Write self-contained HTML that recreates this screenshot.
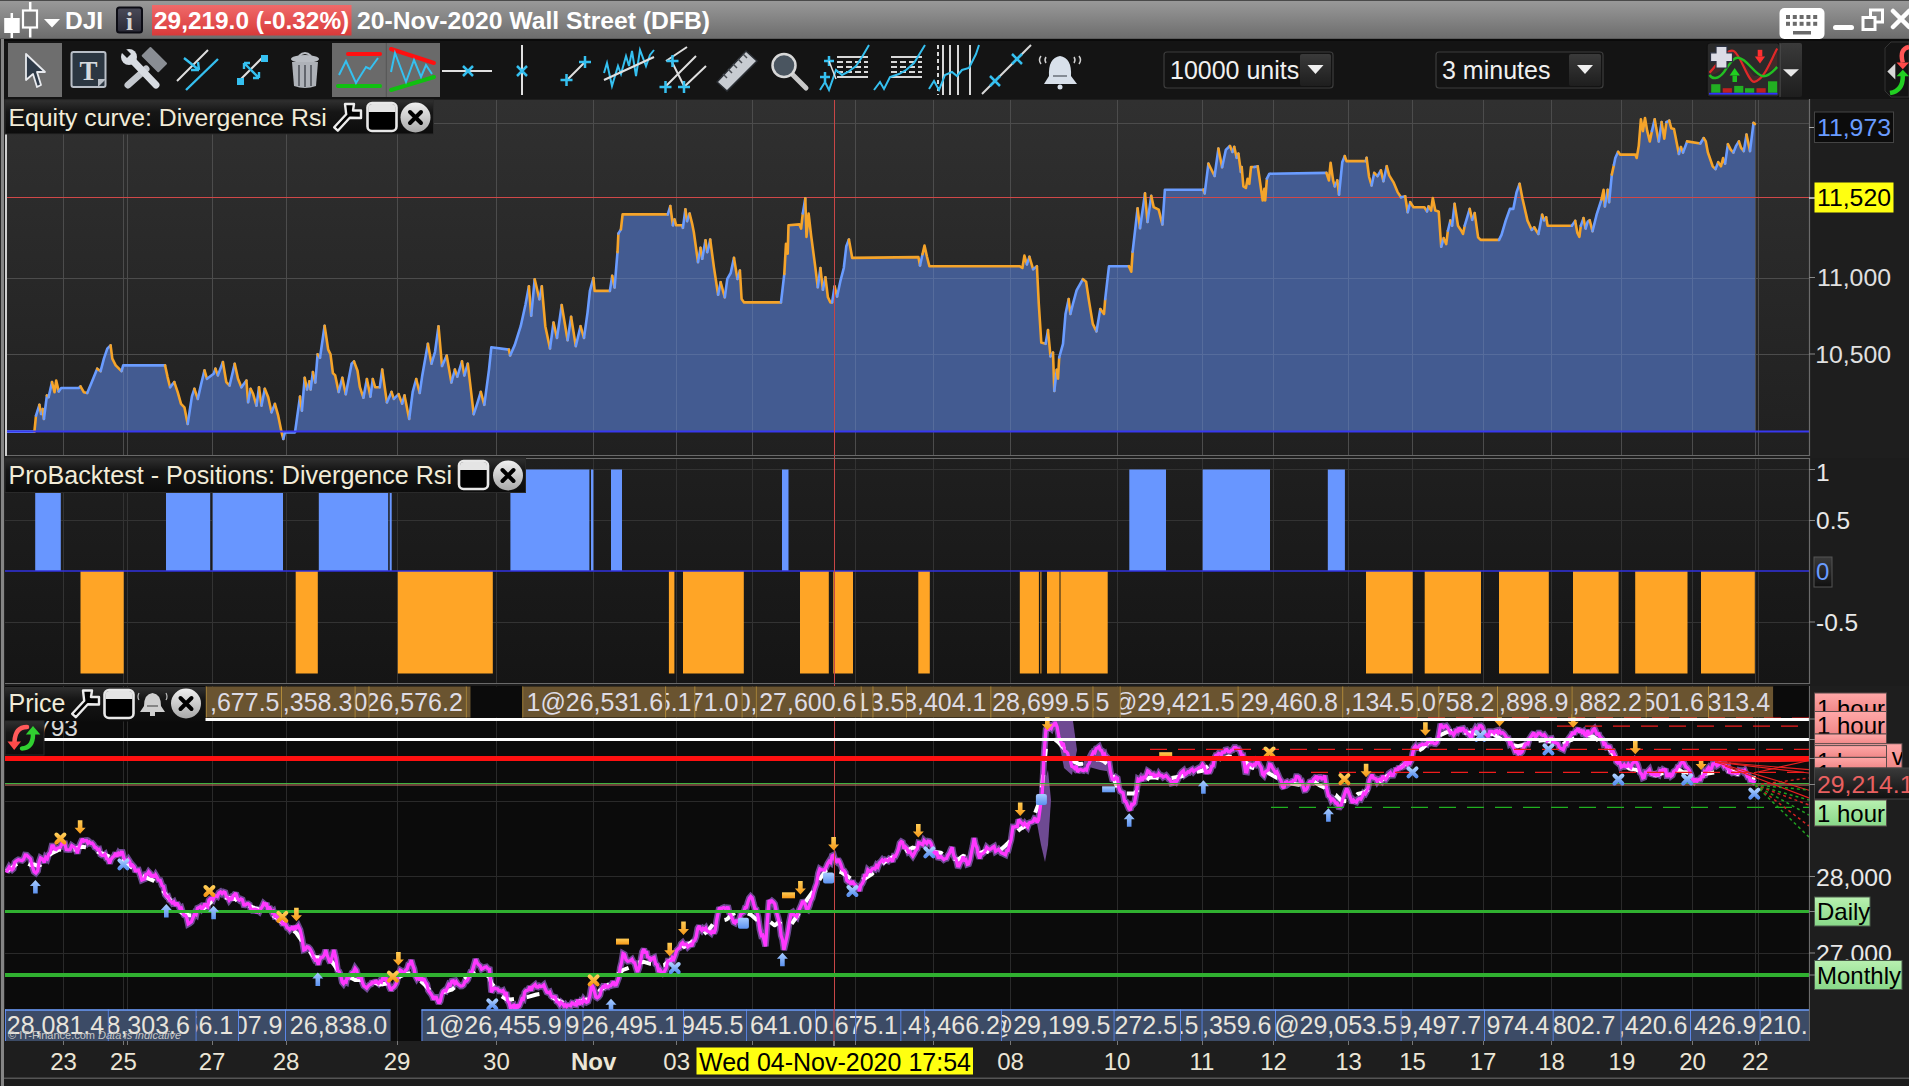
<!DOCTYPE html><html><head><meta charset="utf-8"><style>
html,body{margin:0;padding:0;}
body{width:1909px;height:1086px;overflow:hidden;background:#1c1c1c;font-family:"Liberation Sans", sans-serif;position:relative;}
svg{position:absolute;left:0;top:0;}
svg text{font-family:"Liberation Sans", sans-serif;}
</style></head><body>
<svg width="1909" height="1086" viewBox="0 0 1909 1086">
<defs>
<linearGradient id="gTitle" x1="0" y1="0" x2="0" y2="1"><stop offset="0" stop-color="#9a9a9a"/><stop offset="1" stop-color="#6c6c6c"/></linearGradient>
<linearGradient id="gEq" x1="0" y1="0" x2="0" y2="1"><stop offset="0" stop-color="#303030"/><stop offset="1" stop-color="#202020"/></linearGradient>
<linearGradient id="gRed" x1="0" y1="0" x2="0" y2="1"><stop offset="0" stop-color="#f06a6a"/><stop offset="1" stop-color="#d83a3a"/></linearGradient>
<linearGradient id="gBtn" x1="0" y1="0" x2="0" y2="1"><stop offset="0" stop-color="#3a3a3a"/><stop offset="1" stop-color="#1e1e1e"/></linearGradient>
<linearGradient id="gPink" x1="0" y1="0" x2="0" y2="1"><stop offset="0" stop-color="#ffa8a8"/><stop offset="1" stop-color="#f08888"/></linearGradient>
<linearGradient id="gGreen" x1="0" y1="0" x2="0" y2="1"><stop offset="0" stop-color="#b8f0b0"/><stop offset="1" stop-color="#88d888"/></linearGradient>
<linearGradient id="gDark" x1="0" y1="0" x2="0" y2="1"><stop offset="0" stop-color="#3a3a3a"/><stop offset="1" stop-color="#101010"/></linearGradient>
<linearGradient id="gCircle" x1="0" y1="0" x2="0" y2="1"><stop offset="0" stop-color="#f0f0f0"/><stop offset="1" stop-color="#a8a8a8"/></linearGradient>
<linearGradient id="gLab" x1="0" y1="0" x2="0" y2="1"><stop offset="0" stop-color="#303030"/><stop offset="0.35" stop-color="#161616"/><stop offset="1" stop-color="#0c0c0c"/></linearGradient>
<linearGradient id="gPo" x1="0" y1="0" x2="0" y2="1"><stop offset="0" stop-color="#1f1f1f"/><stop offset="1" stop-color="#151515"/></linearGradient>
<linearGradient id="gMO" x1="0" y1="0" x2="0" y2="1"><stop offset="0" stop-color="#ffcc55"/><stop offset="1" stop-color="#f59818"/></linearGradient><linearGradient id="gMB" x1="0" y1="0" x2="0" y2="1"><stop offset="0" stop-color="#a8ccff"/><stop offset="1" stop-color="#5c92f0"/></linearGradient>
<clipPath id="cEq"><rect x="5" y="100" width="1804" height="356"/></clipPath>
<clipPath id="cPr"><rect x="5" y="687" width="1804" height="353"/></clipPath>
</defs>
<rect x="0" y="0" width="1909" height="1086" fill="#1c1c1c"/><rect x="0" y="39" width="5" height="1047" fill="#262626"/><rect x="1" y="39" width="3" height="1047" fill="#858585"/><rect x="0" y="0" width="1909" height="39" fill="url(#gTitle)"/><rect x="0" y="0" width="1909" height="1" fill="#4a4a4a"/><rect x="0" y="38" width="1909" height="1" fill="#5a5a5a"/><line x1="11.8" y1="13" x2="11.8" y2="38" stroke="#fff" stroke-width="2.5"/><rect x="4.2" y="18" width="15.5" height="15" fill="#fff"/><line x1="30.2" y1="2" x2="30.2" y2="37.5" stroke="#fff" stroke-width="2.5"/><rect x="23" y="10.5" width="14" height="17" fill="#7a7a7a" stroke="#fff" stroke-width="2.2"/><polygon points="44,19 60,19 52,27.5" fill="#fff"/><text x="65" y="29" font-size="24.5" fill="#ffffff" font-weight="bold" text-anchor="start" >DJI</text><linearGradient id="gInfo" x1="0" y1="0" x2="0" y2="1"><stop offset="0" stop-color="#4a4a58"/><stop offset="1" stop-color="#2a2a36"/></linearGradient><rect x="117" y="7.5" width="25" height="25" rx="2.5" fill="url(#gInfo)" stroke="#0c0c14" stroke-width="2"/><text x="129.5" y="29.5" font-size="25" fill="#d4d4d4" font-weight="bold" text-anchor="middle" style="font-family:Liberation Serif">i</text><rect x="152" y="5" width="199.5" height="30.5" fill="url(#gRed)"/><text x="154" y="29" font-size="24.4" fill="#ffffff" font-weight="bold" text-anchor="start" >29,219.0 (-0.32%)</text><text x="357" y="29" font-size="24.7" fill="#ffffff" font-weight="bold" text-anchor="start" >20-Nov-2020 Wall Street (DFB)</text><rect x="1779.5" y="8" width="45" height="31" rx="5" fill="#ffffff"/><rect x="1786.0" y="15.0" width="4" height="4" fill="#6a6a6a"/><rect x="1792.8" y="15.0" width="4" height="4" fill="#6a6a6a"/><rect x="1799.6" y="15.0" width="4" height="4" fill="#6a6a6a"/><rect x="1806.4" y="15.0" width="4" height="4" fill="#6a6a6a"/><rect x="1813.2" y="15.0" width="4" height="4" fill="#6a6a6a"/><rect x="1786.0" y="21.8" width="4" height="4" fill="#6a6a6a"/><rect x="1792.8" y="21.8" width="4" height="4" fill="#6a6a6a"/><rect x="1799.6" y="21.8" width="4" height="4" fill="#6a6a6a"/><rect x="1806.4" y="21.8" width="4" height="4" fill="#6a6a6a"/><rect x="1813.2" y="21.8" width="4" height="4" fill="#6a6a6a"/><rect x="1793" y="31" width="18" height="3.5" fill="#6a6a6a"/><rect x="1833" y="25" width="21" height="5" rx="2.5" fill="#fff"/><rect x="1870.5" y="10" width="12" height="12" fill="none" stroke="#fff" stroke-width="3"/><rect x="1863" y="17.5" width="12" height="12" fill="#777" stroke="#fff" stroke-width="3"/><path d="M1893,11 L1909,27 M1909,11 L1893,27" stroke="#fff" stroke-width="4.5" stroke-linecap="round"/><rect x="4" y="39" width="1905" height="60" fill="#141414"/><rect x="4" y="39" width="1905" height="2" fill="#0a0a0a"/><rect x="8" y="43" width="54" height="54" fill="#6e6e6e"/><path d="M26,54 L45,72 L37,72 L41,85 L37,87 L33,74 L26,80 Z" fill="#2e3a48" stroke="#e8eaee" stroke-width="1.8" stroke-linejoin="round"/><rect x="71.5" y="52" width="34" height="35" rx="2" fill="#2c3742" stroke="#b8bec6" stroke-width="2"/><path d="M98,87 L106,79 L98,79 Z" fill="#b8bec6"/><text x="88.5" y="80" font-size="27" fill="#d6dade" font-weight="bold" text-anchor="middle" style="font-family:Liberation Serif">T</text><line x1="146" y1="69" x2="128" y2="85" stroke="#c4c8ce" stroke-width="7" stroke-linecap="round"/><g transform="rotate(45 154 60)"><rect x="142" y="53" width="24" height="13" rx="1" fill="#8a8e94"/></g><line x1="134" y1="62" x2="156" y2="85" stroke="#d8dce2" stroke-width="7" stroke-linecap="round"/><circle cx="129" cy="57" r="8" fill="#d8dce2"/><path d="M121,52 L127,58 L131,54 L125,48 Z" fill="#141414"/><line x1="177" y1="81" x2="208" y2="50" stroke="#e0e0e0" stroke-width="2"/><line x1="186" y1="90" x2="218" y2="59" stroke="#35c0f0" stroke-width="2.4"/><path d="M184,58 L199,70 M199,70 L198,62 M199,70 L191,70" stroke="#35c0f0" stroke-width="2.4" fill="none"/><line x1="239" y1="81" x2="263" y2="57" stroke="#e0e0e0" stroke-width="2"/><rect x="237" y="78" width="7" height="7" fill="#35c0f0"/><rect x="261" y="55" width="7" height="7" fill="#35c0f0"/><path d="M244,63 L259,78 M244,63 L244,69 M244,63 L250,63 M259,78 L259,72 M259,78 L253,78" stroke="#35c0f0" stroke-width="2.4" fill="none"/><ellipse cx="305" cy="59" rx="14" ry="4" fill="#b8bcc2"/><path d="M299,56 Q305,50 311,56" stroke="#b8bcc2" stroke-width="2" fill="none"/><path d="M292,62 L318,62 L316,86 Q305,90 294,86 Z" fill="#aeb2b8"/><path d="M299,65 L299,86 M305,65 L305,87 M311,65 L311,86" stroke="#4a4e54" stroke-width="1.5"/><rect x="332" y="43" width="108" height="54" fill="#6a6a6a"/><line x1="386.3" y1="43" x2="386.3" y2="97" stroke="#555" stroke-width="1"/><line x1="348" y1="54" x2="380" y2="54" stroke="#ff1010" stroke-width="4" stroke-linecap="round"/><line x1="338" y1="86" x2="380" y2="86" stroke="#10c010" stroke-width="4" stroke-linecap="round"/><polyline points="339,75 346,61 356,83 366,67 370,69 378,58" fill="none" stroke="#35c0f0" stroke-width="2"/><line x1="391" y1="49" x2="434" y2="63" stroke="#ff1010" stroke-width="4" stroke-linecap="round"/><line x1="391" y1="90" x2="434" y2="77" stroke="#10c010" stroke-width="4" stroke-linecap="round"/><polyline points="391,72 395,53 406,82 414,60 421,77 426,65 432,74" fill="none" stroke="#35c0f0" stroke-width="2"/><line x1="442" y1="71" x2="492" y2="71" stroke="#e0e0e0" stroke-width="2"/><path d="M463,66 L473,76 M473,66 L463,76" stroke="#35c0f0" stroke-width="2.5"/><line x1="522" y1="45" x2="522" y2="95" stroke="#e0e0e0" stroke-width="2"/><path d="M517,66 L527,76 M527,66 L517,76" stroke="#35c0f0" stroke-width="2.5"/><line x1="568" y1="79" x2="584" y2="63" stroke="#e0e0e0" stroke-width="2"/><path d="M560.5,80 L572.5,80 M566.5,74 L566.5,86" stroke="#35c0f0" stroke-width="2.5"/><path d="M579,62 L591,62 M585,56 L585,68" stroke="#35c0f0" stroke-width="2.5"/><polyline points="604,73 607,63 612,86 618,66 621,74 626,56 629,66 632,51 636,76 640,50 646,66 650,55 654,50" fill="none" stroke="#35c0f0" stroke-width="2"/><line x1="604" y1="80" x2="654" y2="57" stroke="#e0e0e0" stroke-width="2.2"/><line x1="666" y1="61" x2="687" y2="47" stroke="#e0e0e0" stroke-width="2"/><line x1="666" y1="86" x2="696" y2="56" stroke="#e0e0e0" stroke-width="2"/><line x1="685" y1="86" x2="706" y2="66" stroke="#e0e0e0" stroke-width="2"/><line x1="672" y1="62" x2="684" y2="86" stroke="#e0e0e0" stroke-width="2"/><path d="M666.5,61 L678.5,61 M672.5,55 L672.5,67" stroke="#35c0f0" stroke-width="2.5"/><path d="M659.5,87 L671.5,87 M665.5,81 L665.5,93" stroke="#35c0f0" stroke-width="2.5"/><path d="M678,87 L690,87 M684,81 L684,93" stroke="#35c0f0" stroke-width="2.5"/><path d="M717,82 L746,51 L757,61 L727,91 Z" fill="#c8ccd2" stroke="#2a2e34" stroke-width="1.5"/><path d="M727,78 L723,74 M732,73 L728,69 M737,68 L733,64 M742,63 L738,59 M747,58 L743,54" stroke="#4a4e54" stroke-width="1.5"/><line x1="793" y1="75" x2="806" y2="88" stroke="#c8c8c8" stroke-width="5" stroke-linecap="round"/><circle cx="784" cy="65.5" r="11.5" fill="#4a5560" stroke="#d8d8d8" stroke-width="2.5"/><line x1="837" y1="57" x2="868" y2="57" stroke="#d8d8d8" stroke-width="2" /><line x1="837" y1="62" x2="868" y2="62" stroke="#d8d8d8" stroke-width="2" stroke-dasharray="6,3"/><line x1="837" y1="67" x2="868" y2="67" stroke="#d8d8d8" stroke-width="2" stroke-dasharray="6,3"/><line x1="837" y1="72" x2="868" y2="72" stroke="#d8d8d8" stroke-width="2" stroke-dasharray="6,3"/><line x1="837" y1="77" x2="868" y2="77" stroke="#d8d8d8" stroke-width="2" /><polyline points="820,90 825,82 829,90 836,70 842,75 848,72 856,66 862,57 869,45" fill="none" stroke="#35c0f0" stroke-width="2"/><path d="M824,61 L834,61 M829,56 L829,66" stroke="#35c0f0" stroke-width="2.5"/><path d="M820,77 L830,77 M825,72 L825,82" stroke="#35c0f0" stroke-width="2.5"/><polyline points="829,61 836,79" stroke="#e0e0e0" stroke-width="1.5" fill="none"/><line x1="891" y1="57" x2="922" y2="57" stroke="#d8d8d8" stroke-width="2" /><line x1="891" y1="62" x2="922" y2="62" stroke="#d8d8d8" stroke-width="2" stroke-dasharray="6,3"/><line x1="891" y1="67" x2="922" y2="67" stroke="#d8d8d8" stroke-width="2" stroke-dasharray="6,3"/><line x1="891" y1="72" x2="922" y2="72" stroke="#d8d8d8" stroke-width="2" stroke-dasharray="6,3"/><line x1="891" y1="77" x2="922" y2="77" stroke="#d8d8d8" stroke-width="2" /><polyline points="874,90 880,82 884,89 890,77 899,74 906,70 914,63 925,45" fill="none" stroke="#35c0f0" stroke-width="2"/><line x1="938" y1="45" x2="938" y2="95" stroke="#d8d8d8" stroke-width="2" stroke-dasharray="4,3"/><line x1="943" y1="45" x2="943" y2="95" stroke="#d8d8d8" stroke-width="2"/><line x1="950" y1="45" x2="950" y2="95" stroke="#d8d8d8" stroke-width="2"/><line x1="958" y1="45" x2="958" y2="95" stroke="#d8d8d8" stroke-width="2"/><line x1="970" y1="45" x2="970" y2="95" stroke="#d8d8d8" stroke-width="2"/><polyline points="929,89 934,81 939,90 945,75 952,72 957,76 962,70 969,68 976,54 979,45" fill="none" stroke="#35c0f0" stroke-width="2"/><line x1="982" y1="94" x2="1031" y2="45" stroke="#d8d8d8" stroke-width="2"/><path d="M990,76 L1000,86 M1000,76 L990,86" stroke="#35c0f0" stroke-width="2.5"/><path d="M1012,54 L1022,64 M1022,54 L1012,64" stroke="#35c0f0" stroke-width="2.5"/><path d="M1060,56 Q1072,58 1071,76 L1077,84 L1044,84 L1049,76 Q1048,58 1060,56 Z" fill="#d8e0ea"/><circle cx="1060" cy="87" r="2.5" fill="#d8e0ea"/><line x1="1053" y1="76" x2="1067" y2="76" stroke="#6a7078" stroke-width="1.5"/><path d="M1041,56 Q1038,60 1041,64 M1046,57 Q1044,60 1046,63 M1079,56 Q1082,60 1079,64 M1074,57 Q1076,60 1074,63" stroke="#d0d0d0" stroke-width="1.5" fill="none"/><rect x="1164" y="52" width="169" height="36" rx="3" fill="#131313" stroke="#3c3c3c" stroke-width="1.2"/><rect x="1300" y="54" width="31" height="32" rx="2" fill="url(#gBtn)"/><polygon points="1307.5,65 1323.5,65 1315.5,74" fill="#f0f0f0"/><text x="1170" y="79" font-size="25" fill="#f0f0f0" font-weight="normal" text-anchor="start" >10000 units</text><rect x="1436" y="52" width="167" height="36" rx="3" fill="#131313" stroke="#3c3c3c" stroke-width="1.2"/><rect x="1569" y="54" width="32" height="32" rx="2" fill="url(#gBtn)"/><polygon points="1577.0,65 1593.0,65 1585.0,74" fill="#f0f0f0"/><text x="1442" y="79" font-size="25" fill="#f0f0f0" font-weight="normal" text-anchor="start" >3 minutes</text><rect x="1707.2" y="43" width="72.3" height="54" rx="3" fill="#2a2a2a" stroke="#111" stroke-width="1"/><rect x="1780" y="43" width="22" height="54" rx="2" fill="url(#gBtn)"/><line x1="1780" y1="43" x2="1780" y2="97" stroke="#555" stroke-width="1"/><polygon points="1783,69.3 1799,69.3 1791,76.7" fill="#e8e8e8"/><path d="M1709.5,72.7 C1718,64 1727,48 1733.6,50.9 C1741,55 1748,82 1754.2,81.9 C1764,80 1770,62 1777.2,48.6 L1777.2,66 C1770,70 1764,76 1754.2,76 C1748,70 1742,58 1738.2,57.8 C1728,60 1720,76 1709.5,75 Z" fill="#4a2a2a" opacity="0.8"/><path d="M1709.5,72.7 C1718,64 1727,48 1733.6,50.9 C1741,55 1748,82 1754.2,81.9 C1764,80 1770,62 1777.2,48.6" stroke="#e02828" stroke-width="2.2" fill="none"/><path d="M1709.5,75 C1712,79 1718,80 1724,72 C1730,63 1734,57 1738.2,57.8 C1748,59 1755,76 1763.4,76.2 C1770,76 1774,70 1777.2,67" stroke="#22c022" stroke-width="2.4" fill="none"/><path d="M1716,46.3 L1727,46.3 L1727,52.8 L1732.5,52.8 L1732.5,61.6 L1727,61.6 L1727,68 L1716,68 L1716,61.6 L1710.5,61.6 L1710.5,52.8 L1716,52.8 Z" fill="#dcdce6" stroke="#2a3040" stroke-width="1.2"/><polygon points="1729.6,75.6 1739.9,75.6 1734.7,68.1" fill="#20d020"/><rect x="1732.5" y="75.6" width="4.5" height="6.4" fill="#20c020"/><rect x="1757.7" y="49.8" width="4.6" height="6.8" fill="#ff3030"/><polygon points="1754.8,56.6 1765.1,56.6 1760,63.5" fill="#ff3030"/><rect x="1711.2" y="84.2" width="9.200000000000045" height="8.599999999999994" fill="#22b022"/><rect x="1722.7" y="88.2" width="9.200000000000045" height="4.599999999999994" fill="#c02020"/><rect x="1734.2" y="85.9" width="9.099999999999909" height="6.8999999999999915" fill="#22b022"/><rect x="1745" y="88.2" width="9.200000000000045" height="4.599999999999994" fill="#22b022"/><rect x="1756.5" y="88.2" width="9.200000000000045" height="4.599999999999994" fill="#c02020"/><rect x="1768" y="81.3" width="9.200000000000045" height="11.5" fill="#22b022"/><rect x="1709" y="92.8" width="68.5" height="1.8" fill="#3030ff"/><path d="M1909,42 L1891,42 L1885,48 L1885,91 L1891,97 L1909,97 Z" fill="#141414" stroke="#333" stroke-width="1"/><polygon points="1887.3,71.6 1895.3,63.5 1895.3,79.6" fill="#d8d8d8"/><path d="M1909,47 Q1899,49 1902.8,62.5" stroke="#ff5555" stroke-width="4.5" fill="none"/><polygon points="1896.5,62.4 1909,62.4 1902.8,69.3" fill="#ff4a4a"/><path d="M1902.8,76 Q1903,91 1890,93" stroke="#22d022" stroke-width="4.5" fill="none"/><polygon points="1896.5,76.2 1909,76.2 1902.8,69.8" fill="#22d022"/><rect x="4" y="99" width="1905" height="359" fill="#1e1e1e"/><rect x="5" y="100" width="1804" height="356" fill="url(#gEq)"/><line x1="63.5" y1="100" x2="63.5" y2="456" stroke="#383838" stroke-width="1"/><line x1="123.5" y1="100" x2="123.5" y2="456" stroke="#383838" stroke-width="1"/><line x1="127.5" y1="100" x2="127.5" y2="456" stroke="#383838" stroke-width="1"/><line x1="212.5" y1="100" x2="212.5" y2="456" stroke="#383838" stroke-width="1"/><line x1="286.5" y1="100" x2="286.5" y2="456" stroke="#383838" stroke-width="1"/><line x1="397.5" y1="100" x2="397.5" y2="456" stroke="#383838" stroke-width="1"/><line x1="496.5" y1="100" x2="496.5" y2="456" stroke="#383838" stroke-width="1"/><line x1="593.5" y1="100" x2="593.5" y2="456" stroke="#383838" stroke-width="1"/><line x1="676.5" y1="100" x2="676.5" y2="456" stroke="#383838" stroke-width="1"/><line x1="752.5" y1="100" x2="752.5" y2="456" stroke="#383838" stroke-width="1"/><line x1="855.5" y1="100" x2="855.5" y2="456" stroke="#383838" stroke-width="1"/><line x1="933.5" y1="100" x2="933.5" y2="456" stroke="#383838" stroke-width="1"/><line x1="1010.5" y1="100" x2="1010.5" y2="456" stroke="#383838" stroke-width="1"/><line x1="1117.5" y1="100" x2="1117.5" y2="456" stroke="#383838" stroke-width="1"/><line x1="1202.5" y1="100" x2="1202.5" y2="456" stroke="#383838" stroke-width="1"/><line x1="1273.5" y1="100" x2="1273.5" y2="456" stroke="#383838" stroke-width="1"/><line x1="1348.5" y1="100" x2="1348.5" y2="456" stroke="#383838" stroke-width="1"/><line x1="1412.5" y1="100" x2="1412.5" y2="456" stroke="#383838" stroke-width="1"/><line x1="1483.5" y1="100" x2="1483.5" y2="456" stroke="#383838" stroke-width="1"/><line x1="1551.5" y1="100" x2="1551.5" y2="456" stroke="#383838" stroke-width="1"/><line x1="1621.5" y1="100" x2="1621.5" y2="456" stroke="#383838" stroke-width="1"/><line x1="1692.5" y1="100" x2="1692.5" y2="456" stroke="#383838" stroke-width="1"/><line x1="1755.5" y1="100" x2="1755.5" y2="456" stroke="#383838" stroke-width="1"/><line x1="1758.5" y1="100" x2="1758.5" y2="456" stroke="#383838" stroke-width="1"/><line x1="5" y1="123.5" x2="1809" y2="123.5" stroke="#383838" stroke-width="1"/><line x1="5" y1="278.5" x2="1809" y2="278.5" stroke="#383838" stroke-width="1"/><line x1="5" y1="354.5" x2="1809" y2="354.5" stroke="#383838" stroke-width="1"/><g clip-path="url(#cEq)"><polygon points="5.0,431.6 34.4,431.6 36.0,415.7 39.4,404.8 41.1,414.0 42.7,409.0 43.9,419.0 46.9,395.5 48.6,397.2 52.0,382.1 54.5,392.2 56.2,380.5 58.7,391.4 61.2,388.0 78.8,388.0 80.5,386.3 83.8,392.2 87.2,393.0 91.4,383.0 97.2,368.7 100.6,371.2 103.9,358.7 107.3,348.6 110.6,345.3 112.3,358.7 115.7,365.4 121.5,371.2 123.2,365.4 165.1,365.4 167.6,377.1 170.1,387.2 174.3,382.1 177.7,392.2 181.0,403.9 184.4,407.3 187.7,424.0 191.9,396.4 194.4,388.8 197.8,398.9 201.2,383.8 204.5,370.4 207.0,378.8 213.7,373.8 215.4,368.7 217.9,375.4 222.9,362.0 226.3,382.1 229.6,385.5 234.7,363.7 238.0,378.8 241.4,387.2 246.4,380.5 248.1,402.2 250.6,388.8 253.1,393.9 256.5,405.6 259.0,387.2 261.5,405.6 264.8,388.8 268.2,397.2 271.5,412.3 274.9,403.9 278.2,415.7 281.6,432.4 283.3,439.0 284.9,432.4 295.0,432.4 300.0,396.6 301.9,410.7 304.7,377.8 307.0,389.5 309.4,381.3 310.6,389.5 312.9,372.0 315.3,382.5 317.6,354.3 320.0,357.8 324.6,325.7 328.2,349.6 330.5,354.3 332.9,373.1 335.2,375.4 338.7,391.9 342.3,377.8 345.8,394.2 351.6,363.7 354.0,361.4 357.5,370.8 359.9,387.2 363.4,397.7 366.9,379.0 370.4,396.6 372.8,379.0 375.1,387.2 379.8,387.2 382.2,369.6 386.9,402.4 391.5,391.9 393.9,398.9 398.6,394.2 402.1,403.6 404.5,395.4 409.2,418.9 412.7,391.9 416.2,379.0 419.7,393.0 422.1,376.6 427.9,343.8 431.5,363.7 435.0,352.0 438.5,326.2 442.0,366.0 446.7,355.5 451.4,382.5 454.9,369.6 457.3,376.6 462.0,361.4 464.3,375.4 467.8,363.7 473.7,414.2 477.2,403.6 480.8,391.9 484.3,404.8 489.0,369.6 491.3,347.3 508.9,349.6 510.1,355.5 514.8,344.9 520.7,326.2 525.4,305.0 528.9,286.2 531.2,315.6 534.7,279.2 539.4,299.2 541.8,286.2 545.3,326.2 550.0,348.5 553.5,322.6 557.0,337.9 561.7,305.0 567.6,340.2 571.1,316.8 575.8,346.1 580.5,326.2 584.0,337.9 587.6,312.1 589.9,290.9 593.4,278.0 594.6,290.9 609.9,290.9 612.2,275.7 614.6,287.4 617.5,252.1 618.4,233.6 620.9,229.4 622.6,214.4 667.8,214.4 670.3,206.0 672.9,225.3 674.5,219.4 676.2,225.3 682.1,225.3 682.9,227.8 685.4,209.3 687.1,221.1 689.6,213.5 692.1,223.6 693.8,232.0 698.0,262.1 700.5,247.9 702.2,258.8 705.5,240.3 707.2,252.1 708.9,246.2 710.2,239.5 713.9,267.2 718.1,294.8 720.6,282.2 724.8,297.3 727.3,278.9 730.7,273.0 734.0,257.9 737.4,278.9 739.9,270.5 741.6,299.0 744.1,302.4 781.0,302.4 784.3,273.9 786.0,243.7 787.7,253.8 788.5,225.3 799.4,224.4 801.1,228.6 802.8,213.5 805.3,198.4 806.5,237.0 808.6,213.5 811.1,235.3 815.3,267.2 817.8,287.3 820.4,268.0 822.9,289.8 825.4,277.2 827.9,297.3 830.4,302.4 832.1,302.4 834.6,286.4 837.1,296.5 840.5,280.6 843.8,268.0 846.3,246.2 848.9,239.5 852.2,257.9 918.4,257.1 920.0,265.5 922.5,254.3 924.5,245.6 927.0,256.8 929.4,266.2 1019.5,266.2 1022.4,268.0 1024.4,255.6 1026.9,264.3 1029.4,256.8 1033.1,269.2 1036.9,266.2 1038.8,304.0 1041.3,342.6 1045.6,343.8 1048.0,330.1 1050.5,356.3 1053.0,352.5 1054.3,391.0 1056.7,369.9 1058.0,378.6 1059.2,357.5 1063.0,343.8 1065.5,314.0 1068.7,299.1 1070.4,314.0 1072.9,304.0 1076.6,290.4 1082.9,279.2 1086.1,281.7 1089.1,301.6 1092.8,323.9 1096.5,331.4 1100.3,309.0 1104.0,314.0 1105.2,299.1 1109.0,266.2 1128.9,266.2 1131.3,271.7 1132.6,251.8 1137.6,208.3 1140.0,228.2 1145.0,193.4 1147.5,222.0 1151.2,195.9 1153.7,207.1 1158.7,209.6 1162.4,224.5 1164.9,189.7 1203.4,189.7 1204.7,193.4 1208.4,163.6 1212.1,171.0 1214.6,176.0 1218.4,148.6 1222.1,167.3 1225.8,149.9 1229.6,146.2 1230.0,146.0 1232.5,151.9 1234.2,146.9 1236.7,157.8 1238.4,153.6 1240.9,172.0 1241.7,167.0 1243.4,186.3 1245.9,188.0 1247.6,178.7 1249.3,183.8 1251.0,167.0 1254.3,167.0 1257.7,166.2 1259.3,177.0 1262.7,200.5 1264.4,188.8 1265.2,200.5 1266.9,178.7 1269.4,173.7 1326.4,172.9 1328.9,180.4 1330.6,162.8 1333.1,180.4 1334.8,186.3 1337.3,180.4 1339.0,194.6 1342.3,162.0 1344.8,156.1 1346.5,161.1 1365.8,161.1 1366.6,157.8 1369.1,177.0 1371.6,185.4 1374.2,172.9 1377.5,176.2 1380.9,170.3 1383.4,181.2 1386.7,166.2 1389.2,175.4 1393.4,182.1 1397.6,192.1 1401.0,197.2 1405.2,196.3 1407.7,212.2 1410.2,202.2 1413.5,207.2 1424.4,207.2 1427.0,211.4 1428.6,206.4 1431.1,210.6 1432.8,198.0 1435.3,210.6 1438.7,211.4 1441.2,246.6 1443.7,238.2 1446.2,244.1 1447.9,230.7 1450.4,220.6 1452.1,225.7 1454.6,203.9 1458.0,225.7 1461.3,230.7 1463.0,234.0 1464.7,225.7 1469.7,208.9 1472.2,219.8 1474.7,213.1 1478.1,237.4 1480.6,239.9 1499.0,239.9 1501.5,234.9 1505.7,220.6 1509.9,208.9 1513.3,208.9 1516.6,192.1 1519.6,183.8 1522.5,198.8 1527.5,220.6 1531.7,229.8 1534.2,227.3 1538.4,234.0 1542.1,214.7 1544.1,220.2 1546.2,217.4 1547.6,225.7 1571.8,225.7 1575.2,220.9 1577.3,232.6 1579.4,236.8 1580.8,225.7 1583.5,218.1 1585.6,228.5 1587.7,221.6 1589.7,220.2 1592.5,231.3 1596.6,214.7 1601.5,199.5 1603.6,189.8 1604.9,206.4 1607.7,189.8 1609.1,202.2 1611.8,174.6 1613.9,164.9 1615.3,158.0 1618.1,151.8 1620.1,154.6 1635.3,154.6 1636.7,158.0 1638.8,145.6 1640.9,119.3 1642.9,131.1 1645.0,118.0 1647.1,130.4 1649.8,141.4 1651.9,131.1 1654.7,119.3 1656.1,127.6 1658.8,141.4 1661.6,122.1 1664.3,138.7 1666.4,122.1 1669.2,120.7 1671.3,128.3 1674.0,129.0 1678.9,153.9 1680.9,147.0 1683.0,152.5 1685.1,147.0 1687.1,141.4 1700.3,143.5 1703.7,138.0 1705.8,141.4 1707.9,152.5 1712.7,166.3 1715.5,169.1 1718.2,162.2 1721.0,166.3 1723.1,158.0 1725.1,163.6 1727.9,144.2 1730.7,149.7 1733.4,152.5 1736.2,145.6 1738.9,141.4 1741.0,147.7 1743.8,151.1 1746.5,134.5 1750.0,151.1 1753.5,122.8 1755.0,124.0 1755,431.5 5,431.5" fill="#435b91"/><g opacity="0.10"><line x1="63.5" y1="100" x2="63.5" y2="456" stroke="#ffffff" stroke-width="1"/><line x1="123.5" y1="100" x2="123.5" y2="456" stroke="#ffffff" stroke-width="1"/><line x1="127.5" y1="100" x2="127.5" y2="456" stroke="#ffffff" stroke-width="1"/><line x1="212.5" y1="100" x2="212.5" y2="456" stroke="#ffffff" stroke-width="1"/><line x1="286.5" y1="100" x2="286.5" y2="456" stroke="#ffffff" stroke-width="1"/><line x1="397.5" y1="100" x2="397.5" y2="456" stroke="#ffffff" stroke-width="1"/><line x1="496.5" y1="100" x2="496.5" y2="456" stroke="#ffffff" stroke-width="1"/><line x1="593.5" y1="100" x2="593.5" y2="456" stroke="#ffffff" stroke-width="1"/><line x1="676.5" y1="100" x2="676.5" y2="456" stroke="#ffffff" stroke-width="1"/><line x1="752.5" y1="100" x2="752.5" y2="456" stroke="#ffffff" stroke-width="1"/><line x1="855.5" y1="100" x2="855.5" y2="456" stroke="#ffffff" stroke-width="1"/><line x1="933.5" y1="100" x2="933.5" y2="456" stroke="#ffffff" stroke-width="1"/><line x1="1010.5" y1="100" x2="1010.5" y2="456" stroke="#ffffff" stroke-width="1"/><line x1="1117.5" y1="100" x2="1117.5" y2="456" stroke="#ffffff" stroke-width="1"/><line x1="1202.5" y1="100" x2="1202.5" y2="456" stroke="#ffffff" stroke-width="1"/><line x1="1273.5" y1="100" x2="1273.5" y2="456" stroke="#ffffff" stroke-width="1"/><line x1="1348.5" y1="100" x2="1348.5" y2="456" stroke="#ffffff" stroke-width="1"/><line x1="1412.5" y1="100" x2="1412.5" y2="456" stroke="#ffffff" stroke-width="1"/><line x1="1483.5" y1="100" x2="1483.5" y2="456" stroke="#ffffff" stroke-width="1"/><line x1="1551.5" y1="100" x2="1551.5" y2="456" stroke="#ffffff" stroke-width="1"/><line x1="1621.5" y1="100" x2="1621.5" y2="456" stroke="#ffffff" stroke-width="1"/><line x1="1692.5" y1="100" x2="1692.5" y2="456" stroke="#ffffff" stroke-width="1"/><line x1="1755.5" y1="100" x2="1755.5" y2="456" stroke="#ffffff" stroke-width="1"/><line x1="1758.5" y1="100" x2="1758.5" y2="456" stroke="#ffffff" stroke-width="1"/><line x1="5" y1="123.5" x2="1809" y2="123.5" stroke="#ffffff" stroke-width="1"/><line x1="5" y1="278.5" x2="1809" y2="278.5" stroke="#ffffff" stroke-width="1"/><line x1="5" y1="354.5" x2="1809" y2="354.5" stroke="#ffffff" stroke-width="1"/></g><line x1="5" y1="197.5" x2="1809" y2="197.5" stroke="#d04848" stroke-width="1"/><polyline points="5.0,431.6 34.4,431.6" fill="none" stroke="#6a9cff" stroke-width="2.6" stroke-linejoin="round" stroke-linecap="round"/><polyline points="34.4,431.6 36.0,415.7" fill="none" stroke="#f5a42a" stroke-width="2.6" stroke-linejoin="round" stroke-linecap="round"/><polyline points="36.0,415.7 39.4,404.8" fill="none" stroke="#6a9cff" stroke-width="2.6" stroke-linejoin="round" stroke-linecap="round"/><polyline points="39.4,404.8 41.1,414.0" fill="none" stroke="#f5a42a" stroke-width="2.6" stroke-linejoin="round" stroke-linecap="round"/><polyline points="41.1,414.0 42.7,409.0" fill="none" stroke="#6a9cff" stroke-width="2.6" stroke-linejoin="round" stroke-linecap="round"/><polyline points="42.7,409.0 43.9,419.0" fill="none" stroke="#f5a42a" stroke-width="2.6" stroke-linejoin="round" stroke-linecap="round"/><polyline points="43.9,419.0 46.9,395.5" fill="none" stroke="#6a9cff" stroke-width="2.6" stroke-linejoin="round" stroke-linecap="round"/><polyline points="46.9,395.5 48.6,397.2" fill="none" stroke="#f5a42a" stroke-width="2.6" stroke-linejoin="round" stroke-linecap="round"/><polyline points="48.6,397.2 52.0,382.1" fill="none" stroke="#6a9cff" stroke-width="2.6" stroke-linejoin="round" stroke-linecap="round"/><polyline points="52.0,382.1 54.5,392.2 56.2,380.5 58.7,391.4" fill="none" stroke="#f5a42a" stroke-width="2.6" stroke-linejoin="round" stroke-linecap="round"/><polyline points="58.7,391.4 61.2,388.0 78.8,388.0 80.5,386.3" fill="none" stroke="#6a9cff" stroke-width="2.6" stroke-linejoin="round" stroke-linecap="round"/><polyline points="80.5,386.3 83.8,392.2 87.2,393.0" fill="none" stroke="#f5a42a" stroke-width="2.6" stroke-linejoin="round" stroke-linecap="round"/><polyline points="87.2,393.0 91.4,383.0 97.2,368.7" fill="none" stroke="#6a9cff" stroke-width="2.6" stroke-linejoin="round" stroke-linecap="round"/><polyline points="97.2,368.7 100.6,371.2" fill="none" stroke="#f5a42a" stroke-width="2.6" stroke-linejoin="round" stroke-linecap="round"/><polyline points="100.6,371.2 103.9,358.7 107.3,348.6 110.6,345.3" fill="none" stroke="#6a9cff" stroke-width="2.6" stroke-linejoin="round" stroke-linecap="round"/><polyline points="110.6,345.3 112.3,358.7 115.7,365.4 121.5,371.2" fill="none" stroke="#f5a42a" stroke-width="2.6" stroke-linejoin="round" stroke-linecap="round"/><polyline points="121.5,371.2 123.2,365.4 165.1,365.4" fill="none" stroke="#6a9cff" stroke-width="2.6" stroke-linejoin="round" stroke-linecap="round"/><polyline points="165.1,365.4 167.6,377.1 170.1,387.2" fill="none" stroke="#f5a42a" stroke-width="2.6" stroke-linejoin="round" stroke-linecap="round"/><polyline points="170.1,387.2 174.3,382.1" fill="none" stroke="#6a9cff" stroke-width="2.6" stroke-linejoin="round" stroke-linecap="round"/><polyline points="174.3,382.1 177.7,392.2 181.0,403.9 184.4,407.3 187.7,424.0" fill="none" stroke="#f5a42a" stroke-width="2.6" stroke-linejoin="round" stroke-linecap="round"/><polyline points="187.7,424.0 191.9,396.4 194.4,388.8" fill="none" stroke="#6a9cff" stroke-width="2.6" stroke-linejoin="round" stroke-linecap="round"/><polyline points="194.4,388.8 197.8,398.9" fill="none" stroke="#f5a42a" stroke-width="2.6" stroke-linejoin="round" stroke-linecap="round"/><polyline points="197.8,398.9 201.2,383.8 204.5,370.4" fill="none" stroke="#6a9cff" stroke-width="2.6" stroke-linejoin="round" stroke-linecap="round"/><polyline points="204.5,370.4 207.0,378.8" fill="none" stroke="#f5a42a" stroke-width="2.6" stroke-linejoin="round" stroke-linecap="round"/><polyline points="207.0,378.8 213.7,373.8 215.4,368.7" fill="none" stroke="#6a9cff" stroke-width="2.6" stroke-linejoin="round" stroke-linecap="round"/><polyline points="215.4,368.7 217.9,375.4" fill="none" stroke="#f5a42a" stroke-width="2.6" stroke-linejoin="round" stroke-linecap="round"/><polyline points="217.9,375.4 222.9,362.0" fill="none" stroke="#6a9cff" stroke-width="2.6" stroke-linejoin="round" stroke-linecap="round"/><polyline points="222.9,362.0 226.3,382.1 229.6,385.5" fill="none" stroke="#f5a42a" stroke-width="2.6" stroke-linejoin="round" stroke-linecap="round"/><polyline points="229.6,385.5 234.7,363.7" fill="none" stroke="#6a9cff" stroke-width="2.6" stroke-linejoin="round" stroke-linecap="round"/><polyline points="234.7,363.7 238.0,378.8 241.4,387.2" fill="none" stroke="#f5a42a" stroke-width="2.6" stroke-linejoin="round" stroke-linecap="round"/><polyline points="241.4,387.2 246.4,380.5" fill="none" stroke="#6a9cff" stroke-width="2.6" stroke-linejoin="round" stroke-linecap="round"/><polyline points="246.4,380.5 248.1,402.2" fill="none" stroke="#f5a42a" stroke-width="2.6" stroke-linejoin="round" stroke-linecap="round"/><polyline points="248.1,402.2 250.6,388.8" fill="none" stroke="#6a9cff" stroke-width="2.6" stroke-linejoin="round" stroke-linecap="round"/><polyline points="250.6,388.8 253.1,393.9 256.5,405.6" fill="none" stroke="#f5a42a" stroke-width="2.6" stroke-linejoin="round" stroke-linecap="round"/><polyline points="256.5,405.6 259.0,387.2" fill="none" stroke="#6a9cff" stroke-width="2.6" stroke-linejoin="round" stroke-linecap="round"/><polyline points="259.0,387.2 261.5,405.6" fill="none" stroke="#f5a42a" stroke-width="2.6" stroke-linejoin="round" stroke-linecap="round"/><polyline points="261.5,405.6 264.8,388.8" fill="none" stroke="#6a9cff" stroke-width="2.6" stroke-linejoin="round" stroke-linecap="round"/><polyline points="264.8,388.8 268.2,397.2 271.5,412.3" fill="none" stroke="#f5a42a" stroke-width="2.6" stroke-linejoin="round" stroke-linecap="round"/><polyline points="271.5,412.3 274.9,403.9" fill="none" stroke="#6a9cff" stroke-width="2.6" stroke-linejoin="round" stroke-linecap="round"/><polyline points="274.9,403.9 278.2,415.7 281.6,432.4 283.3,439.0" fill="none" stroke="#f5a42a" stroke-width="2.6" stroke-linejoin="round" stroke-linecap="round"/><polyline points="283.3,439.0 284.9,432.4 295.0,432.4 300.0,396.6" fill="none" stroke="#6a9cff" stroke-width="2.6" stroke-linejoin="round" stroke-linecap="round"/><polyline points="300.0,396.6 301.9,410.7" fill="none" stroke="#f5a42a" stroke-width="2.6" stroke-linejoin="round" stroke-linecap="round"/><polyline points="301.9,410.7 304.7,377.8" fill="none" stroke="#6a9cff" stroke-width="2.6" stroke-linejoin="round" stroke-linecap="round"/><polyline points="304.7,377.8 307.0,389.5" fill="none" stroke="#f5a42a" stroke-width="2.6" stroke-linejoin="round" stroke-linecap="round"/><polyline points="307.0,389.5 309.4,381.3" fill="none" stroke="#6a9cff" stroke-width="2.6" stroke-linejoin="round" stroke-linecap="round"/><polyline points="309.4,381.3 310.6,389.5" fill="none" stroke="#f5a42a" stroke-width="2.6" stroke-linejoin="round" stroke-linecap="round"/><polyline points="310.6,389.5 312.9,372.0" fill="none" stroke="#6a9cff" stroke-width="2.6" stroke-linejoin="round" stroke-linecap="round"/><polyline points="312.9,372.0 315.3,382.5" fill="none" stroke="#f5a42a" stroke-width="2.6" stroke-linejoin="round" stroke-linecap="round"/><polyline points="315.3,382.5 317.6,354.3" fill="none" stroke="#6a9cff" stroke-width="2.6" stroke-linejoin="round" stroke-linecap="round"/><polyline points="317.6,354.3 320.0,357.8" fill="none" stroke="#f5a42a" stroke-width="2.6" stroke-linejoin="round" stroke-linecap="round"/><polyline points="320.0,357.8 324.6,325.7" fill="none" stroke="#6a9cff" stroke-width="2.6" stroke-linejoin="round" stroke-linecap="round"/><polyline points="324.6,325.7 328.2,349.6 330.5,354.3 332.9,373.1 335.2,375.4 338.7,391.9" fill="none" stroke="#f5a42a" stroke-width="2.6" stroke-linejoin="round" stroke-linecap="round"/><polyline points="338.7,391.9 342.3,377.8" fill="none" stroke="#6a9cff" stroke-width="2.6" stroke-linejoin="round" stroke-linecap="round"/><polyline points="342.3,377.8 345.8,394.2" fill="none" stroke="#f5a42a" stroke-width="2.6" stroke-linejoin="round" stroke-linecap="round"/><polyline points="345.8,394.2 351.6,363.7 354.0,361.4" fill="none" stroke="#6a9cff" stroke-width="2.6" stroke-linejoin="round" stroke-linecap="round"/><polyline points="354.0,361.4 357.5,370.8 359.9,387.2 363.4,397.7" fill="none" stroke="#f5a42a" stroke-width="2.6" stroke-linejoin="round" stroke-linecap="round"/><polyline points="363.4,397.7 366.9,379.0" fill="none" stroke="#6a9cff" stroke-width="2.6" stroke-linejoin="round" stroke-linecap="round"/><polyline points="366.9,379.0 370.4,396.6" fill="none" stroke="#f5a42a" stroke-width="2.6" stroke-linejoin="round" stroke-linecap="round"/><polyline points="370.4,396.6 372.8,379.0" fill="none" stroke="#6a9cff" stroke-width="2.6" stroke-linejoin="round" stroke-linecap="round"/><polyline points="372.8,379.0 375.1,387.2 379.8,387.2" fill="none" stroke="#f5a42a" stroke-width="2.6" stroke-linejoin="round" stroke-linecap="round"/><polyline points="379.8,387.2 382.2,369.6" fill="none" stroke="#6a9cff" stroke-width="2.6" stroke-linejoin="round" stroke-linecap="round"/><polyline points="382.2,369.6 386.9,402.4" fill="none" stroke="#f5a42a" stroke-width="2.6" stroke-linejoin="round" stroke-linecap="round"/><polyline points="386.9,402.4 391.5,391.9" fill="none" stroke="#6a9cff" stroke-width="2.6" stroke-linejoin="round" stroke-linecap="round"/><polyline points="391.5,391.9 393.9,398.9" fill="none" stroke="#f5a42a" stroke-width="2.6" stroke-linejoin="round" stroke-linecap="round"/><polyline points="393.9,398.9 398.6,394.2" fill="none" stroke="#6a9cff" stroke-width="2.6" stroke-linejoin="round" stroke-linecap="round"/><polyline points="398.6,394.2 402.1,403.6" fill="none" stroke="#f5a42a" stroke-width="2.6" stroke-linejoin="round" stroke-linecap="round"/><polyline points="402.1,403.6 404.5,395.4" fill="none" stroke="#6a9cff" stroke-width="2.6" stroke-linejoin="round" stroke-linecap="round"/><polyline points="404.5,395.4 409.2,418.9" fill="none" stroke="#f5a42a" stroke-width="2.6" stroke-linejoin="round" stroke-linecap="round"/><polyline points="409.2,418.9 412.7,391.9 416.2,379.0" fill="none" stroke="#6a9cff" stroke-width="2.6" stroke-linejoin="round" stroke-linecap="round"/><polyline points="416.2,379.0 419.7,393.0" fill="none" stroke="#f5a42a" stroke-width="2.6" stroke-linejoin="round" stroke-linecap="round"/><polyline points="419.7,393.0 422.1,376.6 427.9,343.8" fill="none" stroke="#6a9cff" stroke-width="2.6" stroke-linejoin="round" stroke-linecap="round"/><polyline points="427.9,343.8 431.5,363.7" fill="none" stroke="#f5a42a" stroke-width="2.6" stroke-linejoin="round" stroke-linecap="round"/><polyline points="431.5,363.7 435.0,352.0 438.5,326.2" fill="none" stroke="#6a9cff" stroke-width="2.6" stroke-linejoin="round" stroke-linecap="round"/><polyline points="438.5,326.2 442.0,366.0" fill="none" stroke="#f5a42a" stroke-width="2.6" stroke-linejoin="round" stroke-linecap="round"/><polyline points="442.0,366.0 446.7,355.5" fill="none" stroke="#6a9cff" stroke-width="2.6" stroke-linejoin="round" stroke-linecap="round"/><polyline points="446.7,355.5 451.4,382.5" fill="none" stroke="#f5a42a" stroke-width="2.6" stroke-linejoin="round" stroke-linecap="round"/><polyline points="451.4,382.5 454.9,369.6" fill="none" stroke="#6a9cff" stroke-width="2.6" stroke-linejoin="round" stroke-linecap="round"/><polyline points="454.9,369.6 457.3,376.6" fill="none" stroke="#f5a42a" stroke-width="2.6" stroke-linejoin="round" stroke-linecap="round"/><polyline points="457.3,376.6 462.0,361.4" fill="none" stroke="#6a9cff" stroke-width="2.6" stroke-linejoin="round" stroke-linecap="round"/><polyline points="462.0,361.4 464.3,375.4" fill="none" stroke="#f5a42a" stroke-width="2.6" stroke-linejoin="round" stroke-linecap="round"/><polyline points="464.3,375.4 467.8,363.7" fill="none" stroke="#6a9cff" stroke-width="2.6" stroke-linejoin="round" stroke-linecap="round"/><polyline points="467.8,363.7 473.7,414.2" fill="none" stroke="#f5a42a" stroke-width="2.6" stroke-linejoin="round" stroke-linecap="round"/><polyline points="473.7,414.2 477.2,403.6 480.8,391.9" fill="none" stroke="#6a9cff" stroke-width="2.6" stroke-linejoin="round" stroke-linecap="round"/><polyline points="480.8,391.9 484.3,404.8" fill="none" stroke="#f5a42a" stroke-width="2.6" stroke-linejoin="round" stroke-linecap="round"/><polyline points="484.3,404.8 489.0,369.6 491.3,347.3 508.9,349.6" fill="none" stroke="#6a9cff" stroke-width="2.6" stroke-linejoin="round" stroke-linecap="round"/><polyline points="508.9,349.6 510.1,355.5" fill="none" stroke="#f5a42a" stroke-width="2.6" stroke-linejoin="round" stroke-linecap="round"/><polyline points="510.1,355.5 514.8,344.9 520.7,326.2 525.4,305.0 528.9,286.2" fill="none" stroke="#6a9cff" stroke-width="2.6" stroke-linejoin="round" stroke-linecap="round"/><polyline points="528.9,286.2 531.2,315.6" fill="none" stroke="#f5a42a" stroke-width="2.6" stroke-linejoin="round" stroke-linecap="round"/><polyline points="531.2,315.6 534.7,279.2" fill="none" stroke="#6a9cff" stroke-width="2.6" stroke-linejoin="round" stroke-linecap="round"/><polyline points="534.7,279.2 539.4,299.2" fill="none" stroke="#f5a42a" stroke-width="2.6" stroke-linejoin="round" stroke-linecap="round"/><polyline points="539.4,299.2 541.8,286.2" fill="none" stroke="#6a9cff" stroke-width="2.6" stroke-linejoin="round" stroke-linecap="round"/><polyline points="541.8,286.2 545.3,326.2 550.0,348.5" fill="none" stroke="#f5a42a" stroke-width="2.6" stroke-linejoin="round" stroke-linecap="round"/><polyline points="550.0,348.5 553.5,322.6" fill="none" stroke="#6a9cff" stroke-width="2.6" stroke-linejoin="round" stroke-linecap="round"/><polyline points="553.5,322.6 557.0,337.9" fill="none" stroke="#f5a42a" stroke-width="2.6" stroke-linejoin="round" stroke-linecap="round"/><polyline points="557.0,337.9 561.7,305.0" fill="none" stroke="#6a9cff" stroke-width="2.6" stroke-linejoin="round" stroke-linecap="round"/><polyline points="561.7,305.0 567.6,340.2" fill="none" stroke="#f5a42a" stroke-width="2.6" stroke-linejoin="round" stroke-linecap="round"/><polyline points="567.6,340.2 571.1,316.8" fill="none" stroke="#6a9cff" stroke-width="2.6" stroke-linejoin="round" stroke-linecap="round"/><polyline points="571.1,316.8 575.8,346.1" fill="none" stroke="#f5a42a" stroke-width="2.6" stroke-linejoin="round" stroke-linecap="round"/><polyline points="575.8,346.1 580.5,326.2" fill="none" stroke="#6a9cff" stroke-width="2.6" stroke-linejoin="round" stroke-linecap="round"/><polyline points="580.5,326.2 584.0,337.9" fill="none" stroke="#f5a42a" stroke-width="2.6" stroke-linejoin="round" stroke-linecap="round"/><polyline points="584.0,337.9 587.6,312.1 589.9,290.9 593.4,278.0" fill="none" stroke="#6a9cff" stroke-width="2.6" stroke-linejoin="round" stroke-linecap="round"/><polyline points="593.4,278.0 594.6,290.9 609.9,290.9" fill="none" stroke="#f5a42a" stroke-width="2.6" stroke-linejoin="round" stroke-linecap="round"/><polyline points="609.9,290.9 612.2,275.7" fill="none" stroke="#6a9cff" stroke-width="2.6" stroke-linejoin="round" stroke-linecap="round"/><polyline points="612.2,275.7 614.6,287.4" fill="none" stroke="#f5a42a" stroke-width="2.6" stroke-linejoin="round" stroke-linecap="round"/><polyline points="614.6,287.4 617.5,252.1" fill="none" stroke="#6a9cff" stroke-width="2.6" stroke-linejoin="round" stroke-linecap="round"/><polyline points="617.5,252.1 618.4,233.6" fill="none" stroke="#f5a42a" stroke-width="2.6" stroke-linejoin="round" stroke-linecap="round"/><polyline points="618.4,233.6 620.9,229.4" fill="none" stroke="#6a9cff" stroke-width="2.6" stroke-linejoin="round" stroke-linecap="round"/><polyline points="620.9,229.4 622.6,214.4 667.8,214.4" fill="none" stroke="#f5a42a" stroke-width="2.6" stroke-linejoin="round" stroke-linecap="round"/><polyline points="667.8,214.4 670.3,206.0" fill="none" stroke="#6a9cff" stroke-width="2.6" stroke-linejoin="round" stroke-linecap="round"/><polyline points="670.3,206.0 672.9,225.3" fill="none" stroke="#f5a42a" stroke-width="2.6" stroke-linejoin="round" stroke-linecap="round"/><polyline points="672.9,225.3 674.5,219.4" fill="none" stroke="#6a9cff" stroke-width="2.6" stroke-linejoin="round" stroke-linecap="round"/><polyline points="674.5,219.4 676.2,225.3 682.1,225.3 682.9,227.8" fill="none" stroke="#f5a42a" stroke-width="2.6" stroke-linejoin="round" stroke-linecap="round"/><polyline points="682.9,227.8 685.4,209.3" fill="none" stroke="#6a9cff" stroke-width="2.6" stroke-linejoin="round" stroke-linecap="round"/><polyline points="685.4,209.3 687.1,221.1" fill="none" stroke="#f5a42a" stroke-width="2.6" stroke-linejoin="round" stroke-linecap="round"/><polyline points="687.1,221.1 689.6,213.5" fill="none" stroke="#6a9cff" stroke-width="2.6" stroke-linejoin="round" stroke-linecap="round"/><polyline points="689.6,213.5 692.1,223.6 693.8,232.0 698.0,262.1" fill="none" stroke="#f5a42a" stroke-width="2.6" stroke-linejoin="round" stroke-linecap="round"/><polyline points="698.0,262.1 700.5,247.9" fill="none" stroke="#6a9cff" stroke-width="2.6" stroke-linejoin="round" stroke-linecap="round"/><polyline points="700.5,247.9 702.2,258.8" fill="none" stroke="#f5a42a" stroke-width="2.6" stroke-linejoin="round" stroke-linecap="round"/><polyline points="702.2,258.8 705.5,240.3" fill="none" stroke="#6a9cff" stroke-width="2.6" stroke-linejoin="round" stroke-linecap="round"/><polyline points="705.5,240.3 707.2,252.1" fill="none" stroke="#f5a42a" stroke-width="2.6" stroke-linejoin="round" stroke-linecap="round"/><polyline points="707.2,252.1 708.9,246.2 710.2,239.5" fill="none" stroke="#6a9cff" stroke-width="2.6" stroke-linejoin="round" stroke-linecap="round"/><polyline points="710.2,239.5 713.9,267.2 718.1,294.8" fill="none" stroke="#f5a42a" stroke-width="2.6" stroke-linejoin="round" stroke-linecap="round"/><polyline points="718.1,294.8 720.6,282.2" fill="none" stroke="#6a9cff" stroke-width="2.6" stroke-linejoin="round" stroke-linecap="round"/><polyline points="720.6,282.2 724.8,297.3" fill="none" stroke="#f5a42a" stroke-width="2.6" stroke-linejoin="round" stroke-linecap="round"/><polyline points="724.8,297.3 727.3,278.9 730.7,273.0 734.0,257.9" fill="none" stroke="#6a9cff" stroke-width="2.6" stroke-linejoin="round" stroke-linecap="round"/><polyline points="734.0,257.9 737.4,278.9" fill="none" stroke="#f5a42a" stroke-width="2.6" stroke-linejoin="round" stroke-linecap="round"/><polyline points="737.4,278.9 739.9,270.5" fill="none" stroke="#6a9cff" stroke-width="2.6" stroke-linejoin="round" stroke-linecap="round"/><polyline points="739.9,270.5 741.6,299.0 744.1,302.4 781.0,302.4" fill="none" stroke="#f5a42a" stroke-width="2.6" stroke-linejoin="round" stroke-linecap="round"/><polyline points="781.0,302.4 784.3,273.9" fill="none" stroke="#6a9cff" stroke-width="2.6" stroke-linejoin="round" stroke-linecap="round"/><polyline points="784.3,273.9 786.0,243.7 787.7,253.8 788.5,225.3 799.4,224.4 801.1,228.6 802.8,213.5" fill="none" stroke="#f5a42a" stroke-width="2.6" stroke-linejoin="round" stroke-linecap="round"/><polyline points="802.8,213.5 805.3,198.4" fill="none" stroke="#6a9cff" stroke-width="2.6" stroke-linejoin="round" stroke-linecap="round"/><polyline points="805.3,198.4 806.5,237.0 808.6,213.5 811.1,235.3 815.3,267.2 817.8,287.3" fill="none" stroke="#f5a42a" stroke-width="2.6" stroke-linejoin="round" stroke-linecap="round"/><polyline points="817.8,287.3 820.4,268.0" fill="none" stroke="#6a9cff" stroke-width="2.6" stroke-linejoin="round" stroke-linecap="round"/><polyline points="820.4,268.0 822.9,289.8" fill="none" stroke="#f5a42a" stroke-width="2.6" stroke-linejoin="round" stroke-linecap="round"/><polyline points="822.9,289.8 825.4,277.2" fill="none" stroke="#6a9cff" stroke-width="2.6" stroke-linejoin="round" stroke-linecap="round"/><polyline points="825.4,277.2 827.9,297.3 830.4,302.4 832.1,302.4" fill="none" stroke="#f5a42a" stroke-width="2.6" stroke-linejoin="round" stroke-linecap="round"/><polyline points="832.1,302.4 834.6,286.4" fill="none" stroke="#6a9cff" stroke-width="2.6" stroke-linejoin="round" stroke-linecap="round"/><polyline points="834.6,286.4 837.1,296.5" fill="none" stroke="#f5a42a" stroke-width="2.6" stroke-linejoin="round" stroke-linecap="round"/><polyline points="837.1,296.5 840.5,280.6 843.8,268.0 846.3,246.2 848.9,239.5" fill="none" stroke="#6a9cff" stroke-width="2.6" stroke-linejoin="round" stroke-linecap="round"/><polyline points="848.9,239.5 852.2,257.9 918.4,257.1 920.0,265.5" fill="none" stroke="#f5a42a" stroke-width="2.6" stroke-linejoin="round" stroke-linecap="round"/><polyline points="920.0,265.5 922.5,254.3" fill="none" stroke="#6a9cff" stroke-width="2.6" stroke-linejoin="round" stroke-linecap="round"/><polyline points="922.5,254.3 924.5,245.6 927.0,256.8 929.4,266.2 1019.5,266.2 1022.4,268.0 1024.4,255.6 1026.9,264.3" fill="none" stroke="#f5a42a" stroke-width="2.6" stroke-linejoin="round" stroke-linecap="round"/><polyline points="1026.9,264.3 1029.4,256.8" fill="none" stroke="#6a9cff" stroke-width="2.6" stroke-linejoin="round" stroke-linecap="round"/><polyline points="1029.4,256.8 1033.1,269.2" fill="none" stroke="#f5a42a" stroke-width="2.6" stroke-linejoin="round" stroke-linecap="round"/><polyline points="1033.1,269.2 1036.9,266.2" fill="none" stroke="#6a9cff" stroke-width="2.6" stroke-linejoin="round" stroke-linecap="round"/><polyline points="1036.9,266.2 1038.8,304.0 1041.3,342.6 1045.6,343.8" fill="none" stroke="#f5a42a" stroke-width="2.6" stroke-linejoin="round" stroke-linecap="round"/><polyline points="1045.6,343.8 1048.0,330.1" fill="none" stroke="#6a9cff" stroke-width="2.6" stroke-linejoin="round" stroke-linecap="round"/><polyline points="1048.0,330.1 1050.5,356.3" fill="none" stroke="#f5a42a" stroke-width="2.6" stroke-linejoin="round" stroke-linecap="round"/><polyline points="1050.5,356.3 1053.0,352.5" fill="none" stroke="#6a9cff" stroke-width="2.6" stroke-linejoin="round" stroke-linecap="round"/><polyline points="1053.0,352.5 1054.3,391.0" fill="none" stroke="#f5a42a" stroke-width="2.6" stroke-linejoin="round" stroke-linecap="round"/><polyline points="1054.3,391.0 1056.7,369.9" fill="none" stroke="#6a9cff" stroke-width="2.6" stroke-linejoin="round" stroke-linecap="round"/><polyline points="1056.7,369.9 1058.0,378.6 1059.2,357.5" fill="none" stroke="#f5a42a" stroke-width="2.6" stroke-linejoin="round" stroke-linecap="round"/><polyline points="1059.2,357.5 1063.0,343.8 1065.5,314.0 1068.7,299.1" fill="none" stroke="#6a9cff" stroke-width="2.6" stroke-linejoin="round" stroke-linecap="round"/><polyline points="1068.7,299.1 1070.4,314.0" fill="none" stroke="#f5a42a" stroke-width="2.6" stroke-linejoin="round" stroke-linecap="round"/><polyline points="1070.4,314.0 1072.9,304.0 1076.6,290.4 1082.9,279.2" fill="none" stroke="#6a9cff" stroke-width="2.6" stroke-linejoin="round" stroke-linecap="round"/><polyline points="1082.9,279.2 1086.1,281.7 1089.1,301.6 1092.8,323.9 1096.5,331.4" fill="none" stroke="#f5a42a" stroke-width="2.6" stroke-linejoin="round" stroke-linecap="round"/><polyline points="1096.5,331.4 1100.3,309.0" fill="none" stroke="#6a9cff" stroke-width="2.6" stroke-linejoin="round" stroke-linecap="round"/><polyline points="1100.3,309.0 1104.0,314.0 1105.2,299.1" fill="none" stroke="#f5a42a" stroke-width="2.6" stroke-linejoin="round" stroke-linecap="round"/><polyline points="1105.2,299.1 1109.0,266.2 1128.9,266.2" fill="none" stroke="#6a9cff" stroke-width="2.6" stroke-linejoin="round" stroke-linecap="round"/><polyline points="1128.9,266.2 1131.3,271.7 1132.6,251.8" fill="none" stroke="#f5a42a" stroke-width="2.6" stroke-linejoin="round" stroke-linecap="round"/><polyline points="1132.6,251.8 1137.6,208.3" fill="none" stroke="#6a9cff" stroke-width="2.6" stroke-linejoin="round" stroke-linecap="round"/><polyline points="1137.6,208.3 1140.0,228.2" fill="none" stroke="#f5a42a" stroke-width="2.6" stroke-linejoin="round" stroke-linecap="round"/><polyline points="1140.0,228.2 1145.0,193.4" fill="none" stroke="#6a9cff" stroke-width="2.6" stroke-linejoin="round" stroke-linecap="round"/><polyline points="1145.0,193.4 1147.5,222.0" fill="none" stroke="#f5a42a" stroke-width="2.6" stroke-linejoin="round" stroke-linecap="round"/><polyline points="1147.5,222.0 1151.2,195.9" fill="none" stroke="#6a9cff" stroke-width="2.6" stroke-linejoin="round" stroke-linecap="round"/><polyline points="1151.2,195.9 1153.7,207.1 1158.7,209.6 1162.4,224.5" fill="none" stroke="#f5a42a" stroke-width="2.6" stroke-linejoin="round" stroke-linecap="round"/><polyline points="1162.4,224.5 1164.9,189.7 1203.4,189.7" fill="none" stroke="#6a9cff" stroke-width="2.6" stroke-linejoin="round" stroke-linecap="round"/><polyline points="1203.4,189.7 1204.7,193.4" fill="none" stroke="#f5a42a" stroke-width="2.6" stroke-linejoin="round" stroke-linecap="round"/><polyline points="1204.7,193.4 1208.4,163.6" fill="none" stroke="#6a9cff" stroke-width="2.6" stroke-linejoin="round" stroke-linecap="round"/><polyline points="1208.4,163.6 1212.1,171.0 1214.6,176.0" fill="none" stroke="#f5a42a" stroke-width="2.6" stroke-linejoin="round" stroke-linecap="round"/><polyline points="1214.6,176.0 1218.4,148.6" fill="none" stroke="#6a9cff" stroke-width="2.6" stroke-linejoin="round" stroke-linecap="round"/><polyline points="1218.4,148.6 1222.1,167.3" fill="none" stroke="#f5a42a" stroke-width="2.6" stroke-linejoin="round" stroke-linecap="round"/><polyline points="1222.1,167.3 1225.8,149.9 1229.6,146.2 1230.0,146.0" fill="none" stroke="#6a9cff" stroke-width="2.6" stroke-linejoin="round" stroke-linecap="round"/><polyline points="1230.0,146.0 1232.5,151.9" fill="none" stroke="#f5a42a" stroke-width="2.6" stroke-linejoin="round" stroke-linecap="round"/><polyline points="1232.5,151.9 1234.2,146.9" fill="none" stroke="#6a9cff" stroke-width="2.6" stroke-linejoin="round" stroke-linecap="round"/><polyline points="1234.2,146.9 1236.7,157.8" fill="none" stroke="#f5a42a" stroke-width="2.6" stroke-linejoin="round" stroke-linecap="round"/><polyline points="1236.7,157.8 1238.4,153.6" fill="none" stroke="#6a9cff" stroke-width="2.6" stroke-linejoin="round" stroke-linecap="round"/><polyline points="1238.4,153.6 1240.9,172.0" fill="none" stroke="#f5a42a" stroke-width="2.6" stroke-linejoin="round" stroke-linecap="round"/><polyline points="1240.9,172.0 1241.7,167.0" fill="none" stroke="#6a9cff" stroke-width="2.6" stroke-linejoin="round" stroke-linecap="round"/><polyline points="1241.7,167.0 1243.4,186.3 1245.9,188.0 1247.6,178.7 1249.3,183.8 1251.0,167.0 1254.3,167.0" fill="none" stroke="#f5a42a" stroke-width="2.6" stroke-linejoin="round" stroke-linecap="round"/><polyline points="1254.3,167.0 1257.7,166.2" fill="none" stroke="#6a9cff" stroke-width="2.6" stroke-linejoin="round" stroke-linecap="round"/><polyline points="1257.7,166.2 1259.3,177.0 1262.7,200.5 1264.4,188.8 1265.2,200.5 1266.9,178.7" fill="none" stroke="#f5a42a" stroke-width="2.6" stroke-linejoin="round" stroke-linecap="round"/><polyline points="1266.9,178.7 1269.4,173.7 1326.4,172.9" fill="none" stroke="#6a9cff" stroke-width="2.6" stroke-linejoin="round" stroke-linecap="round"/><polyline points="1326.4,172.9 1328.9,180.4 1330.6,162.8 1333.1,180.4 1334.8,186.3" fill="none" stroke="#f5a42a" stroke-width="2.6" stroke-linejoin="round" stroke-linecap="round"/><polyline points="1334.8,186.3 1337.3,180.4" fill="none" stroke="#6a9cff" stroke-width="2.6" stroke-linejoin="round" stroke-linecap="round"/><polyline points="1337.3,180.4 1339.0,194.6" fill="none" stroke="#f5a42a" stroke-width="2.6" stroke-linejoin="round" stroke-linecap="round"/><polyline points="1339.0,194.6 1342.3,162.0 1344.8,156.1" fill="none" stroke="#6a9cff" stroke-width="2.6" stroke-linejoin="round" stroke-linecap="round"/><polyline points="1344.8,156.1 1346.5,161.1 1365.8,161.1" fill="none" stroke="#f5a42a" stroke-width="2.6" stroke-linejoin="round" stroke-linecap="round"/><polyline points="1365.8,161.1 1366.6,157.8" fill="none" stroke="#6a9cff" stroke-width="2.6" stroke-linejoin="round" stroke-linecap="round"/><polyline points="1366.6,157.8 1369.1,177.0 1371.6,185.4" fill="none" stroke="#f5a42a" stroke-width="2.6" stroke-linejoin="round" stroke-linecap="round"/><polyline points="1371.6,185.4 1374.2,172.9" fill="none" stroke="#6a9cff" stroke-width="2.6" stroke-linejoin="round" stroke-linecap="round"/><polyline points="1374.2,172.9 1377.5,176.2" fill="none" stroke="#f5a42a" stroke-width="2.6" stroke-linejoin="round" stroke-linecap="round"/><polyline points="1377.5,176.2 1380.9,170.3" fill="none" stroke="#6a9cff" stroke-width="2.6" stroke-linejoin="round" stroke-linecap="round"/><polyline points="1380.9,170.3 1383.4,181.2" fill="none" stroke="#f5a42a" stroke-width="2.6" stroke-linejoin="round" stroke-linecap="round"/><polyline points="1383.4,181.2 1386.7,166.2" fill="none" stroke="#6a9cff" stroke-width="2.6" stroke-linejoin="round" stroke-linecap="round"/><polyline points="1386.7,166.2 1389.2,175.4 1393.4,182.1 1397.6,192.1 1401.0,197.2" fill="none" stroke="#f5a42a" stroke-width="2.6" stroke-linejoin="round" stroke-linecap="round"/><polyline points="1401.0,197.2 1405.2,196.3" fill="none" stroke="#6a9cff" stroke-width="2.6" stroke-linejoin="round" stroke-linecap="round"/><polyline points="1405.2,196.3 1407.7,212.2" fill="none" stroke="#f5a42a" stroke-width="2.6" stroke-linejoin="round" stroke-linecap="round"/><polyline points="1407.7,212.2 1410.2,202.2" fill="none" stroke="#6a9cff" stroke-width="2.6" stroke-linejoin="round" stroke-linecap="round"/><polyline points="1410.2,202.2 1413.5,207.2 1424.4,207.2 1427.0,211.4" fill="none" stroke="#f5a42a" stroke-width="2.6" stroke-linejoin="round" stroke-linecap="round"/><polyline points="1427.0,211.4 1428.6,206.4" fill="none" stroke="#6a9cff" stroke-width="2.6" stroke-linejoin="round" stroke-linecap="round"/><polyline points="1428.6,206.4 1431.1,210.6 1432.8,198.0 1435.3,210.6 1438.7,211.4 1441.2,246.6" fill="none" stroke="#f5a42a" stroke-width="2.6" stroke-linejoin="round" stroke-linecap="round"/><polyline points="1441.2,246.6 1443.7,238.2" fill="none" stroke="#6a9cff" stroke-width="2.6" stroke-linejoin="round" stroke-linecap="round"/><polyline points="1443.7,238.2 1446.2,244.1 1447.9,230.7" fill="none" stroke="#f5a42a" stroke-width="2.6" stroke-linejoin="round" stroke-linecap="round"/><polyline points="1447.9,230.7 1450.4,220.6" fill="none" stroke="#6a9cff" stroke-width="2.6" stroke-linejoin="round" stroke-linecap="round"/><polyline points="1450.4,220.6 1452.1,225.7" fill="none" stroke="#f5a42a" stroke-width="2.6" stroke-linejoin="round" stroke-linecap="round"/><polyline points="1452.1,225.7 1454.6,203.9" fill="none" stroke="#6a9cff" stroke-width="2.6" stroke-linejoin="round" stroke-linecap="round"/><polyline points="1454.6,203.9 1458.0,225.7 1461.3,230.7 1463.0,234.0 1464.7,225.7" fill="none" stroke="#f5a42a" stroke-width="2.6" stroke-linejoin="round" stroke-linecap="round"/><polyline points="1464.7,225.7 1469.7,208.9" fill="none" stroke="#6a9cff" stroke-width="2.6" stroke-linejoin="round" stroke-linecap="round"/><polyline points="1469.7,208.9 1472.2,219.8" fill="none" stroke="#f5a42a" stroke-width="2.6" stroke-linejoin="round" stroke-linecap="round"/><polyline points="1472.2,219.8 1474.7,213.1" fill="none" stroke="#6a9cff" stroke-width="2.6" stroke-linejoin="round" stroke-linecap="round"/><polyline points="1474.7,213.1 1478.1,237.4 1480.6,239.9 1499.0,239.9" fill="none" stroke="#f5a42a" stroke-width="2.6" stroke-linejoin="round" stroke-linecap="round"/><polyline points="1499.0,239.9 1501.5,234.9 1505.7,220.6 1509.9,208.9 1513.3,208.9 1516.6,192.1 1519.6,183.8" fill="none" stroke="#6a9cff" stroke-width="2.6" stroke-linejoin="round" stroke-linecap="round"/><polyline points="1519.6,183.8 1522.5,198.8 1527.5,220.6 1531.7,229.8" fill="none" stroke="#f5a42a" stroke-width="2.6" stroke-linejoin="round" stroke-linecap="round"/><polyline points="1531.7,229.8 1534.2,227.3" fill="none" stroke="#6a9cff" stroke-width="2.6" stroke-linejoin="round" stroke-linecap="round"/><polyline points="1534.2,227.3 1538.4,234.0" fill="none" stroke="#f5a42a" stroke-width="2.6" stroke-linejoin="round" stroke-linecap="round"/><polyline points="1538.4,234.0 1542.1,214.7" fill="none" stroke="#6a9cff" stroke-width="2.6" stroke-linejoin="round" stroke-linecap="round"/><polyline points="1542.1,214.7 1544.1,220.2" fill="none" stroke="#f5a42a" stroke-width="2.6" stroke-linejoin="round" stroke-linecap="round"/><polyline points="1544.1,220.2 1546.2,217.4" fill="none" stroke="#6a9cff" stroke-width="2.6" stroke-linejoin="round" stroke-linecap="round"/><polyline points="1546.2,217.4 1547.6,225.7 1571.8,225.7" fill="none" stroke="#f5a42a" stroke-width="2.6" stroke-linejoin="round" stroke-linecap="round"/><polyline points="1571.8,225.7 1575.2,220.9" fill="none" stroke="#6a9cff" stroke-width="2.6" stroke-linejoin="round" stroke-linecap="round"/><polyline points="1575.2,220.9 1577.3,232.6 1579.4,236.8 1580.8,225.7" fill="none" stroke="#f5a42a" stroke-width="2.6" stroke-linejoin="round" stroke-linecap="round"/><polyline points="1580.8,225.7 1583.5,218.1" fill="none" stroke="#6a9cff" stroke-width="2.6" stroke-linejoin="round" stroke-linecap="round"/><polyline points="1583.5,218.1 1585.6,228.5" fill="none" stroke="#f5a42a" stroke-width="2.6" stroke-linejoin="round" stroke-linecap="round"/><polyline points="1585.6,228.5 1587.7,221.6 1589.7,220.2" fill="none" stroke="#6a9cff" stroke-width="2.6" stroke-linejoin="round" stroke-linecap="round"/><polyline points="1589.7,220.2 1592.5,231.3" fill="none" stroke="#f5a42a" stroke-width="2.6" stroke-linejoin="round" stroke-linecap="round"/><polyline points="1592.5,231.3 1596.6,214.7 1601.5,199.5" fill="none" stroke="#6a9cff" stroke-width="2.6" stroke-linejoin="round" stroke-linecap="round"/><polyline points="1601.5,199.5 1603.6,189.8 1604.9,206.4" fill="none" stroke="#f5a42a" stroke-width="2.6" stroke-linejoin="round" stroke-linecap="round"/><polyline points="1604.9,206.4 1607.7,189.8" fill="none" stroke="#6a9cff" stroke-width="2.6" stroke-linejoin="round" stroke-linecap="round"/><polyline points="1607.7,189.8 1609.1,202.2" fill="none" stroke="#f5a42a" stroke-width="2.6" stroke-linejoin="round" stroke-linecap="round"/><polyline points="1609.1,202.2 1611.8,174.6" fill="none" stroke="#6a9cff" stroke-width="2.6" stroke-linejoin="round" stroke-linecap="round"/><polyline points="1611.8,174.6 1613.9,164.9" fill="none" stroke="#f5a42a" stroke-width="2.6" stroke-linejoin="round" stroke-linecap="round"/><polyline points="1613.9,164.9 1615.3,158.0 1618.1,151.8" fill="none" stroke="#6a9cff" stroke-width="2.6" stroke-linejoin="round" stroke-linecap="round"/><polyline points="1618.1,151.8 1620.1,154.6 1635.3,154.6 1636.7,158.0 1638.8,145.6 1640.9,119.3 1642.9,131.1 1645.0,118.0 1647.1,130.4 1649.8,141.4 1651.9,131.1" fill="none" stroke="#f5a42a" stroke-width="2.6" stroke-linejoin="round" stroke-linecap="round"/><polyline points="1651.9,131.1 1654.7,119.3" fill="none" stroke="#6a9cff" stroke-width="2.6" stroke-linejoin="round" stroke-linecap="round"/><polyline points="1654.7,119.3 1656.1,127.6 1658.8,141.4" fill="none" stroke="#f5a42a" stroke-width="2.6" stroke-linejoin="round" stroke-linecap="round"/><polyline points="1658.8,141.4 1661.6,122.1" fill="none" stroke="#6a9cff" stroke-width="2.6" stroke-linejoin="round" stroke-linecap="round"/><polyline points="1661.6,122.1 1664.3,138.7 1666.4,122.1" fill="none" stroke="#f5a42a" stroke-width="2.6" stroke-linejoin="round" stroke-linecap="round"/><polyline points="1666.4,122.1 1669.2,120.7" fill="none" stroke="#6a9cff" stroke-width="2.6" stroke-linejoin="round" stroke-linecap="round"/><polyline points="1669.2,120.7 1671.3,128.3 1674.0,129.0 1678.9,153.9" fill="none" stroke="#f5a42a" stroke-width="2.6" stroke-linejoin="round" stroke-linecap="round"/><polyline points="1678.9,153.9 1680.9,147.0" fill="none" stroke="#6a9cff" stroke-width="2.6" stroke-linejoin="round" stroke-linecap="round"/><polyline points="1680.9,147.0 1683.0,152.5" fill="none" stroke="#f5a42a" stroke-width="2.6" stroke-linejoin="round" stroke-linecap="round"/><polyline points="1683.0,152.5 1685.1,147.0 1687.1,141.4" fill="none" stroke="#6a9cff" stroke-width="2.6" stroke-linejoin="round" stroke-linecap="round"/><polyline points="1687.1,141.4 1700.3,143.5" fill="none" stroke="#f5a42a" stroke-width="2.6" stroke-linejoin="round" stroke-linecap="round"/><polyline points="1700.3,143.5 1703.7,138.0" fill="none" stroke="#6a9cff" stroke-width="2.6" stroke-linejoin="round" stroke-linecap="round"/><polyline points="1703.7,138.0 1705.8,141.4 1707.9,152.5 1712.7,166.3 1715.5,169.1" fill="none" stroke="#f5a42a" stroke-width="2.6" stroke-linejoin="round" stroke-linecap="round"/><polyline points="1715.5,169.1 1718.2,162.2" fill="none" stroke="#6a9cff" stroke-width="2.6" stroke-linejoin="round" stroke-linecap="round"/><polyline points="1718.2,162.2 1721.0,166.3 1723.1,158.0 1725.1,163.6" fill="none" stroke="#f5a42a" stroke-width="2.6" stroke-linejoin="round" stroke-linecap="round"/><polyline points="1725.1,163.6 1727.9,144.2" fill="none" stroke="#6a9cff" stroke-width="2.6" stroke-linejoin="round" stroke-linecap="round"/><polyline points="1727.9,144.2 1730.7,149.7 1733.4,152.5" fill="none" stroke="#f5a42a" stroke-width="2.6" stroke-linejoin="round" stroke-linecap="round"/><polyline points="1733.4,152.5 1736.2,145.6 1738.9,141.4" fill="none" stroke="#6a9cff" stroke-width="2.6" stroke-linejoin="round" stroke-linecap="round"/><polyline points="1738.9,141.4 1741.0,147.7 1743.8,151.1" fill="none" stroke="#f5a42a" stroke-width="2.6" stroke-linejoin="round" stroke-linecap="round"/><polyline points="1743.8,151.1 1746.5,134.5" fill="none" stroke="#6a9cff" stroke-width="2.6" stroke-linejoin="round" stroke-linecap="round"/><polyline points="1746.5,134.5 1750.0,151.1" fill="none" stroke="#f5a42a" stroke-width="2.6" stroke-linejoin="round" stroke-linecap="round"/><polyline points="1750.0,151.1 1753.5,122.8" fill="none" stroke="#6a9cff" stroke-width="2.6" stroke-linejoin="round" stroke-linecap="round"/><polyline points="1753.5,122.8 1755.0,124.0" fill="none" stroke="#f5a42a" stroke-width="2.6" stroke-linejoin="round" stroke-linecap="round"/><line x1="5" y1="431.5" x2="1809" y2="431.5" stroke="#3838f0" stroke-width="2"/></g><line x1="834.5" y1="100" x2="834.5" y2="1041" stroke="#c84646" stroke-width="1"/><line x1="1809.5" y1="99" x2="1809.5" y2="456" stroke="#6a6a6a" stroke-width="1.2"/><line x1="5" y1="455.5" x2="1809" y2="455.5" stroke="#6a6a6a" stroke-width="1.2"/><rect x="5" y="100" width="2" height="356" fill="#cfcfcf"/><rect x="5" y="100" width="428.5" height="34" fill="url(#gLab)" stroke="#2a2a2a" stroke-width="1"/><text x="8.5" y="126" font-size="24.8" fill="#f2ecd8" font-weight="normal" text-anchor="start" >Equity curve: Divergence Rsi</text><path d="M346.2,114.3 L345.0,104.0 L354.0,104.0 L353.0,110.5 L361.0,110.5 L361.0,118.0 L349.8,117.7 L337.8,130.7 L334.2,127.3 Z" fill="#000" stroke="#ececec" stroke-width="2.4" stroke-linejoin="round"/><rect x="367.5" y="103" width="29" height="28" rx="4.5" fill="#000" stroke="#e8e8e8" stroke-width="2.6"/><path d="M368.5,107.5 Q368.5,104 372.0,104 L392.0,104 Q395.5,104 395.5,107.5 L395.5,112 L368.5,112 Z" fill="#e4e4e4"/><circle cx="415.5" cy="117.5" r="15" fill="url(#gCircle)"/><path d="M410.0,112.0 L421.0,123.0 M421.0,112.0 L410.0,123.0" stroke="#000" stroke-width="4" stroke-linecap="round"/><line x1="1809" y1="127.5" x2="1815" y2="127.5" stroke="#aaa" stroke-width="1"/><rect x="1814.5" y="112" width="79" height="30.5" fill="#0c0c0c" stroke="#444" stroke-width="1"/><text x="1891" y="136" font-size="24.8" fill="#6a9cff" font-weight="normal" text-anchor="end" >11,973</text><line x1="1809" y1="198" x2="1815" y2="198" stroke="#ddd" stroke-width="1.5"/><rect x="1814.5" y="182.5" width="79" height="30" fill="#ffff10"/><text x="1891" y="206" font-size="24.8" fill="#000" font-weight="normal" text-anchor="end" >11,520</text><line x1="1809" y1="277.5" x2="1815" y2="277.5" stroke="#888" stroke-width="1"/><line x1="1809" y1="354" x2="1815" y2="354" stroke="#888" stroke-width="1"/><text x="1891" y="286" font-size="24.8" fill="#e0e0e0" font-weight="normal" text-anchor="end" >11,000</text><text x="1891" y="363" font-size="24.8" fill="#e0e0e0" font-weight="normal" text-anchor="end" >10,500</text><rect x="5" y="458" width="1804" height="226" fill="url(#gPo)"/><line x1="63.5" y1="458" x2="63.5" y2="684" stroke="#333333" stroke-width="1"/><line x1="123.5" y1="458" x2="123.5" y2="684" stroke="#333333" stroke-width="1"/><line x1="127.5" y1="458" x2="127.5" y2="684" stroke="#333333" stroke-width="1"/><line x1="212.5" y1="458" x2="212.5" y2="684" stroke="#333333" stroke-width="1"/><line x1="286.5" y1="458" x2="286.5" y2="684" stroke="#333333" stroke-width="1"/><line x1="397.5" y1="458" x2="397.5" y2="684" stroke="#333333" stroke-width="1"/><line x1="496.5" y1="458" x2="496.5" y2="684" stroke="#333333" stroke-width="1"/><line x1="593.5" y1="458" x2="593.5" y2="684" stroke="#333333" stroke-width="1"/><line x1="676.5" y1="458" x2="676.5" y2="684" stroke="#333333" stroke-width="1"/><line x1="752.5" y1="458" x2="752.5" y2="684" stroke="#333333" stroke-width="1"/><line x1="855.5" y1="458" x2="855.5" y2="684" stroke="#333333" stroke-width="1"/><line x1="933.5" y1="458" x2="933.5" y2="684" stroke="#333333" stroke-width="1"/><line x1="1010.5" y1="458" x2="1010.5" y2="684" stroke="#333333" stroke-width="1"/><line x1="1117.5" y1="458" x2="1117.5" y2="684" stroke="#333333" stroke-width="1"/><line x1="1202.5" y1="458" x2="1202.5" y2="684" stroke="#333333" stroke-width="1"/><line x1="1273.5" y1="458" x2="1273.5" y2="684" stroke="#333333" stroke-width="1"/><line x1="1348.5" y1="458" x2="1348.5" y2="684" stroke="#333333" stroke-width="1"/><line x1="1412.5" y1="458" x2="1412.5" y2="684" stroke="#333333" stroke-width="1"/><line x1="1483.5" y1="458" x2="1483.5" y2="684" stroke="#333333" stroke-width="1"/><line x1="1551.5" y1="458" x2="1551.5" y2="684" stroke="#333333" stroke-width="1"/><line x1="1621.5" y1="458" x2="1621.5" y2="684" stroke="#333333" stroke-width="1"/><line x1="1692.5" y1="458" x2="1692.5" y2="684" stroke="#333333" stroke-width="1"/><line x1="1755.5" y1="458" x2="1755.5" y2="684" stroke="#333333" stroke-width="1"/><line x1="1758.5" y1="458" x2="1758.5" y2="684" stroke="#333333" stroke-width="1"/><line x1="5" y1="469.5" x2="1809" y2="469.5" stroke="#333333" stroke-width="1"/><line x1="5" y1="520.5" x2="1809" y2="520.5" stroke="#333333" stroke-width="1"/><line x1="5" y1="622.5" x2="1809" y2="622.5" stroke="#333333" stroke-width="1"/><rect x="35.2" y="469.5" width="25.599999999999994" height="101.5" fill="#6896ff"/><rect x="166" y="469.5" width="44.19999999999999" height="101.5" fill="#6896ff"/><rect x="212.7" y="469.5" width="70.30000000000001" height="101.5" fill="#6896ff"/><rect x="318.8" y="469.5" width="69.39999999999998" height="101.5" fill="#6896ff"/><rect x="389.7" y="469.5" width="2.0" height="101.5" fill="#6896ff"/><rect x="510.4" y="469.5" width="79.0" height="101.5" fill="#6896ff"/><rect x="591" y="469.5" width="2.3999999999999773" height="101.5" fill="#6896ff"/><rect x="611" y="469.5" width="11" height="101.5" fill="#6896ff"/><rect x="782" y="469.5" width="6.5" height="101.5" fill="#6896ff"/><rect x="1129.3" y="469.5" width="36.700000000000045" height="101.5" fill="#6896ff"/><rect x="1202.7" y="469.5" width="67.29999999999995" height="101.5" fill="#6896ff"/><rect x="1327.8" y="469.5" width="17.100000000000136" height="101.5" fill="#6896ff"/><rect x="80.5" y="571" width="43.2" height="102.5" fill="#ffa526"/><rect x="295.7" y="571" width="22.100000000000023" height="102.5" fill="#ffa526"/><rect x="397.8" y="571" width="95.0" height="102.5" fill="#ffa526"/><rect x="668.9" y="571" width="5.5" height="102.5" fill="#ffa526"/><rect x="683" y="571" width="60.799999999999955" height="102.5" fill="#ffa526"/><rect x="800" y="571" width="28.799999999999955" height="102.5" fill="#ffa526"/><rect x="833.3" y="571" width="19.700000000000045" height="102.5" fill="#ffa526"/><rect x="918.3" y="571" width="11.5" height="102.5" fill="#ffa526"/><rect x="1019.8" y="571" width="19.100000000000136" height="102.5" fill="#ffa526"/><rect x="1040.4" y="571" width="1.0" height="102.5" fill="#ffa526"/><rect x="1047" y="571" width="12.5" height="102.5" fill="#ffa526"/><rect x="1060.5" y="571" width="47.200000000000045" height="102.5" fill="#ffa526"/><rect x="1366" y="571" width="46.700000000000045" height="102.5" fill="#ffa526"/><rect x="1424.7" y="571" width="56.299999999999955" height="102.5" fill="#ffa526"/><rect x="1499" y="571" width="49.799999999999955" height="102.5" fill="#ffa526"/><rect x="1573" y="571" width="45.59999999999991" height="102.5" fill="#ffa526"/><rect x="1635.2" y="571" width="52.299999999999955" height="102.5" fill="#ffa526"/><rect x="1701" y="571" width="53.799999999999955" height="102.5" fill="#ffa526"/><line x1="5" y1="571" x2="1809" y2="571" stroke="#3232e0" stroke-width="1.5"/><line x1="834.5" y1="458" x2="834.5" y2="684" stroke="#c84646" stroke-width="1"/><line x1="1809.5" y1="458" x2="1809.5" y2="684" stroke="#6a6a6a" stroke-width="1.2"/><line x1="5" y1="458.5" x2="1809" y2="458.5" stroke="#6a6a6a" stroke-width="1.2"/><line x1="5" y1="683.5" x2="1809" y2="683.5" stroke="#6a6a6a" stroke-width="1.2"/><rect x="5" y="458" width="520.5" height="34.5" fill="url(#gLab)" stroke="#2a2a2a" stroke-width="1"/><text x="8.5" y="484" font-size="25.1" fill="#f2ecd8" font-weight="normal" text-anchor="start" >ProBacktest - Positions: Divergence Rsi</text><rect x="459" y="461" width="29" height="28" rx="4.5" fill="#000" stroke="#e8e8e8" stroke-width="2.6"/><path d="M460,465.5 Q460,462 463.5,462 L483.5,462 Q487,462 487,465.5 L487,470 L460,470 Z" fill="#e4e4e4"/><circle cx="508" cy="475.5" r="15" fill="url(#gCircle)"/><path d="M502.5,470.0 L513.5,481.0 M513.5,470.0 L502.5,481.0" stroke="#000" stroke-width="4" stroke-linecap="round"/><line x1="1809" y1="469.5" x2="1815" y2="469.5" stroke="#888" stroke-width="1"/><text x="1816" y="480.5" font-size="24.5" fill="#e8e8e8" font-weight="normal" text-anchor="start" >1</text><line x1="1809" y1="520.5" x2="1815" y2="520.5" stroke="#888" stroke-width="1"/><text x="1816" y="529.0" font-size="24.5" fill="#e8e8e8" font-weight="normal" text-anchor="start" >0.5</text><line x1="1809" y1="622" x2="1815" y2="622" stroke="#888" stroke-width="1"/><text x="1816" y="630.5" font-size="24.5" fill="#e8e8e8" font-weight="normal" text-anchor="start" >-0.5</text><rect x="1814" y="557" width="18" height="30" fill="url(#gDark)" stroke="#555" stroke-width="1"/><text x="1816" y="580" font-size="24" fill="#6a9cff" font-weight="normal" text-anchor="start" >0</text><rect x="5" y="686" width="1804" height="355" fill="#0b0b0b"/><line x1="63.5" y1="686" x2="63.5" y2="1041" stroke="#2a2a2a" stroke-width="1"/><line x1="123.5" y1="686" x2="123.5" y2="1041" stroke="#2a2a2a" stroke-width="1"/><line x1="127.5" y1="686" x2="127.5" y2="1041" stroke="#2a2a2a" stroke-width="1"/><line x1="212.5" y1="686" x2="212.5" y2="1041" stroke="#2a2a2a" stroke-width="1"/><line x1="286.5" y1="686" x2="286.5" y2="1041" stroke="#2a2a2a" stroke-width="1"/><line x1="397.5" y1="686" x2="397.5" y2="1041" stroke="#2a2a2a" stroke-width="1"/><line x1="496.5" y1="686" x2="496.5" y2="1041" stroke="#2a2a2a" stroke-width="1"/><line x1="593.5" y1="686" x2="593.5" y2="1041" stroke="#2a2a2a" stroke-width="1"/><line x1="676.5" y1="686" x2="676.5" y2="1041" stroke="#2a2a2a" stroke-width="1"/><line x1="752.5" y1="686" x2="752.5" y2="1041" stroke="#2a2a2a" stroke-width="1"/><line x1="855.5" y1="686" x2="855.5" y2="1041" stroke="#2a2a2a" stroke-width="1"/><line x1="933.5" y1="686" x2="933.5" y2="1041" stroke="#2a2a2a" stroke-width="1"/><line x1="1010.5" y1="686" x2="1010.5" y2="1041" stroke="#2a2a2a" stroke-width="1"/><line x1="1117.5" y1="686" x2="1117.5" y2="1041" stroke="#2a2a2a" stroke-width="1"/><line x1="1202.5" y1="686" x2="1202.5" y2="1041" stroke="#2a2a2a" stroke-width="1"/><line x1="1273.5" y1="686" x2="1273.5" y2="1041" stroke="#2a2a2a" stroke-width="1"/><line x1="1348.5" y1="686" x2="1348.5" y2="1041" stroke="#2a2a2a" stroke-width="1"/><line x1="1412.5" y1="686" x2="1412.5" y2="1041" stroke="#2a2a2a" stroke-width="1"/><line x1="1483.5" y1="686" x2="1483.5" y2="1041" stroke="#2a2a2a" stroke-width="1"/><line x1="1551.5" y1="686" x2="1551.5" y2="1041" stroke="#2a2a2a" stroke-width="1"/><line x1="1621.5" y1="686" x2="1621.5" y2="1041" stroke="#2a2a2a" stroke-width="1"/><line x1="1692.5" y1="686" x2="1692.5" y2="1041" stroke="#2a2a2a" stroke-width="1"/><line x1="1755.5" y1="686" x2="1755.5" y2="1041" stroke="#2a2a2a" stroke-width="1"/><line x1="1758.5" y1="686" x2="1758.5" y2="1041" stroke="#2a2a2a" stroke-width="1"/><line x1="5" y1="801.5" x2="1809" y2="801.5" stroke="#2a2a2a" stroke-width="1"/><line x1="5" y1="876.5" x2="1809" y2="876.5" stroke="#2a2a2a" stroke-width="1"/><line x1="5" y1="953.5" x2="1809" y2="953.5" stroke="#2a2a2a" stroke-width="1"/><clipPath id="cSer"><rect x="5" y="720" width="1804" height="321"/></clipPath><g clip-path="url(#cPr)"><g clip-path="url(#cSer)"><polyline points="6.4,872.6 7.8,869.6 9.2,867.1 10.6,868.8 12.0,869.8 13.3,868.7 14.7,862.5 16.5,860.9 18.4,859.7 20.2,860.2 22.1,860.6 23.6,859.3 25.2,855.0 26.7,855.1 28.5,857.0 30.4,858.8 32.2,866.0 34.1,871.7 35.9,873.0 37.7,870.8 39.1,861.9 40.5,857.9 42.4,859.0 44.2,862.5 45.7,857.3 47.3,858.8 48.8,854.2 50.3,852.6 51.9,845.9 53.4,845.9 54.8,849.2 56.1,849.6 57.5,848.2 58.9,847.7 60.4,847.2 62.0,843.2 63.5,844.1 64.9,843.9 66.3,849.6 68.2,849.8 70.0,849.6 71.8,845.6 73.7,846.8 75.5,848.2 77.3,853.3 79.2,846.2 81.0,842.2 82.4,838.9 83.8,841.1 85.1,840.5 86.5,840.4 87.9,843.1 89.3,841.9 90.7,843.3 92.1,843.1 93.5,844.7 94.8,847.3 96.2,847.7 97.6,849.6 99.1,849.2 100.6,854.4 102.0,855.3 103.5,855.3 105.0,854.2 106.5,858.5 108.1,859.2 109.6,863.4 111.1,859.3 112.7,857.2 114.2,856.0 115.6,852.8 116.9,856.4 118.3,853.6 119.7,855.6 121.0,852.2 122.4,852.3 123.9,858.1 125.5,860.6 127.0,861.6 128.4,859.5 129.8,861.7 131.2,866.8 132.6,865.2 134.1,866.9 135.6,871.8 137.0,870.1 138.5,870.0 140.0,874.4 141.8,880.0 143.2,879.4 144.6,878.9 145.9,874.4 147.3,874.4 148.7,871.9 150.1,873.4 151.4,877.2 152.8,874.4 154.2,877.3 155.6,874.9 156.9,877.1 158.3,880.0 160.2,880.4 162.0,885.5 163.5,886.5 165.1,894.6 166.6,896.5 168.0,896.2 169.4,900.1 170.8,901.1 172.2,903.0 173.8,901.8 175.4,905.7 177.0,902.8 178.6,905.7 180.0,908.9 181.3,908.0 182.7,912.2 184.1,915.0 185.5,915.3 186.8,917.7 188.2,924.0 189.6,923.2 191.4,921.8 193.3,916.8 194.7,913.3 196.1,914.5 197.5,908.2 198.9,907.6 200.4,906.6 201.8,909.0 203.3,907.3 204.7,903.7 206.2,905.7 207.6,906.8 208.9,900.3 210.3,898.8 211.7,898.4 213.1,899.6 214.5,896.4 215.9,895.8 217.3,896.5 218.9,892.8 220.5,891.8 222.1,893.6 223.7,892.0 225.1,892.5 226.4,896.7 227.8,897.4 229.2,900.2 230.5,898.5 231.8,900.0 233.1,895.7 234.4,894.8 235.7,892.9 237.6,898.7 239.4,900.2 240.9,899.0 242.3,899.6 243.8,904.9 245.2,905.1 246.7,903.9 248.1,903.8 249.5,904.8 250.9,909.5 252.3,909.4 253.7,912.3 255.1,908.1 256.4,912.9 257.8,910.4 259.3,911.6 260.7,908.8 262.2,906.6 263.6,903.5 265.1,904.8 266.5,903.2 267.9,909.9 269.3,906.7 270.7,909.4 272.1,912.3 273.4,911.2 274.8,916.2 276.2,915.9 277.6,918.1 278.9,917.9 280.3,918.8 281.7,922.3 283.1,925.0 284.4,922.5 285.8,924.8 287.2,927.8 288.5,928.2 289.8,929.9 291.1,928.5 292.5,926.5 293.8,930.3 295.1,926.0 296.4,927.8 298.2,925.8 300.1,929.7 302.0,938.4 303.8,949.9 305.4,949.3 306.9,946.8 308.4,947.3 310.0,949.0 311.9,952.4 313.7,957.3 315.2,960.2 316.8,960.0 318.3,964.7 319.6,960.2 321.0,957.3 322.6,957.2 324.1,955.3 325.7,950.0 327.2,955.2 328.8,959.7 330.3,962.8 332.1,956.9 333.9,950.0 335.8,957.9 337.6,970.2 339.1,971.4 340.7,975.3 342.2,982.2 343.5,983.7 344.8,981.6 346.1,982.2 347.4,975.6 348.7,977.6 350.3,976.1 351.9,972.8 353.5,972.0 355.1,968.3 356.6,970.3 358.2,977.5 359.7,977.6 361.1,977.4 362.4,982.5 363.8,985.9 365.2,986.8 366.7,988.1 368.2,986.0 369.6,984.7 371.1,984.1 372.6,981.2 374.1,983.7 375.6,980.3 377.0,982.3 378.5,983.6 380.0,981.2 381.4,982.1 382.8,978.0 384.1,978.8 385.5,975.7 386.9,981.6 388.2,983.5 389.6,987.5 391.0,990.4 392.4,987.9 393.8,987.2 395.1,985.6 396.5,983.1 398.4,974.1 400.2,970.2 401.6,971.0 402.9,973.2 404.3,972.5 405.7,970.2 407.1,969.0 408.5,964.5 409.9,964.0 411.3,960.1 412.7,965.2 414.1,968.9 415.4,975.9 416.8,978.5 418.3,976.2 419.8,980.4 421.2,976.2 422.7,979.8 424.2,979.4 425.6,982.5 426.9,984.2 428.3,990.3 429.7,992.3 431.0,993.9 432.3,996.1 433.6,999.5 435.0,997.1 436.3,997.2 437.6,1000.5 438.9,1003.3 440.3,1001.1 441.6,995.1 443.0,991.6 444.4,990.4 445.9,991.0 447.4,987.7 448.8,984.5 450.3,985.4 451.8,981.2 453.3,980.9 454.7,983.7 456.2,981.7 457.6,983.8 459.1,985.0 460.6,986.1 462.1,986.0 463.5,985.0 465.0,981.3 466.5,981.2 467.9,979.4 469.2,975.5 470.6,972.1 472.0,972.0 473.9,965.5 475.7,959.1 477.2,963.0 478.7,964.9 480.1,965.9 481.6,969.2 483.1,968.3 484.7,967.2 486.3,966.8 487.9,968.8 489.5,969.3 491.4,992.3 492.9,989.7 494.5,988.1 496.0,988.6 497.4,988.8 498.8,990.8 500.1,990.7 501.5,991.4 503.0,990.6 504.6,994.0 506.1,992.3 507.6,1000.7 509.2,1003.1 510.7,1008.9 512.2,1006.0 513.7,1005.3 515.1,1010.0 516.6,1004.6 518.1,1007.0 519.4,1005.9 520.7,1002.7 522.0,998.7 523.4,999.3 524.7,992.3 526.0,990.6 527.3,990.4 528.6,989.6 529.9,986.5 531.2,990.8 532.6,986.8 533.9,985.7 535.2,984.6 536.5,986.8 538.0,987.2 539.4,985.8 540.9,986.5 542.3,986.3 543.8,985.0 545.3,989.0 546.8,992.2 548.2,992.7 549.7,992.0 551.2,996.0 552.6,997.2 554.0,996.8 555.3,997.2 556.7,1001.5 558.2,1002.2 559.7,1004.6 561.1,1002.3 562.6,1003.7 564.1,1006.0 565.4,1004.7 566.7,1006.4 568.0,1005.0 569.4,1005.1 570.7,1005.6 572.0,1003.0 573.3,1003.3 574.8,1004.7 576.3,1005.0 577.7,999.7 579.2,1004.5 580.7,1001.5 582.2,1002.8 583.6,999.3 585.1,1001.2 586.5,1002.3 588.0,1001.5 589.9,995.7 591.7,984.9 593.1,987.4 594.5,991.8 595.8,996.9 597.2,997.8 598.6,996.8 600.0,995.0 601.4,989.3 602.8,986.8 604.1,987.3 605.4,984.2 606.7,986.9 608.1,987.1 609.4,985.6 610.7,985.7 612.0,984.0 613.4,981.6 614.8,985.0 616.1,984.8 617.5,981.2 618.9,977.2 620.2,967.6 621.6,962.2 623.0,953.6 624.5,954.4 626.1,959.8 627.7,961.3 629.2,961.0 630.6,960.5 632.0,959.4 633.3,962.0 634.7,962.8 636.1,967.7 637.5,972.0 639.1,967.9 640.7,960.4 642.3,951.9 643.9,949.0 645.2,953.3 646.5,951.2 647.8,958.0 649.1,956.6 650.4,961.0 652.2,958.2 654.1,957.3 655.6,963.9 657.2,964.9 658.7,972.0 660.1,969.9 661.5,972.1 662.8,973.3 664.2,972.0 666.0,968.5 667.9,961.0 669.4,961.0 670.8,961.5 672.3,957.7 673.7,959.3 675.2,955.5 676.7,950.4 678.2,948.7 679.6,947.9 681.1,943.9 682.6,942.6 683.9,944.5 685.2,944.5 686.5,944.3 687.9,946.8 689.2,945.6 690.5,944.6 691.8,946.3 693.3,941.5 694.8,940.3 696.2,936.5 697.7,928.3 699.2,926.0 700.5,928.9 701.8,930.4 703.1,928.5 704.5,929.6 705.8,928.1 707.1,930.9 708.4,931.5 709.8,932.0 711.1,933.1 712.5,930.1 713.9,933.4 715.3,929.8 716.6,920.6 718.0,913.5 719.4,907.6 720.9,909.4 722.4,908.0 723.8,907.5 725.3,908.7 726.8,907.6 728.2,907.7 729.5,913.3 730.9,915.3 732.3,918.6 733.7,922.3 735.0,923.0 736.4,920.0 737.8,922.3 739.3,919.2 740.8,914.2 742.2,913.1 743.7,912.4 745.2,907.6 746.6,907.2 748.0,901.9 749.3,898.2 750.7,896.5 752.1,897.9 753.5,903.7 754.9,908.7 756.3,909.4 758.1,917.3 759.9,929.7 761.3,935.5 762.7,935.1 764.1,940.3 765.5,946.3 767.3,921.6 769.1,900.2 770.5,902.2 771.9,901.0 773.3,902.1 774.7,903.9 776.5,912.0 778.3,918.6 779.7,924.1 781.1,935.6 782.5,939.8 783.9,949.9 785.8,941.7 787.6,933.4 789.4,921.8 791.2,913.1 792.6,912.2 794.0,915.1 795.4,915.5 796.8,916.8 798.2,912.4 799.5,908.9 800.9,906.0 802.3,902.1 803.7,901.9 805.0,904.0 806.4,908.4 807.8,909.4 809.3,905.8 810.8,900.7 812.2,898.2 813.7,892.4 815.2,887.3 816.7,883.3 818.3,873.4 819.8,868.9 821.4,869.9 823.0,869.9 824.6,870.0 826.2,867.1 827.7,863.6 829.2,861.2 830.6,862.4 832.1,855.8 833.6,855.1 835.1,860.1 836.6,861.5 838.0,859.0 839.5,861.6 841.0,865.2 842.5,869.9 843.9,870.4 845.4,872.7 846.8,880.5 848.3,881.8 849.7,881.8 851.0,884.5 852.4,881.0 853.8,883.7 855.2,884.9 856.6,888.5 858.0,886.3 859.4,891.0 860.8,885.1 862.1,883.8 863.5,881.0 864.9,874.4 866.4,876.1 867.9,869.9 869.3,871.1 870.8,871.5 872.3,868.9 873.7,868.5 875.0,869.1 876.4,865.7 877.8,867.1 879.3,863.0 880.7,861.8 882.2,859.9 883.6,861.5 885.1,859.7 886.6,860.2 888.1,860.9 889.5,858.7 891.0,859.3 892.5,861.6 894.0,856.1 895.5,856.2 896.9,853.4 898.4,849.4 899.9,843.1 901.3,841.6 902.6,842.3 904.0,848.6 905.4,846.8 906.9,848.4 908.4,852.1 909.8,851.3 911.3,854.0 912.8,856.0 914.3,853.5 915.7,850.4 917.2,848.9 918.6,842.8 920.1,843.1 921.4,844.1 922.8,844.7 924.1,840.5 925.5,841.9 926.8,843.4 928.2,841.2 929.5,841.5 930.9,843.4 932.3,847.0 933.7,852.8 935.2,853.6 936.6,851.4 938.1,857.4 939.5,857.6 941.0,856.5 942.4,858.2 943.8,859.6 945.2,858.7 946.6,858.4 948.0,855.1 949.4,853.4 950.7,850.1 952.1,847.3 953.5,854.8 954.9,858.3 956.2,859.6 957.6,865.7 959.0,865.9 960.4,862.6 961.7,860.5 963.1,856.5 964.5,860.2 965.9,859.6 967.3,864.4 968.7,863.9 970.1,859.7 971.5,852.2 972.8,846.2 974.2,838.1 975.6,844.8 977.0,847.7 978.3,854.7 979.7,858.4 981.1,854.0 982.5,853.8 983.8,852.7 985.2,851.0 986.7,847.3 988.2,848.7 989.6,849.6 991.1,848.8 992.6,847.3 994.1,846.4 995.6,851.4 997.0,850.5 998.5,849.3 1000.0,851.0 1001.4,852.9 1002.8,853.3 1004.1,854.0 1005.5,854.7 1006.9,850.3 1008.2,850.3 1009.6,844.5 1011.0,839.9 1012.9,827.0 1014.4,827.1 1015.8,826.4 1017.3,826.6 1018.7,819.7 1020.2,821.5 1021.7,823.3 1023.2,825.1 1024.6,823.3 1026.1,825.3 1027.6,827.0 1029.0,822.9 1030.3,822.4 1031.7,822.1 1033.1,821.5 1034.5,818.6 1035.8,819.1 1037.2,822.6 1038.6,819.7 1040.4,806.2 1042.3,792.1 1044.2,751.6 1046.0,729.5 1047.3,728.5 1048.6,730.2 1049.9,726.7 1051.3,728.2 1052.6,725.0 1053.9,725.0 1055.2,722.1 1057.1,726.9 1058.9,736.8 1060.4,740.3 1061.9,744.3 1063.3,743.0 1064.8,751.2 1066.3,751.6 1067.7,753.2 1069.0,758.8 1070.4,760.6 1071.8,766.3 1073.3,767.0 1074.7,768.4 1076.2,765.9 1077.6,771.9 1079.1,770.0 1080.6,769.5 1082.1,770.2 1083.5,770.6 1085.0,769.2 1086.5,770.0 1087.9,765.0 1089.2,763.5 1090.6,759.3 1092.0,755.2 1093.4,752.1 1094.8,752.8 1096.2,748.5 1097.6,747.9 1099.0,746.8 1100.3,750.0 1101.7,750.6 1103.1,755.2 1104.5,754.1 1105.8,758.6 1107.2,757.3 1108.6,758.9 1110.4,771.4 1112.3,779.2 1114.2,779.7 1116.0,777.3 1117.4,778.3 1118.8,787.6 1120.1,791.1 1121.5,792.1 1123.0,792.8 1124.5,801.1 1125.9,801.6 1127.4,805.2 1128.9,808.6 1130.3,810.1 1131.7,804.3 1133.0,804.6 1134.4,803.1 1136.2,793.8 1138.1,779.2 1139.5,780.1 1140.8,778.1 1142.2,780.6 1143.6,777.3 1145.0,777.8 1146.3,775.2 1147.7,770.9 1149.1,771.8 1150.5,773.9 1151.8,774.3 1153.2,774.1 1154.6,777.3 1156.0,774.2 1157.4,776.6 1158.8,773.7 1160.2,775.5 1161.7,775.5 1163.1,777.2 1164.6,776.3 1166.0,775.5 1167.5,777.3 1168.9,779.2 1170.2,779.6 1171.6,783.2 1173.0,782.9 1174.5,781.2 1176.0,782.2 1177.4,780.1 1178.9,776.9 1180.4,773.7 1181.9,771.8 1183.4,770.6 1184.8,774.9 1186.3,773.9 1187.8,771.8 1189.3,772.2 1190.7,770.2 1192.2,769.3 1193.6,771.5 1195.1,770.0 1196.6,769.3 1198.1,768.3 1199.5,767.4 1201.0,767.0 1202.5,764.4 1204.3,767.2 1206.2,773.7 1207.6,770.3 1209.0,772.9 1210.3,770.6 1211.7,766.3 1213.1,765.8 1214.5,758.0 1215.8,755.3 1217.2,755.2 1218.6,753.4 1220.0,753.9 1221.4,754.6 1222.8,751.0 1224.1,753.2 1225.5,749.9 1226.9,749.6 1228.3,751.6 1229.8,751.8 1231.3,750.2 1232.7,749.9 1234.2,747.5 1235.7,747.4 1237.2,748.8 1238.6,748.8 1240.1,751.1 1241.5,755.1 1243.0,755.2 1245.5,771.8 1246.9,772.0 1248.2,765.5 1249.6,764.0 1251.0,764.4 1252.5,765.9 1254.0,764.4 1255.4,764.9 1256.9,761.2 1258.4,762.6 1259.8,765.4 1261.2,767.6 1262.5,774.1 1263.9,775.5 1265.3,771.9 1266.7,770.9 1268.1,770.1 1269.5,764.4 1271.0,764.8 1272.4,767.7 1273.9,770.3 1275.3,772.8 1276.8,771.8 1278.2,775.0 1279.6,778.4 1281.0,780.4 1282.4,786.5 1283.9,788.0 1285.3,782.5 1286.8,781.8 1288.2,784.0 1289.7,782.9 1291.0,782.0 1292.3,782.4 1293.6,779.3 1295.0,781.4 1296.3,776.4 1297.6,776.4 1298.9,777.3 1300.3,781.5 1301.7,781.2 1303.0,785.8 1304.4,790.2 1305.7,790.0 1307.1,788.2 1308.4,784.2 1309.7,781.8 1311.0,781.5 1312.4,782.1 1313.7,779.2 1315.1,777.9 1316.5,776.0 1317.8,779.0 1319.2,777.3 1320.6,777.3 1322.0,778.9 1323.3,778.6 1324.7,775.5 1326.6,788.1 1328.4,795.7 1329.9,796.8 1331.3,800.5 1332.8,799.0 1334.2,800.5 1335.7,803.1 1337.1,803.0 1338.5,806.7 1339.9,806.9 1341.3,805.0 1342.7,799.3 1344.0,795.9 1345.4,791.7 1346.8,788.4 1348.2,791.3 1349.5,795.1 1350.9,798.8 1352.3,803.1 1353.7,800.3 1355.0,801.6 1356.4,802.1 1357.8,799.4 1359.3,798.5 1360.8,799.2 1362.2,796.5 1363.7,793.1 1365.2,793.9 1366.6,791.3 1368.0,787.9 1369.3,780.1 1370.7,777.3 1372.0,774.7 1373.3,777.9 1374.6,778.4 1376.0,778.8 1377.3,781.5 1378.6,779.8 1379.9,779.2 1381.4,780.6 1382.9,775.8 1384.3,778.3 1385.8,779.4 1387.3,777.3 1388.8,773.7 1390.3,772.6 1391.7,775.4 1393.2,775.3 1394.7,771.8 1396.2,768.2 1397.6,770.4 1399.1,766.4 1400.5,768.9 1402.0,766.3 1403.3,766.4 1404.6,763.2 1405.9,762.3 1407.3,764.7 1408.6,762.5 1409.9,763.2 1411.2,760.8 1412.6,753.7 1414.0,747.9 1415.4,746.3 1416.8,749.5 1418.2,747.1 1419.5,745.4 1420.9,745.0 1422.3,744.2 1423.8,744.8 1425.3,744.0 1426.7,744.5 1428.2,740.7 1429.7,740.5 1431.2,742.8 1432.6,742.2 1434.1,743.7 1435.5,743.8 1437.0,742.3 1438.8,735.1 1440.7,723.9 1442.1,726.7 1443.5,727.6 1444.8,726.2 1446.2,725.8 1447.7,727.8 1449.2,730.7 1450.6,733.1 1452.1,732.7 1453.6,735.0 1455.0,732.7 1456.3,729.2 1457.7,730.9 1459.1,727.6 1460.5,731.5 1461.8,728.7 1463.2,728.4 1464.6,731.3 1466.0,730.9 1467.4,733.6 1468.8,734.2 1470.2,736.8 1471.5,738.0 1472.8,731.0 1474.1,730.9 1475.5,728.2 1476.8,729.8 1478.1,729.0 1479.4,725.8 1480.9,725.7 1482.3,726.9 1483.8,731.1 1485.2,733.7 1486.7,735.0 1488.2,737.1 1489.7,731.5 1491.1,731.5 1492.6,731.6 1494.1,733.1 1495.5,731.0 1496.8,730.6 1498.2,733.1 1499.6,731.3 1501.1,733.3 1502.6,732.6 1504.0,733.8 1505.5,735.9 1507.0,738.7 1508.4,738.6 1509.8,743.9 1511.1,743.0 1512.5,746.0 1513.9,748.1 1515.2,751.6 1516.6,751.4 1518.0,753.4 1519.4,750.6 1520.8,753.0 1522.1,751.8 1523.5,747.9 1525.0,744.7 1526.5,743.7 1527.9,744.0 1529.4,738.9 1530.9,736.8 1532.4,734.4 1533.9,732.6 1535.3,737.3 1536.8,735.6 1538.3,733.1 1539.8,733.1 1541.3,734.7 1542.7,735.4 1544.2,734.7 1545.7,736.8 1547.2,740.8 1548.6,739.9 1550.1,738.5 1551.5,738.3 1553.0,742.3 1554.8,742.5 1556.6,743.1 1557.9,743.6 1559.3,747.5 1560.6,748.3 1562.0,749.0 1563.3,749.7 1564.9,745.1 1566.6,744.7 1568.2,739.3 1569.9,737.0 1571.5,734.8 1572.8,732.0 1574.2,734.4 1575.5,730.9 1576.9,730.3 1578.2,728.2 1579.5,732.5 1580.8,729.4 1582.2,732.4 1583.5,731.4 1584.8,734.8 1586.2,735.6 1587.6,730.1 1588.9,734.2 1590.3,733.5 1591.7,732.6 1593.1,729.8 1594.4,728.6 1595.7,731.1 1597.1,735.1 1598.4,732.7 1599.7,736.5 1601.1,738.0 1602.5,739.6 1603.8,744.2 1605.2,743.6 1606.6,746.9 1608.0,746.4 1609.7,746.9 1611.3,751.5 1613.0,751.4 1614.6,754.8 1616.3,761.6 1617.9,763.0 1619.6,761.6 1621.2,767.2 1622.9,766.3 1624.2,764.6 1625.5,766.6 1626.9,766.5 1628.2,764.2 1629.5,766.3 1630.8,767.5 1632.2,763.5 1633.5,762.6 1634.9,760.4 1636.2,762.1 1637.5,764.1 1638.8,768.2 1640.2,772.9 1641.5,773.9 1642.8,777.9 1644.1,777.4 1645.4,772.2 1646.8,772.3 1648.1,771.0 1649.4,769.6 1650.7,773.7 1652.0,774.2 1653.4,774.5 1654.7,772.0 1656.0,776.2 1657.3,774.1 1658.7,774.8 1660.0,770.7 1661.4,771.3 1662.7,769.6 1664.1,770.4 1665.5,768.9 1666.8,775.8 1668.2,775.8 1669.6,773.3 1671.0,776.2 1672.4,775.2 1673.7,771.6 1675.1,770.5 1676.5,769.8 1677.8,766.7 1679.2,766.3 1680.9,763.2 1682.6,762.1 1684.2,763.4 1685.9,767.0 1687.5,767.9 1689.2,770.3 1690.8,773.8 1692.5,779.5 1693.8,780.9 1695.1,778.5 1696.5,782.2 1697.8,779.9 1699.1,779.5 1700.4,779.5 1701.8,775.8 1703.1,777.5 1704.5,771.8 1705.8,772.9 1707.2,769.3 1708.6,767.6 1710.0,769.7 1711.5,768.5 1712.9,763.9 1714.3,763.8 1715.7,763.0 1717.1,765.6 1718.5,764.7 1719.8,762.2 1721.2,763.6 1722.6,763.7 1724.0,766.3 1725.4,765.1 1726.8,767.9 1728.2,767.0 1729.5,773.2 1730.9,771.4 1732.3,772.9 1733.7,772.6 1735.1,773.0 1736.4,773.4 1737.8,773.3 1739.2,770.3 1740.6,770.6 1742.0,770.5 1743.3,771.9 1744.7,770.5 1746.1,773.7 1747.4,776.5 1748.8,776.2 1750.1,780.4 1751.5,780.6 1752.8,781.1 1754.2,782.1 1755.5,782.8" fill="none" stroke="#6e4a92" stroke-width="6.5" stroke-linejoin="miter" stroke-miterlimit="2"/><polygon points="1036,818 1042,790 1048,770 1051,800 1048,845 1045,862 1041,845" fill="#6e4a92"/><polygon points="1055,721 1073,721 1077,750 1072,775 1064,768" fill="#6e4a92"/><polygon points="1082,765 1090,750 1104,748 1112,772 1100,770" fill="#6e4a92"/><polyline points="6.4,871.3 9.2,869.5 12.0,867.8 14.7,865.4 18.4,863.0 22.1,860.8 26.7,862.7 30.4,864.9 34.1,864.4 37.7,865.8 40.5,864.9 44.2,859.8 48.8,855.1 53.4,852.4 58.9,849.8 63.5,848.9 66.3,849.1 70.0,850.2 73.7,849.8 77.3,848.0 81.0,846.7 86.5,847.2 92.1,847.4 97.6,851.6 105.0,854.8 109.6,856.6 114.2,859.0 122.4,861.2 127.0,863.4 132.6,868.2 140.0,872.6 141.8,875.2 147.3,878.1 152.8,880.4 158.3,883.7 162.0,889.4 166.6,895.6 172.2,902.6 178.6,910.2 184.1,914.2 189.6,915.2 193.3,915.2 198.9,911.8 206.2,906.5 211.7,901.5 217.3,900.1 223.7,897.5 229.2,897.9 235.7,899.3 239.4,902.8 246.7,904.9 252.3,907.2 257.8,909.1 265.1,911.5 270.7,914.1 276.2,917.5 281.7,922.1 287.2,926.2 296.4,933.0 300.1,938.3 303.8,944.2 310.0,951.6 313.7,957.1 318.3,957.2 321.0,959.9 325.7,958.5 330.3,959.6 333.9,964.5 337.6,970.1 342.2,971.2 348.7,976.7 355.1,980.0 359.7,979.8 365.2,980.5 372.6,982.0 380.0,984.6 385.5,983.8 391.0,981.6 396.5,979.4 400.2,976.3 405.7,973.9 411.3,973.2 416.8,977.6 424.2,984.2 429.7,990.3 438.9,990.8 444.4,991.9 451.8,989.7 459.1,983.5 466.5,977.2 472.0,974.6 475.7,971.5 483.1,973.7 489.5,977.0 491.4,983.5 496.0,988.3 501.5,996.2 506.1,999.1 510.7,999.5 518.1,998.6 527.3,997.1 536.5,994.5 543.8,993.4 551.2,996.6 556.7,999.9 564.1,1003.2 573.3,1004.3 580.7,1000.9 588.0,999.3 591.7,996.0 597.2,992.5 602.8,988.4 612.0,982.2 617.5,974.8 623.0,970.0 629.2,967.6 634.7,961.2 637.5,962.7 643.9,961.9 650.4,963.8 654.1,963.8 658.7,966.2 664.2,965.1 667.9,962.1 675.2,957.0 682.6,947.8 691.8,941.9 699.2,937.5 708.4,930.5 713.9,922.7 719.4,921.2 726.8,919.4 732.3,914.2 737.8,912.0 745.2,912.4 750.7,914.6 756.3,919.4 759.9,917.9 765.5,919.4 769.1,921.2 774.7,925.3 778.3,922.7 783.9,925.3 787.6,927.9 791.2,924.6 796.8,916.5 802.3,907.2 807.8,898.4 815.2,888.5 819.8,879.1 826.2,870.2 833.6,869.1 841.0,872.1 848.3,876.9 853.8,880.7 859.4,881.5 864.9,878.5 872.3,873.7 877.8,867.8 885.1,861.6 892.5,857.2 899.9,854.9 905.4,851.6 912.8,847.6 920.1,849.5 929.5,851.5 933.7,852.0 941.0,852.8 946.6,857.6 952.1,858.4 957.6,859.9 963.1,855.8 968.7,858.0 974.2,855.1 979.7,853.2 985.2,850.7 992.6,854.0 1000.0,850.3 1005.5,845.5 1011.0,840.3 1012.9,835.5 1020.2,828.9 1027.6,824.8 1033.1,817.9 1038.6,803.9 1042.3,784.4 1044.2,764.5 1046.0,747.9 1055.2,739.8 1058.9,742.8 1066.3,750.9 1071.8,760.4 1079.1,764.1 1086.5,763.4 1092.0,761.2 1097.6,758.9 1103.1,760.8 1108.6,765.2 1112.3,774.0 1116.0,784.7 1121.5,793.6 1128.9,793.6 1134.4,793.6 1138.1,789.5 1143.6,783.2 1149.1,777.7 1154.6,777.3 1160.2,778.5 1167.5,778.8 1173.0,777.7 1180.4,776.6 1187.8,774.1 1195.1,772.2 1202.5,770.7 1206.2,767.4 1211.7,763.7 1217.2,760.3 1228.3,756.6 1235.7,757.7 1243.0,759.6 1245.5,761.8 1251.0,767.4 1258.4,769.2 1263.9,769.2 1269.5,773.7 1276.8,777.7 1282.4,778.1 1289.7,783.2 1298.9,784.7 1304.4,782.9 1313.7,781.4 1319.2,785.1 1324.7,787.7 1328.4,792.8 1335.7,795.0 1341.3,800.6 1346.8,801.3 1352.3,799.5 1357.8,793.9 1365.2,792.1 1370.7,786.9 1379.9,781.4 1387.3,775.9 1394.7,772.6 1402.0,766.3 1411.2,759.7 1414.0,753.4 1422.3,748.6 1429.7,741.3 1437.0,736.8 1440.7,735.0 1446.2,732.4 1453.6,730.2 1459.1,732.8 1464.6,732.8 1470.2,732.8 1479.4,733.9 1486.7,733.9 1494.1,734.3 1499.6,738.3 1507.0,742.0 1512.5,745.0 1518.0,746.1 1523.5,744.9 1530.9,743.1 1538.3,740.9 1545.7,739.9 1553.0,742.5 1556.6,744.8 1563.3,744.4 1566.6,741.6 1571.5,739.9 1578.2,736.0 1584.8,734.3 1593.1,736.6 1599.7,741.3 1608.0,746.9 1613.0,754.2 1617.9,760.2 1622.9,763.3 1629.5,768.6 1636.2,769.9 1642.8,771.9 1649.4,772.6 1656.0,775.4 1662.7,773.1 1671.0,771.6 1679.2,769.9 1682.6,771.9 1687.5,772.6 1692.5,773.9 1699.1,774.1 1705.8,773.7 1715.7,772.4 1724.0,770.6 1732.3,771.3 1740.6,775.3 1748.8,777.1 1755.5,778.0" fill="none" stroke="#ffffff" stroke-width="4" stroke-dasharray="13,13" stroke-linejoin="round"/><polyline points="6.4,872.6 7.8,869.6 9.2,867.1 10.6,868.8 12.0,869.8 13.3,868.7 14.7,862.5 16.5,860.9 18.4,859.7 20.2,860.2 22.1,860.6 23.6,859.3 25.2,855.0 26.7,855.1 28.5,857.0 30.4,858.8 32.2,866.0 34.1,871.7 35.9,873.0 37.7,870.8 39.1,861.9 40.5,857.9 42.4,859.0 44.2,862.5 45.7,857.3 47.3,858.8 48.8,854.2 50.3,852.6 51.9,845.9 53.4,845.9 54.8,849.2 56.1,849.6 57.5,848.2 58.9,847.7 60.4,847.2 62.0,843.2 63.5,844.1 64.9,843.9 66.3,849.6 68.2,849.8 70.0,849.6 71.8,845.6 73.7,846.8 75.5,848.2 77.3,853.3 79.2,846.2 81.0,842.2 82.4,838.9 83.8,841.1 85.1,840.5 86.5,840.4 87.9,843.1 89.3,841.9 90.7,843.3 92.1,843.1 93.5,844.7 94.8,847.3 96.2,847.7 97.6,849.6 99.1,849.2 100.6,854.4 102.0,855.3 103.5,855.3 105.0,854.2 106.5,858.5 108.1,859.2 109.6,863.4 111.1,859.3 112.7,857.2 114.2,856.0 115.6,852.8 116.9,856.4 118.3,853.6 119.7,855.6 121.0,852.2 122.4,852.3 123.9,858.1 125.5,860.6 127.0,861.6 128.4,859.5 129.8,861.7 131.2,866.8 132.6,865.2 134.1,866.9 135.6,871.8 137.0,870.1 138.5,870.0 140.0,874.4 141.8,880.0 143.2,879.4 144.6,878.9 145.9,874.4 147.3,874.4 148.7,871.9 150.1,873.4 151.4,877.2 152.8,874.4 154.2,877.3 155.6,874.9 156.9,877.1 158.3,880.0 160.2,880.4 162.0,885.5 163.5,886.5 165.1,894.6 166.6,896.5 168.0,896.2 169.4,900.1 170.8,901.1 172.2,903.0 173.8,901.8 175.4,905.7 177.0,902.8 178.6,905.7 180.0,908.9 181.3,908.0 182.7,912.2 184.1,915.0 185.5,915.3 186.8,917.7 188.2,924.0 189.6,923.2 191.4,921.8 193.3,916.8 194.7,913.3 196.1,914.5 197.5,908.2 198.9,907.6 200.4,906.6 201.8,909.0 203.3,907.3 204.7,903.7 206.2,905.7 207.6,906.8 208.9,900.3 210.3,898.8 211.7,898.4 213.1,899.6 214.5,896.4 215.9,895.8 217.3,896.5 218.9,892.8 220.5,891.8 222.1,893.6 223.7,892.0 225.1,892.5 226.4,896.7 227.8,897.4 229.2,900.2 230.5,898.5 231.8,900.0 233.1,895.7 234.4,894.8 235.7,892.9 237.6,898.7 239.4,900.2 240.9,899.0 242.3,899.6 243.8,904.9 245.2,905.1 246.7,903.9 248.1,903.8 249.5,904.8 250.9,909.5 252.3,909.4 253.7,912.3 255.1,908.1 256.4,912.9 257.8,910.4 259.3,911.6 260.7,908.8 262.2,906.6 263.6,903.5 265.1,904.8 266.5,903.2 267.9,909.9 269.3,906.7 270.7,909.4 272.1,912.3 273.4,911.2 274.8,916.2 276.2,915.9 277.6,918.1 278.9,917.9 280.3,918.8 281.7,922.3 283.1,925.0 284.4,922.5 285.8,924.8 287.2,927.8 288.5,928.2 289.8,929.9 291.1,928.5 292.5,926.5 293.8,930.3 295.1,926.0 296.4,927.8 298.2,925.8 300.1,929.7 302.0,938.4 303.8,949.9 305.4,949.3 306.9,946.8 308.4,947.3 310.0,949.0 311.9,952.4 313.7,957.3 315.2,960.2 316.8,960.0 318.3,964.7 319.6,960.2 321.0,957.3 322.6,957.2 324.1,955.3 325.7,950.0 327.2,955.2 328.8,959.7 330.3,962.8 332.1,956.9 333.9,950.0 335.8,957.9 337.6,970.2 339.1,971.4 340.7,975.3 342.2,982.2 343.5,983.7 344.8,981.6 346.1,982.2 347.4,975.6 348.7,977.6 350.3,976.1 351.9,972.8 353.5,972.0 355.1,968.3 356.6,970.3 358.2,977.5 359.7,977.6 361.1,977.4 362.4,982.5 363.8,985.9 365.2,986.8 366.7,988.1 368.2,986.0 369.6,984.7 371.1,984.1 372.6,981.2 374.1,983.7 375.6,980.3 377.0,982.3 378.5,983.6 380.0,981.2 381.4,982.1 382.8,978.0 384.1,978.8 385.5,975.7 386.9,981.6 388.2,983.5 389.6,987.5 391.0,990.4 392.4,987.9 393.8,987.2 395.1,985.6 396.5,983.1 398.4,974.1 400.2,970.2 401.6,971.0 402.9,973.2 404.3,972.5 405.7,970.2 407.1,969.0 408.5,964.5 409.9,964.0 411.3,960.1 412.7,965.2 414.1,968.9 415.4,975.9 416.8,978.5 418.3,976.2 419.8,980.4 421.2,976.2 422.7,979.8 424.2,979.4 425.6,982.5 426.9,984.2 428.3,990.3 429.7,992.3 431.0,993.9 432.3,996.1 433.6,999.5 435.0,997.1 436.3,997.2 437.6,1000.5 438.9,1003.3 440.3,1001.1 441.6,995.1 443.0,991.6 444.4,990.4 445.9,991.0 447.4,987.7 448.8,984.5 450.3,985.4 451.8,981.2 453.3,980.9 454.7,983.7 456.2,981.7 457.6,983.8 459.1,985.0 460.6,986.1 462.1,986.0 463.5,985.0 465.0,981.3 466.5,981.2 467.9,979.4 469.2,975.5 470.6,972.1 472.0,972.0 473.9,965.5 475.7,959.1 477.2,963.0 478.7,964.9 480.1,965.9 481.6,969.2 483.1,968.3 484.7,967.2 486.3,966.8 487.9,968.8 489.5,969.3 491.4,992.3 492.9,989.7 494.5,988.1 496.0,988.6 497.4,988.8 498.8,990.8 500.1,990.7 501.5,991.4 503.0,990.6 504.6,994.0 506.1,992.3 507.6,1000.7 509.2,1003.1 510.7,1008.9 512.2,1006.0 513.7,1005.3 515.1,1010.0 516.6,1004.6 518.1,1007.0 519.4,1005.9 520.7,1002.7 522.0,998.7 523.4,999.3 524.7,992.3 526.0,990.6 527.3,990.4 528.6,989.6 529.9,986.5 531.2,990.8 532.6,986.8 533.9,985.7 535.2,984.6 536.5,986.8 538.0,987.2 539.4,985.8 540.9,986.5 542.3,986.3 543.8,985.0 545.3,989.0 546.8,992.2 548.2,992.7 549.7,992.0 551.2,996.0 552.6,997.2 554.0,996.8 555.3,997.2 556.7,1001.5 558.2,1002.2 559.7,1004.6 561.1,1002.3 562.6,1003.7 564.1,1006.0 565.4,1004.7 566.7,1006.4 568.0,1005.0 569.4,1005.1 570.7,1005.6 572.0,1003.0 573.3,1003.3 574.8,1004.7 576.3,1005.0 577.7,999.7 579.2,1004.5 580.7,1001.5 582.2,1002.8 583.6,999.3 585.1,1001.2 586.5,1002.3 588.0,1001.5 589.9,995.7 591.7,984.9 593.1,987.4 594.5,991.8 595.8,996.9 597.2,997.8 598.6,996.8 600.0,995.0 601.4,989.3 602.8,986.8 604.1,987.3 605.4,984.2 606.7,986.9 608.1,987.1 609.4,985.6 610.7,985.7 612.0,984.0 613.4,981.6 614.8,985.0 616.1,984.8 617.5,981.2 618.9,977.2 620.2,967.6 621.6,962.2 623.0,953.6 624.5,954.4 626.1,959.8 627.7,961.3 629.2,961.0 630.6,960.5 632.0,959.4 633.3,962.0 634.7,962.8 636.1,967.7 637.5,972.0 639.1,967.9 640.7,960.4 642.3,951.9 643.9,949.0 645.2,953.3 646.5,951.2 647.8,958.0 649.1,956.6 650.4,961.0 652.2,958.2 654.1,957.3 655.6,963.9 657.2,964.9 658.7,972.0 660.1,969.9 661.5,972.1 662.8,973.3 664.2,972.0 666.0,968.5 667.9,961.0 669.4,961.0 670.8,961.5 672.3,957.7 673.7,959.3 675.2,955.5 676.7,950.4 678.2,948.7 679.6,947.9 681.1,943.9 682.6,942.6 683.9,944.5 685.2,944.5 686.5,944.3 687.9,946.8 689.2,945.6 690.5,944.6 691.8,946.3 693.3,941.5 694.8,940.3 696.2,936.5 697.7,928.3 699.2,926.0 700.5,928.9 701.8,930.4 703.1,928.5 704.5,929.6 705.8,928.1 707.1,930.9 708.4,931.5 709.8,932.0 711.1,933.1 712.5,930.1 713.9,933.4 715.3,929.8 716.6,920.6 718.0,913.5 719.4,907.6 720.9,909.4 722.4,908.0 723.8,907.5 725.3,908.7 726.8,907.6 728.2,907.7 729.5,913.3 730.9,915.3 732.3,918.6 733.7,922.3 735.0,923.0 736.4,920.0 737.8,922.3 739.3,919.2 740.8,914.2 742.2,913.1 743.7,912.4 745.2,907.6 746.6,907.2 748.0,901.9 749.3,898.2 750.7,896.5 752.1,897.9 753.5,903.7 754.9,908.7 756.3,909.4 758.1,917.3 759.9,929.7 761.3,935.5 762.7,935.1 764.1,940.3 765.5,946.3 767.3,921.6 769.1,900.2 770.5,902.2 771.9,901.0 773.3,902.1 774.7,903.9 776.5,912.0 778.3,918.6 779.7,924.1 781.1,935.6 782.5,939.8 783.9,949.9 785.8,941.7 787.6,933.4 789.4,921.8 791.2,913.1 792.6,912.2 794.0,915.1 795.4,915.5 796.8,916.8 798.2,912.4 799.5,908.9 800.9,906.0 802.3,902.1 803.7,901.9 805.0,904.0 806.4,908.4 807.8,909.4 809.3,905.8 810.8,900.7 812.2,898.2 813.7,892.4 815.2,887.3 816.7,883.3 818.3,873.4 819.8,868.9 821.4,869.9 823.0,869.9 824.6,870.0 826.2,867.1 827.7,863.6 829.2,861.2 830.6,862.4 832.1,855.8 833.6,855.1 835.1,860.1 836.6,861.5 838.0,859.0 839.5,861.6 841.0,865.2 842.5,869.9 843.9,870.4 845.4,872.7 846.8,880.5 848.3,881.8 849.7,881.8 851.0,884.5 852.4,881.0 853.8,883.7 855.2,884.9 856.6,888.5 858.0,886.3 859.4,891.0 860.8,885.1 862.1,883.8 863.5,881.0 864.9,874.4 866.4,876.1 867.9,869.9 869.3,871.1 870.8,871.5 872.3,868.9 873.7,868.5 875.0,869.1 876.4,865.7 877.8,867.1 879.3,863.0 880.7,861.8 882.2,859.9 883.6,861.5 885.1,859.7 886.6,860.2 888.1,860.9 889.5,858.7 891.0,859.3 892.5,861.6 894.0,856.1 895.5,856.2 896.9,853.4 898.4,849.4 899.9,843.1 901.3,841.6 902.6,842.3 904.0,848.6 905.4,846.8 906.9,848.4 908.4,852.1 909.8,851.3 911.3,854.0 912.8,856.0 914.3,853.5 915.7,850.4 917.2,848.9 918.6,842.8 920.1,843.1 921.4,844.1 922.8,844.7 924.1,840.5 925.5,841.9 926.8,843.4 928.2,841.2 929.5,841.5 930.9,843.4 932.3,847.0 933.7,852.8 935.2,853.6 936.6,851.4 938.1,857.4 939.5,857.6 941.0,856.5 942.4,858.2 943.8,859.6 945.2,858.7 946.6,858.4 948.0,855.1 949.4,853.4 950.7,850.1 952.1,847.3 953.5,854.8 954.9,858.3 956.2,859.6 957.6,865.7 959.0,865.9 960.4,862.6 961.7,860.5 963.1,856.5 964.5,860.2 965.9,859.6 967.3,864.4 968.7,863.9 970.1,859.7 971.5,852.2 972.8,846.2 974.2,838.1 975.6,844.8 977.0,847.7 978.3,854.7 979.7,858.4 981.1,854.0 982.5,853.8 983.8,852.7 985.2,851.0 986.7,847.3 988.2,848.7 989.6,849.6 991.1,848.8 992.6,847.3 994.1,846.4 995.6,851.4 997.0,850.5 998.5,849.3 1000.0,851.0 1001.4,852.9 1002.8,853.3 1004.1,854.0 1005.5,854.7 1006.9,850.3 1008.2,850.3 1009.6,844.5 1011.0,839.9 1012.9,827.0 1014.4,827.1 1015.8,826.4 1017.3,826.6 1018.7,819.7 1020.2,821.5 1021.7,823.3 1023.2,825.1 1024.6,823.3 1026.1,825.3 1027.6,827.0 1029.0,822.9 1030.3,822.4 1031.7,822.1 1033.1,821.5 1034.5,818.6 1035.8,819.1 1037.2,822.6 1038.6,819.7 1040.4,806.2 1042.3,792.1 1044.2,751.6 1046.0,729.5 1047.3,728.5 1048.6,730.2 1049.9,726.7 1051.3,728.2 1052.6,725.0 1053.9,725.0 1055.2,722.1 1057.1,726.9 1058.9,736.8 1060.4,740.3 1061.9,744.3 1063.3,743.0 1064.8,751.2 1066.3,751.6 1067.7,753.2 1069.0,758.8 1070.4,760.6 1071.8,766.3 1073.3,767.0 1074.7,768.4 1076.2,765.9 1077.6,771.9 1079.1,770.0 1080.6,769.5 1082.1,770.2 1083.5,770.6 1085.0,769.2 1086.5,770.0 1087.9,765.0 1089.2,763.5 1090.6,759.3 1092.0,755.2 1093.4,752.1 1094.8,752.8 1096.2,748.5 1097.6,747.9 1099.0,746.8 1100.3,750.0 1101.7,750.6 1103.1,755.2 1104.5,754.1 1105.8,758.6 1107.2,757.3 1108.6,758.9 1110.4,771.4 1112.3,779.2 1114.2,779.7 1116.0,777.3 1117.4,778.3 1118.8,787.6 1120.1,791.1 1121.5,792.1 1123.0,792.8 1124.5,801.1 1125.9,801.6 1127.4,805.2 1128.9,808.6 1130.3,810.1 1131.7,804.3 1133.0,804.6 1134.4,803.1 1136.2,793.8 1138.1,779.2 1139.5,780.1 1140.8,778.1 1142.2,780.6 1143.6,777.3 1145.0,777.8 1146.3,775.2 1147.7,770.9 1149.1,771.8 1150.5,773.9 1151.8,774.3 1153.2,774.1 1154.6,777.3 1156.0,774.2 1157.4,776.6 1158.8,773.7 1160.2,775.5 1161.7,775.5 1163.1,777.2 1164.6,776.3 1166.0,775.5 1167.5,777.3 1168.9,779.2 1170.2,779.6 1171.6,783.2 1173.0,782.9 1174.5,781.2 1176.0,782.2 1177.4,780.1 1178.9,776.9 1180.4,773.7 1181.9,771.8 1183.4,770.6 1184.8,774.9 1186.3,773.9 1187.8,771.8 1189.3,772.2 1190.7,770.2 1192.2,769.3 1193.6,771.5 1195.1,770.0 1196.6,769.3 1198.1,768.3 1199.5,767.4 1201.0,767.0 1202.5,764.4 1204.3,767.2 1206.2,773.7 1207.6,770.3 1209.0,772.9 1210.3,770.6 1211.7,766.3 1213.1,765.8 1214.5,758.0 1215.8,755.3 1217.2,755.2 1218.6,753.4 1220.0,753.9 1221.4,754.6 1222.8,751.0 1224.1,753.2 1225.5,749.9 1226.9,749.6 1228.3,751.6 1229.8,751.8 1231.3,750.2 1232.7,749.9 1234.2,747.5 1235.7,747.4 1237.2,748.8 1238.6,748.8 1240.1,751.1 1241.5,755.1 1243.0,755.2 1245.5,771.8 1246.9,772.0 1248.2,765.5 1249.6,764.0 1251.0,764.4 1252.5,765.9 1254.0,764.4 1255.4,764.9 1256.9,761.2 1258.4,762.6 1259.8,765.4 1261.2,767.6 1262.5,774.1 1263.9,775.5 1265.3,771.9 1266.7,770.9 1268.1,770.1 1269.5,764.4 1271.0,764.8 1272.4,767.7 1273.9,770.3 1275.3,772.8 1276.8,771.8 1278.2,775.0 1279.6,778.4 1281.0,780.4 1282.4,786.5 1283.9,788.0 1285.3,782.5 1286.8,781.8 1288.2,784.0 1289.7,782.9 1291.0,782.0 1292.3,782.4 1293.6,779.3 1295.0,781.4 1296.3,776.4 1297.6,776.4 1298.9,777.3 1300.3,781.5 1301.7,781.2 1303.0,785.8 1304.4,790.2 1305.7,790.0 1307.1,788.2 1308.4,784.2 1309.7,781.8 1311.0,781.5 1312.4,782.1 1313.7,779.2 1315.1,777.9 1316.5,776.0 1317.8,779.0 1319.2,777.3 1320.6,777.3 1322.0,778.9 1323.3,778.6 1324.7,775.5 1326.6,788.1 1328.4,795.7 1329.9,796.8 1331.3,800.5 1332.8,799.0 1334.2,800.5 1335.7,803.1 1337.1,803.0 1338.5,806.7 1339.9,806.9 1341.3,805.0 1342.7,799.3 1344.0,795.9 1345.4,791.7 1346.8,788.4 1348.2,791.3 1349.5,795.1 1350.9,798.8 1352.3,803.1 1353.7,800.3 1355.0,801.6 1356.4,802.1 1357.8,799.4 1359.3,798.5 1360.8,799.2 1362.2,796.5 1363.7,793.1 1365.2,793.9 1366.6,791.3 1368.0,787.9 1369.3,780.1 1370.7,777.3 1372.0,774.7 1373.3,777.9 1374.6,778.4 1376.0,778.8 1377.3,781.5 1378.6,779.8 1379.9,779.2 1381.4,780.6 1382.9,775.8 1384.3,778.3 1385.8,779.4 1387.3,777.3 1388.8,773.7 1390.3,772.6 1391.7,775.4 1393.2,775.3 1394.7,771.8 1396.2,768.2 1397.6,770.4 1399.1,766.4 1400.5,768.9 1402.0,766.3 1403.3,766.4 1404.6,763.2 1405.9,762.3 1407.3,764.7 1408.6,762.5 1409.9,763.2 1411.2,760.8 1412.6,753.7 1414.0,747.9 1415.4,746.3 1416.8,749.5 1418.2,747.1 1419.5,745.4 1420.9,745.0 1422.3,744.2 1423.8,744.8 1425.3,744.0 1426.7,744.5 1428.2,740.7 1429.7,740.5 1431.2,742.8 1432.6,742.2 1434.1,743.7 1435.5,743.8 1437.0,742.3 1438.8,735.1 1440.7,723.9 1442.1,726.7 1443.5,727.6 1444.8,726.2 1446.2,725.8 1447.7,727.8 1449.2,730.7 1450.6,733.1 1452.1,732.7 1453.6,735.0 1455.0,732.7 1456.3,729.2 1457.7,730.9 1459.1,727.6 1460.5,731.5 1461.8,728.7 1463.2,728.4 1464.6,731.3 1466.0,730.9 1467.4,733.6 1468.8,734.2 1470.2,736.8 1471.5,738.0 1472.8,731.0 1474.1,730.9 1475.5,728.2 1476.8,729.8 1478.1,729.0 1479.4,725.8 1480.9,725.7 1482.3,726.9 1483.8,731.1 1485.2,733.7 1486.7,735.0 1488.2,737.1 1489.7,731.5 1491.1,731.5 1492.6,731.6 1494.1,733.1 1495.5,731.0 1496.8,730.6 1498.2,733.1 1499.6,731.3 1501.1,733.3 1502.6,732.6 1504.0,733.8 1505.5,735.9 1507.0,738.7 1508.4,738.6 1509.8,743.9 1511.1,743.0 1512.5,746.0 1513.9,748.1 1515.2,751.6 1516.6,751.4 1518.0,753.4 1519.4,750.6 1520.8,753.0 1522.1,751.8 1523.5,747.9 1525.0,744.7 1526.5,743.7 1527.9,744.0 1529.4,738.9 1530.9,736.8 1532.4,734.4 1533.9,732.6 1535.3,737.3 1536.8,735.6 1538.3,733.1 1539.8,733.1 1541.3,734.7 1542.7,735.4 1544.2,734.7 1545.7,736.8 1547.2,740.8 1548.6,739.9 1550.1,738.5 1551.5,738.3 1553.0,742.3 1554.8,742.5 1556.6,743.1 1557.9,743.6 1559.3,747.5 1560.6,748.3 1562.0,749.0 1563.3,749.7 1564.9,745.1 1566.6,744.7 1568.2,739.3 1569.9,737.0 1571.5,734.8 1572.8,732.0 1574.2,734.4 1575.5,730.9 1576.9,730.3 1578.2,728.2 1579.5,732.5 1580.8,729.4 1582.2,732.4 1583.5,731.4 1584.8,734.8 1586.2,735.6 1587.6,730.1 1588.9,734.2 1590.3,733.5 1591.7,732.6 1593.1,729.8 1594.4,728.6 1595.7,731.1 1597.1,735.1 1598.4,732.7 1599.7,736.5 1601.1,738.0 1602.5,739.6 1603.8,744.2 1605.2,743.6 1606.6,746.9 1608.0,746.4 1609.7,746.9 1611.3,751.5 1613.0,751.4 1614.6,754.8 1616.3,761.6 1617.9,763.0 1619.6,761.6 1621.2,767.2 1622.9,766.3 1624.2,764.6 1625.5,766.6 1626.9,766.5 1628.2,764.2 1629.5,766.3 1630.8,767.5 1632.2,763.5 1633.5,762.6 1634.9,760.4 1636.2,762.1 1637.5,764.1 1638.8,768.2 1640.2,772.9 1641.5,773.9 1642.8,777.9 1644.1,777.4 1645.4,772.2 1646.8,772.3 1648.1,771.0 1649.4,769.6 1650.7,773.7 1652.0,774.2 1653.4,774.5 1654.7,772.0 1656.0,776.2 1657.3,774.1 1658.7,774.8 1660.0,770.7 1661.4,771.3 1662.7,769.6 1664.1,770.4 1665.5,768.9 1666.8,775.8 1668.2,775.8 1669.6,773.3 1671.0,776.2 1672.4,775.2 1673.7,771.6 1675.1,770.5 1676.5,769.8 1677.8,766.7 1679.2,766.3 1680.9,763.2 1682.6,762.1 1684.2,763.4 1685.9,767.0 1687.5,767.9 1689.2,770.3 1690.8,773.8 1692.5,779.5 1693.8,780.9 1695.1,778.5 1696.5,782.2 1697.8,779.9 1699.1,779.5 1700.4,779.5 1701.8,775.8 1703.1,777.5 1704.5,771.8 1705.8,772.9 1707.2,769.3 1708.6,767.6 1710.0,769.7 1711.5,768.5 1712.9,763.9 1714.3,763.8 1715.7,763.0 1717.1,765.6 1718.5,764.7 1719.8,762.2 1721.2,763.6 1722.6,763.7 1724.0,766.3 1725.4,765.1 1726.8,767.9 1728.2,767.0 1729.5,773.2 1730.9,771.4 1732.3,772.9 1733.7,772.6 1735.1,773.0 1736.4,773.4 1737.8,773.3 1739.2,770.3 1740.6,770.6 1742.0,770.5 1743.3,771.9 1744.7,770.5 1746.1,773.7 1747.4,776.5 1748.8,776.2 1750.1,780.4 1751.5,780.6 1752.8,781.1 1754.2,782.1 1755.5,782.8" fill="none" stroke="#ff38ff" stroke-width="3.3" stroke-linejoin="miter" stroke-miterlimit="2"/></g><line x1="1400" y1="717.5" x2="1809" y2="717.5" stroke="#f01c1c" stroke-width="1.3" stroke-dasharray="17,11"/><line x1="1557" y1="726.2" x2="1809" y2="726.2" stroke="#f01c1c" stroke-width="1.3" stroke-dasharray="17,11"/><line x1="1150" y1="749.4" x2="1809" y2="749.4" stroke="#f01c1c" stroke-width="1.3" stroke-dasharray="17,11"/><line x1="1311" y1="772.4" x2="1809" y2="772.4" stroke="#f01c1c" stroke-width="1.3" stroke-dasharray="17,11"/><line x1="1271" y1="807.4" x2="1809" y2="807.4" stroke="#20b020" stroke-width="1.3" stroke-dasharray="17,11"/><line x1="5" y1="783.5" x2="1809" y2="783.5" stroke="#40b040" stroke-width="1.2"/><line x1="5" y1="785" x2="1809" y2="785" stroke="#d07a6a" stroke-width="1.2"/><line x1="1715" y1="762" x2="1809" y2="761" stroke="#e82020" stroke-width="1.2"/><line x1="1715" y1="762" x2="1809" y2="769.6" stroke="#e82020" stroke-width="1.2"/><line x1="1715" y1="762" x2="1809" y2="773" stroke="#e82020" stroke-width="1.2"/><line x1="1715" y1="762" x2="1809" y2="790.3" stroke="#e82020" stroke-width="1.2"/><line x1="1753.8" y1="772.9" x2="1809" y2="760.5" stroke="#e82020" stroke-width="1.2"/><line x1="1725" y1="766" x2="1809" y2="798" stroke="#e82020" stroke-width="1.2"/><line x1="1755" y1="785" x2="1809" y2="778" stroke="#d02020" stroke-width="1.5" stroke-dasharray="3,3"/><line x1="1755" y1="785" x2="1809" y2="790" stroke="#20a020" stroke-width="1.5" stroke-dasharray="3,3"/><line x1="1755" y1="785" x2="1809" y2="800" stroke="#20a020" stroke-width="1.5" stroke-dasharray="3,3"/><line x1="1755" y1="785" x2="1809" y2="805" stroke="#d02020" stroke-width="1.5" stroke-dasharray="3,3"/><line x1="1755" y1="785" x2="1809" y2="826" stroke="#d02020" stroke-width="1.5" stroke-dasharray="3,3"/><line x1="1755" y1="785" x2="1809" y2="837" stroke="#20a020" stroke-width="1.5" stroke-dasharray="3,3"/><line x1="1755" y1="785" x2="1809" y2="815" stroke="#20a020" stroke-width="1.5" stroke-dasharray="3,3"/><line x1="834.5" y1="686" x2="834.5" y2="1041" stroke="#c84646" stroke-width="1"/><line x1="5" y1="911.5" x2="1809" y2="911.5" stroke="#30b030" stroke-width="3"/><line x1="5" y1="975" x2="1809" y2="975" stroke="#30b030" stroke-width="4"/><path d="M56.4,834.5 L64.4,842.5 M64.4,834.5 L56.4,842.5" stroke="url(#gMO)" stroke-width="4" stroke-linecap="round"/><path d="M77.8,820.3 L82.39999999999999,820.3 L82.39999999999999,827.8 L85.6,827.8 L80.1,833.8 L74.6,827.8 L77.8,827.8 Z" fill="url(#gMO)"/><path d="M33.1,893.6 L37.699999999999996,893.6 L37.699999999999996,886.1 L40.9,886.1 L35.4,880.1 L29.9,886.1 L33.1,886.1 Z" fill="url(#gMB)"/><path d="M119.4,860.3 L127.4,868.3 M127.4,860.3 L119.4,868.3" stroke="url(#gMB)" stroke-width="4" stroke-linecap="round"/><path d="M164.0,917.5 L168.60000000000002,917.5 L168.60000000000002,910.0 L171.8,910.0 L166.3,904.0 L160.8,910.0 L164.0,910.0 Z" fill="url(#gMB)"/><path d="M205.4,887 L213.4,895 M213.4,887 L205.4,895" stroke="url(#gMO)" stroke-width="4" stroke-linecap="round"/><path d="M211.29999999999998,919.3 L215.9,919.3 L215.9,911.8 L219.1,911.8 L213.6,905.8 L208.1,911.8 L211.29999999999998,911.8 Z" fill="url(#gMB)"/><path d="M278.3,912.8 L286.3,920.8 M286.3,912.8 L278.3,920.8" stroke="url(#gMO)" stroke-width="4" stroke-linecap="round"/><path d="M294.09999999999997,907.8 L298.7,907.8 L298.7,915.3 L301.9,915.3 L296.4,921.3 L290.9,915.3 L294.09999999999997,915.3 Z" fill="url(#gMO)"/><path d="M315.5,986 L320.1,986 L320.1,978.5 L323.3,978.5 L317.8,972.5 L312.3,978.5 L315.5,978.5 Z" fill="url(#gMB)"/><path d="M396.09999999999997,952 L400.7,952 L400.7,959.5 L403.9,959.5 L398.4,965.5 L392.9,959.5 L396.09999999999997,959.5 Z" fill="url(#gMO)"/><path d="M388.9,972.6 L396.9,980.6 M396.9,972.6 L388.9,980.6" stroke="url(#gMO)" stroke-width="4" stroke-linecap="round"/><path d="M488.3,1000.3 L496.3,1008.3 M496.3,1000.3 L488.3,1008.3" stroke="url(#gMB)" stroke-width="4" stroke-linecap="round"/><path d="M589.6,976.3 L597.6,984.3 M597.6,976.3 L589.6,984.3" stroke="url(#gMO)" stroke-width="4" stroke-linecap="round"/><path d="M608.7,1012.3 L613.3,1012.3 L613.3,1004.8 L616.5,1004.8 L611,998.8 L605.5,1004.8 L608.7,1004.8 Z" fill="url(#gMB)"/><rect x="616.0" y="938.6" width="13" height="6" fill="url(#gMO)"/><path d="M667.4000000000001,942.8 L672.0,942.8 L672.0,950.3 L675.2,950.3 L669.7,956.3 L664.2,950.3 L667.4000000000001,950.3 Z" fill="url(#gMO)"/><path d="M670.7,964 L678.7,972 M678.7,964 L670.7,972" stroke="url(#gMB)" stroke-width="4" stroke-linecap="round"/><path d="M681.2,921.6 L685.8,921.6 L685.8,929.1 L689.0,929.1 L683.5,935.1 L678.0,929.1 L681.2,929.1 Z" fill="url(#gMO)"/><rect x="737.9" y="917.7" width="11" height="11" rx="2" fill="url(#gMB)"/><path d="M780.1,966.3 L784.6999999999999,966.3 L784.6999999999999,958.8 L787.9,958.8 L782.4,952.8 L776.9,958.8 L780.1,958.8 Z" fill="url(#gMB)"/><rect x="782.0" y="892.3" width="13" height="6" fill="url(#gMO)"/><path d="M798.1,881.1 L802.6999999999999,881.1 L802.6999999999999,888.6 L805.9,888.6 L800.4,894.6 L794.9,888.6 L798.1,888.6 Z" fill="url(#gMO)"/><rect x="823.1" y="872.6" width="11" height="11" rx="2" fill="url(#gMB)"/><path d="M831.3000000000001,836.9 L835.9,836.9 L835.9,844.4 L839.1,844.4 L833.6,850.4 L828.1,844.4 L831.3000000000001,844.4 Z" fill="url(#gMO)"/><path d="M848.4,887 L856.4,895 M856.4,887 L848.4,895" stroke="url(#gMB)" stroke-width="4" stroke-linecap="round"/><path d="M916.0,824 L920.5999999999999,824 L920.5999999999999,831.5 L923.8,831.5 L918.3,837.5 L912.8,831.5 L916.0,831.5 Z" fill="url(#gMO)"/><path d="M925.3,848.3 L933.3,856.3 M933.3,848.3 L925.3,856.3" stroke="url(#gMB)" stroke-width="4" stroke-linecap="round"/><path d="M1017.9000000000001,802.4 L1022.5,802.4 L1022.5,809.9 L1025.7,809.9 L1020.2,815.9 L1014.7,809.9 L1017.9000000000001,809.9 Z" fill="url(#gMO)"/><rect x="1035.9" y="793.9" width="11" height="11" rx="2" fill="url(#gMB)"/><path d="M1045.0,716.8 L1049.6,716.8 L1049.6,724.3 L1052.8,724.3 L1047.3,730.3 L1041.8,724.3 L1045.0,724.3 Z" fill="url(#gMO)"/><rect x="1102.1" y="786.3" width="13" height="6" fill="url(#gMB)"/><path d="M1126.9,826.8 L1131.5,826.8 L1131.5,819.3 L1134.7,819.3 L1129.2,813.3 L1123.7,819.3 L1126.9,819.3 Z" fill="url(#gMB)"/><path d="M1201.1000000000001,793.7 L1205.7,793.7 L1205.7,786.2 L1208.9,786.2 L1203.4,780.2 L1197.9,786.2 L1201.1000000000001,786.2 Z" fill="url(#gMB)"/><rect x="1159.2" y="752.2" width="13" height="6" fill="url(#gMO)"/><path d="M1265.5,748.5 L1273.5,756.5 M1273.5,748.5 L1265.5,756.5" stroke="url(#gMO)" stroke-width="4" stroke-linecap="round"/><path d="M1326.1000000000001,821.7 L1330.7,821.7 L1330.7,814.2 L1333.9,814.2 L1328.4,808.2 L1322.9,814.2 L1326.1000000000001,814.2 Z" fill="url(#gMB)"/><path d="M1340.4,775.2 L1348.4,783.2 M1348.4,775.2 L1340.4,783.2" stroke="url(#gMO)" stroke-width="4" stroke-linecap="round"/><path d="M1363.8,763.7 L1368.3999999999999,763.7 L1368.3999999999999,771.2 L1371.6,771.2 L1366.1,777.2 L1360.6,771.2 L1363.8,771.2 Z" fill="url(#gMO)"/><path d="M1408.5,768.4 L1416.5,776.4 M1416.5,768.4 L1408.5,776.4" stroke="url(#gMB)" stroke-width="4" stroke-linecap="round"/><path d="M1423.1000000000001,722.3 L1427.7,722.3 L1427.7,729.8 L1430.9,729.8 L1425.4,735.8 L1419.9,729.8 L1423.1000000000001,729.8 Z" fill="url(#gMO)"/><path d="M1476.3,731.9 L1484.3,739.9 M1484.3,731.9 L1476.3,739.9" stroke="url(#gMB)" stroke-width="4" stroke-linecap="round"/><path d="M1497.3,713 L1501.8999999999999,713 L1501.8999999999999,720.5 L1505.1,720.5 L1499.6,726.5 L1494.1,720.5 L1497.3,720.5 Z" fill="url(#gMO)"/><path d="M1544.4,745.3 L1552.4,753.3 M1552.4,745.3 L1544.4,753.3" stroke="url(#gMB)" stroke-width="4" stroke-linecap="round"/><path d="M1570.9,714.2 L1575.5,714.2 L1575.5,721.7 L1578.7,721.7 L1573.2,727.7 L1567.7,721.7 L1570.9,721.7 Z" fill="url(#gMO)"/><path d="M1614.4,775.5 L1622.4,783.5 M1622.4,775.5 L1614.4,783.5" stroke="url(#gMB)" stroke-width="4" stroke-linecap="round"/><path d="M1633.0,740.7 L1637.6,740.7 L1637.6,748.2 L1640.8,748.2 L1635.3,754.2 L1629.8,748.2 L1633.0,748.2 Z" fill="url(#gMO)"/><path d="M1683.2,775.5 L1691.2,783.5 M1691.2,775.5 L1683.2,783.5" stroke="url(#gMB)" stroke-width="4" stroke-linecap="round"/><path d="M1698.8,756.5 L1703.3999999999999,756.5 L1703.3999999999999,764.0 L1706.6,764.0 L1701.1,770.0 L1695.6,764.0 L1698.8,764.0 Z" fill="url(#gMO)"/><path d="M1750.3,789.6 L1758.3,797.6 M1758.3,789.6 L1750.3,797.6" stroke="url(#gMB)" stroke-width="4" stroke-linecap="round"/><line x1="5" y1="719.5" x2="1809" y2="719.5" stroke="#ffffff" stroke-width="3"/><line x1="44" y1="739.5" x2="1809" y2="739.5" stroke="#ffffff" stroke-width="3"/><line x1="5" y1="758.5" x2="1809" y2="758.5" stroke="#ff1010" stroke-width="5"/></g><clipPath id="cg205"><rect x="206.7" y="686.5" width="74.30000000000001" height="31.0"/></clipPath><rect x="205.7" y="686.5" width="75.30000000000001" height="31.0" fill="#6a5430"/><line x1="206.2" y1="686.5" x2="206.2" y2="717.5" stroke="#b08a3a" stroke-width="1"/><g clip-path="url(#cg205)"><text x="279.5" y="711" font-size="25" fill="#dedce6" font-weight="normal" text-anchor="end" >,677.5</text></g><clipPath id="cg281"><rect x="282" y="686.5" width="72.5" height="31.0"/></clipPath><rect x="281" y="686.5" width="73.5" height="31.0" fill="#6a5430"/><line x1="281.5" y1="686.5" x2="281.5" y2="717.5" stroke="#b08a3a" stroke-width="1"/><g clip-path="url(#cg281)"><text x="352.3" y="711" font-size="25" fill="#dedce6" font-weight="normal" text-anchor="end" >,358.3</text></g><clipPath id="cg354"><rect x="355.5" y="686.5" width="12.899999999999977" height="31.0"/></clipPath><rect x="354.5" y="686.5" width="13.899999999999977" height="31.0" fill="#6a5430"/><line x1="355.0" y1="686.5" x2="355.0" y2="717.5" stroke="#b08a3a" stroke-width="1"/><g clip-path="url(#cg354)"><text x="367.5" y="711" font-size="25" fill="#dedce6" font-weight="normal" text-anchor="end" >0</text></g><clipPath id="cg368"><rect x="369.4" y="686.5" width="96.30000000000001" height="31.0"/></clipPath><rect x="368.4" y="686.5" width="97.30000000000001" height="31.0" fill="#6a5430"/><line x1="368.9" y1="686.5" x2="368.9" y2="717.5" stroke="#b08a3a" stroke-width="1"/><g clip-path="url(#cg368)"><text x="462.9" y="711" font-size="25" fill="#dedce6" font-weight="normal" text-anchor="end" >26,576.2</text></g><clipPath id="cg465"><rect x="466.7" y="686.5" width="4.0" height="31.0"/></clipPath><rect x="465.7" y="686.5" width="5.0" height="31.0" fill="#6a5430"/><line x1="466.2" y1="686.5" x2="466.2" y2="717.5" stroke="#b08a3a" stroke-width="1"/><clipPath id="cg522"><rect x="523.2" y="686.5" width="141.89999999999998" height="31.0"/></clipPath><rect x="522.2" y="686.5" width="142.89999999999998" height="31.0" fill="#6a5430"/><line x1="522.7" y1="686.5" x2="522.7" y2="717.5" stroke="#b08a3a" stroke-width="1"/><g clip-path="url(#cg522)"><text x="526.5" y="711" font-size="25" fill="#dedce6" font-weight="normal" text-anchor="start" >1@26,531.6</text></g><clipPath id="cg665"><rect x="666.1" y="686.5" width="28.199999999999932" height="31.0"/></clipPath><rect x="665.1" y="686.5" width="29.199999999999932" height="31.0" fill="#6a5430"/><line x1="665.6" y1="686.5" x2="665.6" y2="717.5" stroke="#b08a3a" stroke-width="1"/><g clip-path="url(#cg665)"><text x="691.5" y="711" font-size="25" fill="#dedce6" font-weight="normal" text-anchor="end" >5.1</text></g><clipPath id="cg694"><rect x="695.3" y="686.5" width="46.200000000000045" height="31.0"/></clipPath><rect x="694.3" y="686.5" width="47.200000000000045" height="31.0" fill="#6a5430"/><line x1="694.8" y1="686.5" x2="694.8" y2="717.5" stroke="#b08a3a" stroke-width="1"/><g clip-path="url(#cg694)"><text x="738.5" y="711" font-size="25" fill="#dedce6" font-weight="normal" text-anchor="end" >71.0</text></g><clipPath id="cg741"><rect x="742.5" y="686.5" width="13.200000000000045" height="31.0"/></clipPath><rect x="741.5" y="686.5" width="14.200000000000045" height="31.0" fill="#6a5430"/><line x1="742.0" y1="686.5" x2="742.0" y2="717.5" stroke="#b08a3a" stroke-width="1"/><g clip-path="url(#cg741)"><text x="757.5" y="711" font-size="25" fill="#dedce6" font-weight="normal" text-anchor="end" >0,</text></g><clipPath id="cg755"><rect x="756.7" y="686.5" width="103.89999999999998" height="31.0"/></clipPath><rect x="755.7" y="686.5" width="104.89999999999998" height="31.0" fill="#6a5430"/><line x1="756.2" y1="686.5" x2="756.2" y2="717.5" stroke="#b08a3a" stroke-width="1"/><g clip-path="url(#cg755)"><text x="856.5" y="711" font-size="25" fill="#dedce6" font-weight="normal" text-anchor="end" >27,600.6</text></g><clipPath id="cg860"><rect x="861.6" y="686.5" width="10.799999999999955" height="31.0"/></clipPath><rect x="860.6" y="686.5" width="11.799999999999955" height="31.0" fill="#6a5430"/><line x1="861.1" y1="686.5" x2="861.1" y2="717.5" stroke="#b08a3a" stroke-width="1"/><g clip-path="url(#cg860)"><text x="869.5" y="711" font-size="25" fill="#dedce6" font-weight="normal" text-anchor="end" >1</text></g><clipPath id="cg872"><rect x="873.4" y="686.5" width="32.39999999999998" height="31.0"/></clipPath><rect x="872.4" y="686.5" width="33.39999999999998" height="31.0" fill="#6a5430"/><line x1="872.9" y1="686.5" x2="872.9" y2="717.5" stroke="#b08a3a" stroke-width="1"/><g clip-path="url(#cg872)"><text x="904.5" y="711" font-size="25" fill="#dedce6" font-weight="normal" text-anchor="end" >3.5</text></g><clipPath id="cg905"><rect x="906.8" y="686.5" width="83.5" height="31.0"/></clipPath><rect x="905.8" y="686.5" width="84.5" height="31.0" fill="#6a5430"/><line x1="906.3" y1="686.5" x2="906.3" y2="717.5" stroke="#b08a3a" stroke-width="1"/><g clip-path="url(#cg905)"><text x="986.5" y="711" font-size="25" fill="#dedce6" font-weight="normal" text-anchor="end" >8,404.1</text></g><clipPath id="cg990"><rect x="991.3" y="686.5" width="101.10000000000014" height="31.0"/></clipPath><rect x="990.3" y="686.5" width="102.10000000000014" height="31.0" fill="#6a5430"/><line x1="990.8" y1="686.5" x2="990.8" y2="717.5" stroke="#b08a3a" stroke-width="1"/><g clip-path="url(#cg990)"><text x="1089.5" y="711" font-size="25" fill="#dedce6" font-weight="normal" text-anchor="end" >28,699.5</text></g><clipPath id="cg1092"><rect x="1093.4" y="686.5" width="26.199999999999818" height="31.0"/></clipPath><rect x="1092.4" y="686.5" width="27.199999999999818" height="31.0" fill="#6a5430"/><line x1="1092.9" y1="686.5" x2="1092.9" y2="717.5" stroke="#b08a3a" stroke-width="1"/><g clip-path="url(#cg1092)"><text x="1109.5" y="711" font-size="25" fill="#dedce6" font-weight="normal" text-anchor="end" >.5</text></g><clipPath id="cg1119"><rect x="1120.6" y="686.5" width="116.90000000000009" height="31.0"/></clipPath><rect x="1119.6" y="686.5" width="117.90000000000009" height="31.0" fill="#6a5430"/><line x1="1120.1" y1="686.5" x2="1120.1" y2="717.5" stroke="#b08a3a" stroke-width="1"/><g clip-path="url(#cg1119)"><text x="1234.7" y="711" font-size="25" fill="#dedce6" font-weight="normal" text-anchor="end" >@29,421.5</text></g><clipPath id="cg1237"><rect x="1238.5" y="686.5" width="103.70000000000005" height="31.0"/></clipPath><rect x="1237.5" y="686.5" width="104.70000000000005" height="31.0" fill="#6a5430"/><line x1="1238.0" y1="686.5" x2="1238.0" y2="717.5" stroke="#b08a3a" stroke-width="1"/><g clip-path="url(#cg1237)"><text x="1338.0" y="711" font-size="25" fill="#dedce6" font-weight="normal" text-anchor="end" >29,460.8</text></g><clipPath id="cg1342"><rect x="1343.2" y="686.5" width="73.39999999999986" height="31.0"/></clipPath><rect x="1342.2" y="686.5" width="74.39999999999986" height="31.0" fill="#6a5430"/><line x1="1342.7" y1="686.5" x2="1342.7" y2="717.5" stroke="#b08a3a" stroke-width="1"/><g clip-path="url(#cg1342)"><text x="1414.1" y="711" font-size="25" fill="#dedce6" font-weight="normal" text-anchor="end" >,134.5</text></g><clipPath id="cg1416"><rect x="1417.6" y="686.5" width="20.700000000000045" height="31.0"/></clipPath><rect x="1416.6" y="686.5" width="21.700000000000045" height="31.0" fill="#6a5430"/><line x1="1417.1" y1="686.5" x2="1417.1" y2="717.5" stroke="#b08a3a" stroke-width="1"/><g clip-path="url(#cg1416)"><text x="1435.8" y="711" font-size="25" fill="#dedce6" font-weight="normal" text-anchor="end" >.0</text></g><clipPath id="cg1438"><rect x="1439.3" y="686.5" width="57.700000000000045" height="31.0"/></clipPath><rect x="1438.3" y="686.5" width="58.700000000000045" height="31.0" fill="#6a5430"/><line x1="1438.8" y1="686.5" x2="1438.8" y2="717.5" stroke="#b08a3a" stroke-width="1"/><g clip-path="url(#cg1438)"><text x="1494.3" y="711" font-size="25" fill="#dedce6" font-weight="normal" text-anchor="end" >758.2</text></g><clipPath id="cg1497"><rect x="1498" y="686.5" width="73.5" height="31.0"/></clipPath><rect x="1497" y="686.5" width="74.5" height="31.0" fill="#6a5430"/><line x1="1497.5" y1="686.5" x2="1497.5" y2="717.5" stroke="#b08a3a" stroke-width="1"/><g clip-path="url(#cg1497)"><text x="1568.5" y="711" font-size="25" fill="#dedce6" font-weight="normal" text-anchor="end" >,898.9</text></g><clipPath id="cg1571"><rect x="1572.5" y="686.5" width="73.09999999999991" height="31.0"/></clipPath><rect x="1571.5" y="686.5" width="74.09999999999991" height="31.0" fill="#6a5430"/><line x1="1572.0" y1="686.5" x2="1572.0" y2="717.5" stroke="#b08a3a" stroke-width="1"/><g clip-path="url(#cg1571)"><text x="1642.0" y="711" font-size="25" fill="#dedce6" font-weight="normal" text-anchor="end" >,882.2</text></g><clipPath id="cg1645"><rect x="1646.6" y="686.5" width="61.40000000000009" height="31.0"/></clipPath><rect x="1645.6" y="686.5" width="62.40000000000009" height="31.0" fill="#6a5430"/><line x1="1646.1" y1="686.5" x2="1646.1" y2="717.5" stroke="#b08a3a" stroke-width="1"/><g clip-path="url(#cg1645)"><text x="1704.0" y="711" font-size="25" fill="#dedce6" font-weight="normal" text-anchor="end" >501.6</text></g><clipPath id="cg1708"><rect x="1709" y="686.5" width="64.29999999999995" height="31.0"/></clipPath><rect x="1708" y="686.5" width="65.29999999999995" height="31.0" fill="#6a5430"/><line x1="1708.5" y1="686.5" x2="1708.5" y2="717.5" stroke="#b08a3a" stroke-width="1"/><g clip-path="url(#cg1708)"><text x="1770.1" y="711" font-size="25" fill="#dedce6" font-weight="normal" text-anchor="end" >313.4</text></g><rect x="470.7" y="686.5" width="51.5" height="31" fill="#0b0b0b"/><rect x="1773.3" y="686.5" width="35.5" height="31" fill="#0b0b0b"/><clipPath id="cb5"><rect x="6" y="1009.5" width="101.7" height="31.5"/></clipPath><rect x="5" y="1009.5" width="102.7" height="31.5" fill="#3c4b66"/><line x1="5.5" y1="1009.5" x2="5.5" y2="1041" stroke="#5a86e8" stroke-width="1"/><g clip-path="url(#cb5)"><text x="104.2" y="1033.5" font-size="25" fill="#e8e4dc" font-weight="normal" text-anchor="end" >28,081.4</text></g><clipPath id="cb107"><rect x="108.7" y="1009.5" width="86.8" height="31.5"/></clipPath><rect x="107.7" y="1009.5" width="87.8" height="31.5" fill="#3c4b66"/><line x1="108.2" y1="1009.5" x2="108.2" y2="1041" stroke="#5a86e8" stroke-width="1"/><g clip-path="url(#cb107)"><text x="106.5" y="1033.5" font-size="25" fill="#e8e4dc" font-weight="normal" text-anchor="start" >8,303.6</text></g><clipPath id="cb195"><rect x="196.5" y="1009.5" width="41.5" height="31.5"/></clipPath><rect x="195.5" y="1009.5" width="42.5" height="31.5" fill="#3c4b66"/><line x1="196.0" y1="1009.5" x2="196.0" y2="1041" stroke="#5a86e8" stroke-width="1"/><g clip-path="url(#cb195)"><text x="233.2" y="1033.5" font-size="25" fill="#e8e4dc" font-weight="normal" text-anchor="end" >56.1</text></g><clipPath id="cb238"><rect x="239" y="1009.5" width="46" height="31.5"/></clipPath><rect x="238" y="1009.5" width="47" height="31.5" fill="#3c4b66"/><line x1="238.5" y1="1009.5" x2="238.5" y2="1041" stroke="#5a86e8" stroke-width="1"/><g clip-path="url(#cb238)"><text x="282.5" y="1033.5" font-size="25" fill="#e8e4dc" font-weight="normal" text-anchor="end" >07.9</text></g><clipPath id="cb285"><rect x="286" y="1009.5" width="104.60000000000002" height="31.5"/></clipPath><rect x="285" y="1009.5" width="105.60000000000002" height="31.5" fill="#3c4b66"/><line x1="285.5" y1="1009.5" x2="285.5" y2="1041" stroke="#5a86e8" stroke-width="1"/><g clip-path="url(#cb285)"><text x="387.2" y="1033.5" font-size="25" fill="#e8e4dc" font-weight="normal" text-anchor="end" >26,838.0</text></g><clipPath id="cb421"><rect x="422.5" y="1009.5" width="142.29999999999995" height="31.5"/></clipPath><rect x="421.5" y="1009.5" width="143.29999999999995" height="31.5" fill="#3c4b66"/><line x1="422.0" y1="1009.5" x2="422.0" y2="1041" stroke="#5a86e8" stroke-width="1"/><g clip-path="url(#cb421)"><text x="425" y="1033.5" font-size="25" fill="#e8e4dc" font-weight="normal" text-anchor="start" >1@26,455.9</text></g><clipPath id="cb564"><rect x="565.8" y="1009.5" width="16.600000000000023" height="31.5"/></clipPath><rect x="564.8" y="1009.5" width="17.600000000000023" height="31.5" fill="#3c4b66"/><line x1="565.3" y1="1009.5" x2="565.3" y2="1041" stroke="#5a86e8" stroke-width="1"/><g clip-path="url(#cb564)"><text x="579.5" y="1033.5" font-size="25" fill="#e8e4dc" font-weight="normal" text-anchor="end" >9</text></g><clipPath id="cb582"><rect x="583.4" y="1009.5" width="99.60000000000002" height="31.5"/></clipPath><rect x="582.4" y="1009.5" width="100.60000000000002" height="31.5" fill="#3c4b66"/><line x1="582.9" y1="1009.5" x2="582.9" y2="1041" stroke="#5a86e8" stroke-width="1"/><g clip-path="url(#cb582)"><text x="678.0" y="1033.5" font-size="25" fill="#e8e4dc" font-weight="normal" text-anchor="end" >26,495.1</text></g><clipPath id="cb683"><rect x="684" y="1009.5" width="61.89999999999998" height="31.5"/></clipPath><rect x="683" y="1009.5" width="62.89999999999998" height="31.5" fill="#3c4b66"/><line x1="683.5" y1="1009.5" x2="683.5" y2="1041" stroke="#5a86e8" stroke-width="1"/><g clip-path="url(#cb683)"><text x="743.5" y="1033.5" font-size="25" fill="#e8e4dc" font-weight="normal" text-anchor="end" >945.5</text></g><clipPath id="cb745"><rect x="746.9" y="1009.5" width="68.10000000000002" height="31.5"/></clipPath><rect x="745.9" y="1009.5" width="69.10000000000002" height="31.5" fill="#3c4b66"/><line x1="746.4" y1="1009.5" x2="746.4" y2="1041" stroke="#5a86e8" stroke-width="1"/><g clip-path="url(#cb745)"><text x="812.5" y="1033.5" font-size="25" fill="#e8e4dc" font-weight="normal" text-anchor="end" >641.0</text></g><clipPath id="cb815"><rect x="816" y="1009.5" width="39.200000000000045" height="31.5"/></clipPath><rect x="815" y="1009.5" width="40.200000000000045" height="31.5" fill="#3c4b66"/><line x1="815.5" y1="1009.5" x2="815.5" y2="1041" stroke="#5a86e8" stroke-width="1"/><g clip-path="url(#cb815)"><text x="814" y="1033.5" font-size="25" fill="#e8e4dc" font-weight="normal" text-anchor="start" >0.67</text></g><clipPath id="cb855"><rect x="856.2" y="1009.5" width="44.09999999999991" height="31.5"/></clipPath><rect x="855.2" y="1009.5" width="45.09999999999991" height="31.5" fill="#3c4b66"/><line x1="855.7" y1="1009.5" x2="855.7" y2="1041" stroke="#5a86e8" stroke-width="1"/><g clip-path="url(#cb855)"><text x="898.0" y="1033.5" font-size="25" fill="#e8e4dc" font-weight="normal" text-anchor="end" >75.1</text></g><clipPath id="cb900"><rect x="901.3" y="1009.5" width="22.90000000000009" height="31.5"/></clipPath><rect x="900.3" y="1009.5" width="23.90000000000009" height="31.5" fill="#3c4b66"/><line x1="900.8" y1="1009.5" x2="900.8" y2="1041" stroke="#5a86e8" stroke-width="1"/><g clip-path="url(#cb900)"><text x="921.9" y="1033.5" font-size="25" fill="#e8e4dc" font-weight="normal" text-anchor="end" >.4</text></g><clipPath id="cb924"><rect x="925.2" y="1009.5" width="75.69999999999993" height="31.5"/></clipPath><rect x="924.2" y="1009.5" width="76.69999999999993" height="31.5" fill="#3c4b66"/><line x1="924.7" y1="1009.5" x2="924.7" y2="1041" stroke="#5a86e8" stroke-width="1"/><g clip-path="url(#cb924)"><text x="999.9" y="1033.5" font-size="25" fill="#e8e4dc" font-weight="normal" text-anchor="end" >8,466.2</text></g><clipPath id="cb1000"><rect x="1001.9" y="1009.5" width="111.60000000000002" height="31.5"/></clipPath><rect x="1000.9" y="1009.5" width="112.60000000000002" height="31.5" fill="#3c4b66"/><line x1="1001.4" y1="1009.5" x2="1001.4" y2="1041" stroke="#5a86e8" stroke-width="1"/><g clip-path="url(#cb1000)"><text x="1110.5" y="1033.5" font-size="25" fill="#e8e4dc" font-weight="normal" text-anchor="end" >@29,199.5</text></g><clipPath id="cb1113"><rect x="1114.5" y="1009.5" width="65.5" height="31.5"/></clipPath><rect x="1113.5" y="1009.5" width="66.5" height="31.5" fill="#3c4b66"/><line x1="1114.0" y1="1009.5" x2="1114.0" y2="1041" stroke="#5a86e8" stroke-width="1"/><g clip-path="url(#cb1113)"><text x="1177.1" y="1033.5" font-size="25" fill="#e8e4dc" font-weight="normal" text-anchor="end" >272.5</text></g><clipPath id="cb1180"><rect x="1181" y="1009.5" width="20.5" height="31.5"/></clipPath><rect x="1180" y="1009.5" width="21.5" height="31.5" fill="#3c4b66"/><line x1="1180.5" y1="1009.5" x2="1180.5" y2="1041" stroke="#5a86e8" stroke-width="1"/><g clip-path="url(#cb1180)"><text x="1198.5" y="1033.5" font-size="25" fill="#e8e4dc" font-weight="normal" text-anchor="end" >.5</text></g><clipPath id="cb1201"><rect x="1202.5" y="1009.5" width="72.5" height="31.5"/></clipPath><rect x="1201.5" y="1009.5" width="73.5" height="31.5" fill="#3c4b66"/><line x1="1202.0" y1="1009.5" x2="1202.0" y2="1041" stroke="#5a86e8" stroke-width="1"/><g clip-path="url(#cb1201)"><text x="1271.5" y="1033.5" font-size="25" fill="#e8e4dc" font-weight="normal" text-anchor="end" >,359.6</text></g><clipPath id="cb1275"><rect x="1276" y="1009.5" width="124.5" height="31.5"/></clipPath><rect x="1275" y="1009.5" width="125.5" height="31.5" fill="#3c4b66"/><line x1="1275.5" y1="1009.5" x2="1275.5" y2="1041" stroke="#5a86e8" stroke-width="1"/><g clip-path="url(#cb1275)"><text x="1396.9" y="1033.5" font-size="25" fill="#e8e4dc" font-weight="normal" text-anchor="end" >@29,053.5</text></g><clipPath id="cb1400"><rect x="1401.5" y="1009.5" width="82.5" height="31.5"/></clipPath><rect x="1400.5" y="1009.5" width="83.5" height="31.5" fill="#3c4b66"/><line x1="1401.0" y1="1009.5" x2="1401.0" y2="1041" stroke="#5a86e8" stroke-width="1"/><g clip-path="url(#cb1400)"><text x="1481.2" y="1033.5" font-size="25" fill="#e8e4dc" font-weight="normal" text-anchor="end" >9,497.7</text></g><clipPath id="cb1484"><rect x="1485" y="1009.5" width="67.59999999999991" height="31.5"/></clipPath><rect x="1484" y="1009.5" width="68.59999999999991" height="31.5" fill="#3c4b66"/><line x1="1484.5" y1="1009.5" x2="1484.5" y2="1041" stroke="#5a86e8" stroke-width="1"/><g clip-path="url(#cb1484)"><text x="1549.1" y="1033.5" font-size="25" fill="#e8e4dc" font-weight="normal" text-anchor="end" >974.4</text></g><clipPath id="cb1552"><rect x="1553.6" y="1009.5" width="66.90000000000009" height="31.5"/></clipPath><rect x="1552.6" y="1009.5" width="67.90000000000009" height="31.5" fill="#3c4b66"/><line x1="1553.1" y1="1009.5" x2="1553.1" y2="1041" stroke="#5a86e8" stroke-width="1"/><g clip-path="url(#cb1552)"><text x="1615.5" y="1033.5" font-size="25" fill="#e8e4dc" font-weight="normal" text-anchor="end" >802.7</text></g><clipPath id="cb1620"><rect x="1621.5" y="1009.5" width="68.5" height="31.5"/></clipPath><rect x="1620.5" y="1009.5" width="69.5" height="31.5" fill="#3c4b66"/><line x1="1621.0" y1="1009.5" x2="1621.0" y2="1041" stroke="#5a86e8" stroke-width="1"/><g clip-path="url(#cb1620)"><text x="1687.4" y="1033.5" font-size="25" fill="#e8e4dc" font-weight="normal" text-anchor="end" >,420.6</text></g><clipPath id="cb1690"><rect x="1691" y="1009.5" width="68.5" height="31.5"/></clipPath><rect x="1690" y="1009.5" width="69.5" height="31.5" fill="#3c4b66"/><line x1="1690.5" y1="1009.5" x2="1690.5" y2="1041" stroke="#5a86e8" stroke-width="1"/><g clip-path="url(#cb1690)"><text x="1756.5" y="1033.5" font-size="25" fill="#e8e4dc" font-weight="normal" text-anchor="end" >426.9</text></g><clipPath id="cb1759"><rect x="1760.5" y="1009.5" width="48.5" height="31.5"/></clipPath><rect x="1759.5" y="1009.5" width="49.5" height="31.5" fill="#3c4b66"/><line x1="1760.0" y1="1009.5" x2="1760.0" y2="1041" stroke="#5a86e8" stroke-width="1"/><g clip-path="url(#cb1759)"><text x="1759" y="1033.5" font-size="25" fill="#e8e4dc" font-weight="normal" text-anchor="start" >210.</text></g><line x1="5" y1="1010" x2="390.6" y2="1010" stroke="#6a9af8" stroke-width="1.5"/><line x1="421.5" y1="1010" x2="1809" y2="1010" stroke="#6a9af8" stroke-width="1.5"/><text x="8" y="1039" font-size="11" fill="#c8c8c8" font-weight="normal" text-anchor="start" >© IT-Finance.com  <tspan font-style="italic">Data is indicative</tspan></text><line x1="834" y1="1009" x2="834" y2="1041" stroke="#c84646" stroke-width="1"/><rect x="5" y="687" width="200.5" height="34.5" fill="url(#gLab)"/><text x="8.5" y="712" font-size="25" fill="#f2ecd8" font-weight="normal" text-anchor="start" >Price</text><path d="M84.2,700.8 L83.0,690.5 L92.0,690.5 L91.0,697.0 L99.0,697.0 L99.0,704.5 L87.8,704.2 L75.8,717.2 L72.2,713.8 Z" fill="#000" stroke="#ececec" stroke-width="2.4" stroke-linejoin="round"/><rect x="104.5" y="690" width="29" height="28" rx="4.5" fill="#000" stroke="#e8e8e8" stroke-width="2.6"/><path d="M105.5,694.5 Q105.5,691 109.0,691 L129.0,691 Q132.5,691 132.5,694.5 L132.5,699 L105.5,699 Z" fill="#e4e4e4"/><path d="M152.5,693 Q161,694 161,706 L165,712 L140,712 L144,706 Q144,694 152.5,693 Z" fill="#d0d0d0"/><rect x="150" y="712" width="5" height="4" fill="#d0d0d0"/><line x1="147" y1="706" x2="158" y2="706" stroke="#555" stroke-width="1.2"/><path d="M139,693 Q137,697 139,700 M166,693 Q168,697 166,700" stroke="#bbb" stroke-width="1.2" fill="none"/><circle cx="186" cy="703.5" r="15" fill="url(#gCircle)"/><path d="M180.5,698.0 L191.5,709.0 M191.5,698.0 L180.5,709.0" stroke="#000" stroke-width="4" stroke-linecap="round"/><clipPath id="c793"><rect x="44" y="721" width="200" height="30"/></clipPath><text x="37" y="736" font-size="24.5" fill="#d8d8d8" font-weight="normal" text-anchor="start" clip-path="url(#c793)">793</text><rect x="5" y="721" width="39" height="34" fill="url(#gLab)" stroke="#2a2a2a" stroke-width="1"/><path d="M27,727 Q15,727 14.5,742" stroke="#ff5a5a" stroke-width="4.5" fill="none" stroke-linecap="round"/><polygon points="7.5,741.5 21,741.5 14.2,750" fill="#ff4a4a"/><path d="M22,748.5 Q33,748 33,734" stroke="#30d030" stroke-width="4.5" fill="none" stroke-linecap="round"/><polygon points="25.8,734.5 40.3,734.5 33,726" fill="#30d030"/><line x1="1809.5" y1="686" x2="1809.5" y2="1041" stroke="#6a6a6a" stroke-width="1.2"/><rect x="1810" y="686" width="99" height="355" fill="#1e1e1e"/><rect x="1814.5" y="693" width="72.0" height="18.5" fill="url(#gPink)" stroke="#5a4a4a" stroke-width="1"/><clipPath id="cp693"><rect x="1814.5" y="693" width="72.0" height="18.5"/></clipPath><g clip-path="url(#cp693)"><text x="1817" y="717" font-size="24" fill="#000" font-weight="normal" text-anchor="start" >1 hour</text></g><rect x="1814.5" y="711.5" width="72.0" height="22.5" fill="url(#gPink)" stroke="#5a4a4a" stroke-width="1"/><clipPath id="cp711"><rect x="1814.5" y="711.5" width="72.0" height="22.5"/></clipPath><g clip-path="url(#cp711)"><text x="1817" y="734" font-size="24" fill="#000" font-weight="normal" text-anchor="start" >1 hour</text></g><rect x="1814.5" y="734" width="72.0" height="10" fill="url(#gPink)" stroke="#5a4a4a" stroke-width="1"/><rect x="1814.5" y="743.7" width="87.5" height="24.299999999999955" fill="url(#gPink)" stroke="#5a4a4a" stroke-width="1"/><clipPath id="cp743"><rect x="1814.5" y="743.7" width="87.5" height="24.299999999999955"/></clipPath><g clip-path="url(#cp743)"><text x="1817" y="765" font-size="24" fill="#000" font-weight="normal" text-anchor="start" >1 hour  v</text></g><rect x="1814.5" y="745.6" width="72.0" height="11.799999999999955" fill="url(#gPink)" stroke="#5a4a4a" stroke-width="1"/><clipPath id="cp745"><rect x="1814.5" y="745.6" width="72.0" height="11.799999999999955"/></clipPath><g clip-path="url(#cp745)"><text x="1817" y="770" font-size="24" fill="#000" font-weight="normal" text-anchor="start" >1 hour</text></g><rect x="1814.5" y="757.4" width="72.0" height="10.600000000000023" fill="url(#gPink)" stroke="#5a4a4a" stroke-width="1"/><clipPath id="cp757"><rect x="1814.5" y="757.4" width="72.0" height="10.600000000000023"/></clipPath><g clip-path="url(#cp757)"><text x="1817" y="782" font-size="24" fill="#000" font-weight="normal" text-anchor="start" >1 hour</text></g><rect x="1814.5" y="768" width="95" height="31" fill="url(#gDark)" stroke="#444" stroke-width="1"/><text x="1817" y="793" font-size="24.8" fill="#e86060" font-weight="normal" text-anchor="start" >29,214.1</text><rect x="1814.5" y="800" width="72.0" height="26" fill="url(#gGreen)" stroke="#5a4a4a" stroke-width="1"/><clipPath id="cp800"><rect x="1814.5" y="800" width="72.0" height="26"/></clipPath><g clip-path="url(#cp800)"><text x="1817" y="822" font-size="24" fill="#000" font-weight="normal" text-anchor="start" >1 hour</text></g><text x="1816" y="886" font-size="24.8" fill="#e8e8e8" font-weight="normal" text-anchor="start" >28,000</text><rect x="1814.5" y="897" width="55.5" height="29" fill="url(#gGreen)" stroke="#4a5a4a" stroke-width="1"/><text x="1817" y="920" font-size="24" fill="#000" font-weight="normal" text-anchor="start" >Daily</text><clipPath id="c27"><rect x="1810" y="900" width="99" height="60"/></clipPath><text x="1816" y="962" font-size="24.8" fill="#e8e8e8" font-weight="normal" text-anchor="start" clip-path="url(#c27)">27,000</text><rect x="1814.5" y="960.5" width="87.5" height="29" fill="url(#gGreen)" stroke="#4a5a4a" stroke-width="1"/><text x="1817" y="984" font-size="24" fill="#000" font-weight="normal" text-anchor="start" >Monthly</text><line x1="1809" y1="719" x2="1815" y2="719" stroke="#888" stroke-width="1"/><line x1="1809" y1="739.5" x2="1815" y2="739.5" stroke="#888" stroke-width="1"/><line x1="1809" y1="758.5" x2="1815" y2="758.5" stroke="#888" stroke-width="1"/><line x1="1809" y1="784.5" x2="1815" y2="784.5" stroke="#888" stroke-width="1"/><line x1="1809" y1="876.5" x2="1815" y2="876.5" stroke="#888" stroke-width="1"/><line x1="1809" y1="911.5" x2="1815" y2="911.5" stroke="#888" stroke-width="1"/><line x1="1809" y1="953" x2="1815" y2="953" stroke="#888" stroke-width="1"/><line x1="1809" y1="975" x2="1815" y2="975" stroke="#888" stroke-width="1"/><rect x="4" y="1041" width="1905" height="37" fill="#1e1e1e"/><rect x="4" y="1077.5" width="1905" height="1.5" fill="#555"/><rect x="4" y="1079" width="1905" height="7" fill="#1c1c1c"/><line x1="63.5" y1="1041" x2="63.5" y2="1045" stroke="#777" stroke-width="1"/><line x1="123.5" y1="1041" x2="123.5" y2="1045" stroke="#777" stroke-width="1"/><line x1="127.5" y1="1041" x2="127.5" y2="1045" stroke="#777" stroke-width="1"/><line x1="212.5" y1="1041" x2="212.5" y2="1045" stroke="#777" stroke-width="1"/><line x1="286.5" y1="1041" x2="286.5" y2="1045" stroke="#777" stroke-width="1"/><line x1="397.5" y1="1041" x2="397.5" y2="1045" stroke="#777" stroke-width="1"/><line x1="496.5" y1="1041" x2="496.5" y2="1045" stroke="#777" stroke-width="1"/><line x1="593.5" y1="1041" x2="593.5" y2="1045" stroke="#777" stroke-width="1"/><line x1="676.5" y1="1041" x2="676.5" y2="1045" stroke="#777" stroke-width="1"/><line x1="752.5" y1="1041" x2="752.5" y2="1045" stroke="#777" stroke-width="1"/><line x1="855.5" y1="1041" x2="855.5" y2="1045" stroke="#777" stroke-width="1"/><line x1="933.5" y1="1041" x2="933.5" y2="1045" stroke="#777" stroke-width="1"/><line x1="1010.5" y1="1041" x2="1010.5" y2="1045" stroke="#777" stroke-width="1"/><line x1="1117.5" y1="1041" x2="1117.5" y2="1045" stroke="#777" stroke-width="1"/><line x1="1202.5" y1="1041" x2="1202.5" y2="1045" stroke="#777" stroke-width="1"/><line x1="1273.5" y1="1041" x2="1273.5" y2="1045" stroke="#777" stroke-width="1"/><line x1="1348.5" y1="1041" x2="1348.5" y2="1045" stroke="#777" stroke-width="1"/><line x1="1412.5" y1="1041" x2="1412.5" y2="1045" stroke="#777" stroke-width="1"/><line x1="1483.5" y1="1041" x2="1483.5" y2="1045" stroke="#777" stroke-width="1"/><line x1="1551.5" y1="1041" x2="1551.5" y2="1045" stroke="#777" stroke-width="1"/><line x1="1621.5" y1="1041" x2="1621.5" y2="1045" stroke="#777" stroke-width="1"/><line x1="1692.5" y1="1041" x2="1692.5" y2="1045" stroke="#777" stroke-width="1"/><line x1="1755.5" y1="1041" x2="1755.5" y2="1045" stroke="#777" stroke-width="1"/><line x1="1758.5" y1="1041" x2="1758.5" y2="1045" stroke="#777" stroke-width="1"/><line x1="834" y1="1041" x2="834" y2="1046" stroke="#ddd" stroke-width="1"/><text x="63.5" y="1069.5" font-size="24" fill="#ece6d6" font-weight="normal" text-anchor="middle" >23</text><text x="123.4" y="1069.5" font-size="24" fill="#ece6d6" font-weight="normal" text-anchor="middle" >25</text><text x="212" y="1069.5" font-size="24" fill="#ece6d6" font-weight="normal" text-anchor="middle" >27</text><text x="286" y="1069.5" font-size="24" fill="#ece6d6" font-weight="normal" text-anchor="middle" >28</text><text x="397" y="1069.5" font-size="24" fill="#ece6d6" font-weight="normal" text-anchor="middle" >29</text><text x="496.4" y="1069.5" font-size="24" fill="#ece6d6" font-weight="normal" text-anchor="middle" >30</text><text x="593.6" y="1069.5" font-size="24" fill="#ece6d6" font-weight="bold" text-anchor="middle" >Nov</text><text x="676.7" y="1069.5" font-size="24" fill="#ece6d6" font-weight="normal" text-anchor="middle" >03</text><text x="1010.6" y="1069.5" font-size="24" fill="#ece6d6" font-weight="normal" text-anchor="middle" >08</text><text x="1117" y="1069.5" font-size="24" fill="#ece6d6" font-weight="normal" text-anchor="middle" >10</text><text x="1202" y="1069.5" font-size="24" fill="#ece6d6" font-weight="normal" text-anchor="middle" >11</text><text x="1273.5" y="1069.5" font-size="24" fill="#ece6d6" font-weight="normal" text-anchor="middle" >12</text><text x="1348.6" y="1069.5" font-size="24" fill="#ece6d6" font-weight="normal" text-anchor="middle" >13</text><text x="1412.5" y="1069.5" font-size="24" fill="#ece6d6" font-weight="normal" text-anchor="middle" >15</text><text x="1483" y="1069.5" font-size="24" fill="#ece6d6" font-weight="normal" text-anchor="middle" >17</text><text x="1551.6" y="1069.5" font-size="24" fill="#ece6d6" font-weight="normal" text-anchor="middle" >18</text><text x="1621.9" y="1069.5" font-size="24" fill="#ece6d6" font-weight="normal" text-anchor="middle" >19</text><text x="1692.5" y="1069.5" font-size="24" fill="#ece6d6" font-weight="normal" text-anchor="middle" >20</text><text x="1755.3" y="1069.5" font-size="24" fill="#ece6d6" font-weight="normal" text-anchor="middle" >22</text><rect x="696.5" y="1047.5" width="276.5" height="27" fill="#ffff10"/><text x="699" y="1071" font-size="25" fill="#000" font-weight="normal" text-anchor="start" >Wed 04-Nov-2020 17:54</text></svg></body></html>
